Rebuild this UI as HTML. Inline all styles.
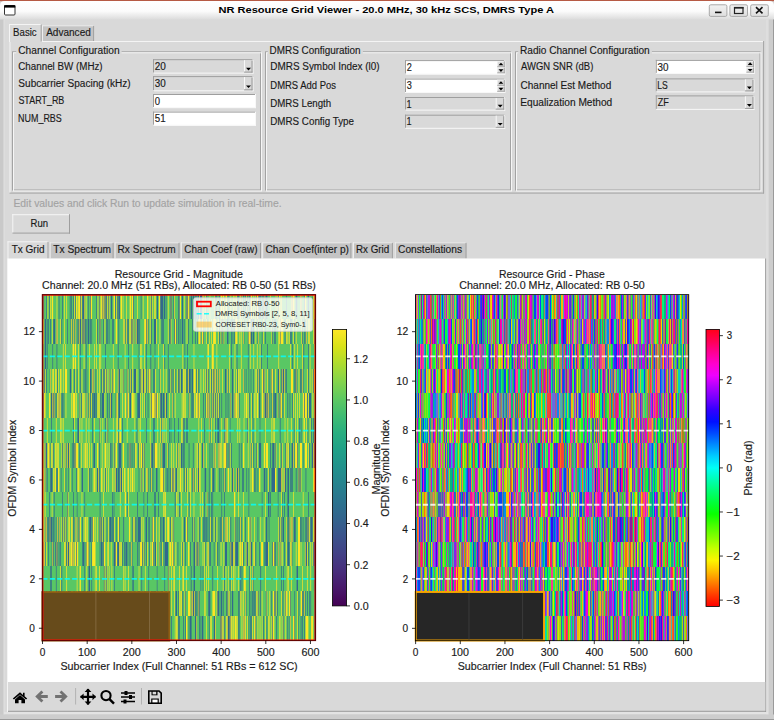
<!DOCTYPE html>
<html><head><meta charset="utf-8"><title>NR Resource Grid Viewer</title>
<style>html,body{margin:0;padding:0;width:774px;height:720px;overflow:hidden;background:#d9d9d9}svg{display:block}text{font-family:"Liberation Sans",sans-serif;white-space:pre}</style>
</head><body><svg width="774" height="720" viewBox="0 0 774 720">
<rect x="0.00" y="0.00" width="774.00" height="720.00" fill="#d9d9d9"/>
<defs><linearGradient id="tb" x1="0" y1="0" x2="0" y2="1"><stop offset="0" stop-color="#ffffff"/><stop offset="0.55" stop-color="#fbfbfb"/><stop offset="1" stop-color="#dcdcdc"/></linearGradient><linearGradient id="btn" x1="0" y1="0" x2="0" y2="1"><stop offset="0" stop-color="#f2f2f2"/><stop offset="1" stop-color="#dedede"/></linearGradient></defs>
<rect x="0.00" y="0.00" width="774.00" height="1.20" fill="#b65a44"/>
<path d="M0 19.5V6Q0 1 5 1H769Q774 1 774 6V19.5Z" fill="url(#tb)"/>
<rect x="4.5" y="5.5" width="10.5" height="9.5" rx="1" fill="#fff" stroke="#333" stroke-width="1"/>
<rect x="4.20" y="5.20" width="11.10" height="2.40" fill="#000"/>
<text x="218.46" y="12.90" font-size="9.93" font-weight="bold" fill="#000" textLength="335.53" lengthAdjust="spacingAndGlyphs">NR Resource Grid Viewer - 20.0 MHz, 30 kHz SCS, DMRS Type A</text>
<rect x="709.3" y="4.8" width="17.6" height="11.6" rx="1.5" fill="url(#btn)" stroke="#a9a9a9" stroke-width="1"/>
<rect x="729.9" y="4.8" width="17.6" height="11.6" rx="1.5" fill="url(#btn)" stroke="#a9a9a9" stroke-width="1"/>
<rect x="750.7" y="4.8" width="17.6" height="11.6" rx="1.5" fill="url(#btn)" stroke="#a9a9a9" stroke-width="1"/>
<rect x="715.00" y="11.60" width="6.50" height="1.60" fill="#111"/>
<rect x="734.5" y="7.5" width="8.5" height="6" fill="none" stroke="#222" stroke-width="1.2"/>
<rect x="734.00" y="7.00" width="9.50" height="1.60" fill="#222"/>
<path d="M756 7.2L762.5 13.4M762.5 7.2L756 13.4" stroke="#111" stroke-width="1.6"/>
<rect x="0.00" y="19.50" width="4.00" height="700.50" fill="#c9c9c9"/>
<rect x="3.50" y="19.50" width="1.00" height="700.50" fill="#e2e2e2"/>
<rect x="768.50" y="19.50" width="5.50" height="700.50" fill="#cdcdcd"/>
<rect x="766.00" y="19.50" width="2.50" height="700.50" fill="#dedede"/>
<rect x="773.00" y="19.50" width="1.00" height="700.50" fill="#9a9a9a"/>
<rect x="0.00" y="714.50" width="774.00" height="5.50" fill="#cdcdcd"/>
<rect x="4.00" y="712.00" width="764.00" height="2.00" fill="#e3e3e3"/>
<rect x="0.00" y="719.00" width="774.00" height="1.00" fill="#9a9a9a"/>
<rect x="9.50" y="41.00" width="754.50" height="152.50" fill="#d9d9d9"/>
<line x1="10.00" y1="41.50" x2="764.00" y2="41.50" stroke="#f4f4f4" stroke-width="1"/>
<line x1="10.00" y1="41.00" x2="10.00" y2="193.00" stroke="#f4f4f4" stroke-width="1"/>
<line x1="763.60" y1="41.00" x2="763.60" y2="193.50" stroke="#a3a3a3" stroke-width="1"/>
<line x1="9.50" y1="193.10" x2="764.00" y2="193.10" stroke="#a3a3a3" stroke-width="1"/>
<rect x="42.00" y="25.50" width="52.00" height="15.50" fill="#c4c4c4"/>
<line x1="42.50" y1="25.50" x2="42.50" y2="41.00" stroke="#eeeeee" stroke-width="1"/>
<line x1="42.00" y1="25.80" x2="93.50" y2="25.80" stroke="#eeeeee" stroke-width="1"/>
<line x1="93.60" y1="26.00" x2="93.60" y2="41.00" stroke="#a0a0a0" stroke-width="1"/>
<rect x="9.00" y="24.00" width="32.50" height="18.00" fill="#d9d9d9"/>
<line x1="9.50" y1="24.00" x2="9.50" y2="42.00" stroke="#f4f4f4" stroke-width="1"/>
<line x1="9.00" y1="24.50" x2="41.00" y2="24.50" stroke="#f4f4f4" stroke-width="1"/>
<line x1="41.20" y1="24.50" x2="41.20" y2="41.50" stroke="#a3a3a3" stroke-width="1"/>
<text x="13.11" y="35.60" font-size="10.18" fill="#1a1a1a" textLength="23.55" lengthAdjust="spacingAndGlyphs" stroke="#1a1a1a" stroke-width="0.15">Basic</text>
<text x="46.18" y="35.60" font-size="10.18" fill="#1a1a1a" textLength="44.63" lengthAdjust="spacingAndGlyphs" stroke="#1a1a1a" stroke-width="0.15">Advanced</text>
<rect x="12.50" y="51.80" width="248.00" height="138.20" fill="none" stroke="#a3a3a3" stroke-width="1"/>
<rect x="13.50" y="52.80" width="248.00" height="138.20" fill="none" stroke="#f6f6f6" stroke-width="1"/>
<rect x="16.20" y="48.30" width="105.41" height="7.00" fill="#d9d9d9"/>
<text x="18.28" y="54.00" font-size="10.18" fill="#1a1a1a" textLength="101.31" lengthAdjust="spacingAndGlyphs" stroke="#1a1a1a" stroke-width="0.15">Channel Configuration</text>
<rect x="265.50" y="51.80" width="245.00" height="138.20" fill="none" stroke="#a3a3a3" stroke-width="1"/>
<rect x="266.50" y="52.80" width="245.00" height="138.20" fill="none" stroke="#f6f6f6" stroke-width="1"/>
<rect x="267.80" y="48.30" width="95.06" height="7.00" fill="#d9d9d9"/>
<text x="269.59" y="54.00" font-size="10.18" fill="#1a1a1a" textLength="90.86" lengthAdjust="spacingAndGlyphs" stroke="#1a1a1a" stroke-width="0.15">DMRS Configuration</text>
<rect x="515.50" y="51.80" width="244.50" height="138.20" fill="none" stroke="#a3a3a3" stroke-width="1"/>
<rect x="516.50" y="52.80" width="244.50" height="138.20" fill="none" stroke="#f6f6f6" stroke-width="1"/>
<rect x="518.20" y="48.30" width="133.72" height="7.00" fill="#d9d9d9"/>
<text x="519.97" y="54.00" font-size="10.18" fill="#1a1a1a" textLength="129.74" lengthAdjust="spacingAndGlyphs" stroke="#1a1a1a" stroke-width="0.15">Radio Channel Configuration</text>
<text x="18.30" y="69.50" font-size="10.18" fill="#1a1a1a" textLength="84.31" lengthAdjust="spacingAndGlyphs" stroke="#1a1a1a" stroke-width="0.15">Channel BW (MHz)</text>
<text x="18.34" y="87.00" font-size="10.18" fill="#1a1a1a" textLength="112.31" lengthAdjust="spacingAndGlyphs" stroke="#1a1a1a" stroke-width="0.15">Subcarrier Spacing (kHz)</text>
<text x="18.40" y="104.30" font-size="10.18" fill="#1a1a1a" textLength="45.93" lengthAdjust="spacingAndGlyphs" stroke="#1a1a1a" stroke-width="0.15">START_RB</text>
<text x="18.07" y="121.70" font-size="10.18" fill="#1a1a1a" textLength="43.72" lengthAdjust="spacingAndGlyphs" stroke="#1a1a1a" stroke-width="0.15">NUM_RBS</text>
<rect x="153.00" y="59.20" width="100.50" height="14.40" fill="#d9d9d9"/>
<line x1="153.00" y1="59.70" x2="253.50" y2="59.70" stroke="#9e9e9e" stroke-width="1"/>
<line x1="153.50" y1="59.20" x2="153.50" y2="73.60" stroke="#9e9e9e" stroke-width="1"/>
<line x1="153.00" y1="73.10" x2="253.50" y2="73.10" stroke="#f8f8f8" stroke-width="1"/>
<line x1="253.00" y1="59.20" x2="253.00" y2="73.60" stroke="#f8f8f8" stroke-width="1"/>
<text x="154.70" y="69.80" font-size="10.18" fill="#1a1a1a" textLength="11.15" lengthAdjust="spacingAndGlyphs" stroke="#1a1a1a" stroke-width="0.15">20</text>
<rect x="244.00" y="60.20" width="8.50" height="12.40" fill="#d9d9d9"/>
<line x1="244.50" y1="60.20" x2="244.50" y2="72.60" stroke="#f8f8f8" stroke-width="1"/>
<line x1="252.00" y1="60.70" x2="252.00" y2="72.60" stroke="#9a9a9a" stroke-width="1"/>
<line x1="244.00" y1="72.10" x2="252.50" y2="72.10" stroke="#9a9a9a" stroke-width="1"/>
<path d="M246.00 67.80h5l-2.5 2.6z" fill="#000"/>
<rect x="153.00" y="76.10" width="100.50" height="15.20" fill="#d9d9d9"/>
<line x1="153.00" y1="76.60" x2="253.50" y2="76.60" stroke="#9e9e9e" stroke-width="1"/>
<line x1="153.50" y1="76.10" x2="153.50" y2="91.30" stroke="#9e9e9e" stroke-width="1"/>
<line x1="153.00" y1="90.80" x2="253.50" y2="90.80" stroke="#f8f8f8" stroke-width="1"/>
<line x1="253.00" y1="76.10" x2="253.00" y2="91.30" stroke="#f8f8f8" stroke-width="1"/>
<text x="154.82" y="86.70" font-size="10.18" fill="#1a1a1a" textLength="10.99" lengthAdjust="spacingAndGlyphs" stroke="#1a1a1a" stroke-width="0.15">30</text>
<rect x="244.00" y="77.10" width="8.50" height="13.20" fill="#d9d9d9"/>
<line x1="244.50" y1="77.10" x2="244.50" y2="90.30" stroke="#f8f8f8" stroke-width="1"/>
<line x1="252.00" y1="77.60" x2="252.00" y2="90.30" stroke="#9a9a9a" stroke-width="1"/>
<line x1="244.00" y1="89.80" x2="252.50" y2="89.80" stroke="#9a9a9a" stroke-width="1"/>
<path d="M246.00 85.50h5l-2.5 2.6z" fill="#000"/>
<rect x="153.00" y="94.00" width="103.00" height="14.10" fill="#ffffff"/>
<line x1="153.00" y1="94.50" x2="256.00" y2="94.50" stroke="#9e9e9e" stroke-width="1"/>
<line x1="153.50" y1="94.00" x2="153.50" y2="108.10" stroke="#9e9e9e" stroke-width="1"/>
<line x1="153.00" y1="107.60" x2="256.00" y2="107.60" stroke="#f8f8f8" stroke-width="1"/>
<line x1="255.50" y1="94.00" x2="255.50" y2="108.10" stroke="#f8f8f8" stroke-width="1"/>
<text x="154.83" y="104.60" font-size="10.18" fill="#1a1a1a" textLength="5.31" lengthAdjust="spacingAndGlyphs" stroke="#1a1a1a" stroke-width="0.15">0</text>
<rect x="153.00" y="111.60" width="103.00" height="14.10" fill="#ffffff"/>
<line x1="153.00" y1="112.10" x2="256.00" y2="112.10" stroke="#9e9e9e" stroke-width="1"/>
<line x1="153.50" y1="111.60" x2="153.50" y2="125.70" stroke="#9e9e9e" stroke-width="1"/>
<line x1="153.00" y1="125.20" x2="256.00" y2="125.20" stroke="#f8f8f8" stroke-width="1"/>
<line x1="255.50" y1="111.60" x2="255.50" y2="125.70" stroke="#f8f8f8" stroke-width="1"/>
<text x="154.81" y="122.20" font-size="10.18" fill="#1a1a1a" textLength="10.85" lengthAdjust="spacingAndGlyphs" stroke="#1a1a1a" stroke-width="0.15">51</text>
<text x="270.28" y="70.30" font-size="10.18" fill="#1a1a1a" textLength="109.32" lengthAdjust="spacingAndGlyphs" stroke="#1a1a1a" stroke-width="0.15">DMRS Symbol Index (l0)</text>
<text x="270.33" y="89.00" font-size="10.18" fill="#1a1a1a" textLength="65.73" lengthAdjust="spacingAndGlyphs" stroke="#1a1a1a" stroke-width="0.15">DMRS Add Pos</text>
<text x="270.31" y="106.70" font-size="10.18" fill="#1a1a1a" textLength="60.83" lengthAdjust="spacingAndGlyphs" stroke="#1a1a1a" stroke-width="0.15">DMRS Length</text>
<text x="270.30" y="124.70" font-size="10.18" fill="#1a1a1a" textLength="83.65" lengthAdjust="spacingAndGlyphs" stroke="#1a1a1a" stroke-width="0.15">DMRS Config Type</text>
<rect x="405.00" y="60.10" width="100.20" height="14.40" fill="#ffffff"/>
<line x1="405.00" y1="60.60" x2="505.20" y2="60.60" stroke="#9e9e9e" stroke-width="1"/>
<line x1="405.50" y1="60.10" x2="405.50" y2="74.50" stroke="#9e9e9e" stroke-width="1"/>
<line x1="405.00" y1="74.00" x2="505.20" y2="74.00" stroke="#f8f8f8" stroke-width="1"/>
<line x1="504.70" y1="60.10" x2="504.70" y2="74.50" stroke="#f8f8f8" stroke-width="1"/>
<text x="406.74" y="70.70" font-size="10.18" fill="#1a1a1a" textLength="5.11" lengthAdjust="spacingAndGlyphs" stroke="#1a1a1a" stroke-width="0.15">2</text>
<rect x="497.20" y="61.30" width="7.50" height="5.90" fill="#d9d9d9"/>
<line x1="497.60" y1="61.30" x2="497.60" y2="67.20" stroke="#f4f4f4" stroke-width="0.8"/>
<line x1="497.20" y1="61.70" x2="504.70" y2="61.70" stroke="#f4f4f4" stroke-width="0.8"/>
<line x1="504.30" y1="61.30" x2="504.30" y2="67.20" stroke="#9a9a9a" stroke-width="0.8"/>
<line x1="497.20" y1="66.80" x2="504.70" y2="66.80" stroke="#9a9a9a" stroke-width="0.8"/>
<rect x="497.20" y="67.80" width="7.50" height="5.40" fill="#d9d9d9"/>
<line x1="497.60" y1="67.80" x2="497.60" y2="73.20" stroke="#f4f4f4" stroke-width="0.8"/>
<line x1="497.20" y1="68.20" x2="504.70" y2="68.20" stroke="#f4f4f4" stroke-width="0.8"/>
<line x1="504.30" y1="67.80" x2="504.30" y2="73.20" stroke="#9a9a9a" stroke-width="0.8"/>
<line x1="497.20" y1="72.80" x2="504.70" y2="72.80" stroke="#9a9a9a" stroke-width="0.8"/>
<path d="M498.55 65.30h4.8l-2.4-2.6z M498.55 69.30h4.8l-2.4 2.6z" fill="#000"/>
<rect x="405.00" y="78.60" width="100.20" height="14.40" fill="#ffffff"/>
<line x1="405.00" y1="79.10" x2="505.20" y2="79.10" stroke="#9e9e9e" stroke-width="1"/>
<line x1="405.50" y1="78.60" x2="405.50" y2="93.00" stroke="#9e9e9e" stroke-width="1"/>
<line x1="405.00" y1="92.50" x2="505.20" y2="92.50" stroke="#f8f8f8" stroke-width="1"/>
<line x1="504.70" y1="78.60" x2="504.70" y2="93.00" stroke="#f8f8f8" stroke-width="1"/>
<text x="406.85" y="89.20" font-size="10.18" fill="#1a1a1a" textLength="5.10" lengthAdjust="spacingAndGlyphs" stroke="#1a1a1a" stroke-width="0.15">3</text>
<rect x="497.20" y="79.80" width="7.50" height="5.90" fill="#d9d9d9"/>
<line x1="497.60" y1="79.80" x2="497.60" y2="85.70" stroke="#f4f4f4" stroke-width="0.8"/>
<line x1="497.20" y1="80.20" x2="504.70" y2="80.20" stroke="#f4f4f4" stroke-width="0.8"/>
<line x1="504.30" y1="79.80" x2="504.30" y2="85.70" stroke="#9a9a9a" stroke-width="0.8"/>
<line x1="497.20" y1="85.30" x2="504.70" y2="85.30" stroke="#9a9a9a" stroke-width="0.8"/>
<rect x="497.20" y="86.30" width="7.50" height="5.40" fill="#d9d9d9"/>
<line x1="497.60" y1="86.30" x2="497.60" y2="91.70" stroke="#f4f4f4" stroke-width="0.8"/>
<line x1="497.20" y1="86.70" x2="504.70" y2="86.70" stroke="#f4f4f4" stroke-width="0.8"/>
<line x1="504.30" y1="86.30" x2="504.30" y2="91.70" stroke="#9a9a9a" stroke-width="0.8"/>
<line x1="497.20" y1="91.30" x2="504.70" y2="91.30" stroke="#9a9a9a" stroke-width="0.8"/>
<path d="M498.55 83.80h4.8l-2.4-2.6z M498.55 87.80h4.8l-2.4 2.6z" fill="#000"/>
<rect x="405.00" y="97.00" width="100.20" height="13.60" fill="#d9d9d9"/>
<line x1="405.00" y1="97.50" x2="505.20" y2="97.50" stroke="#9e9e9e" stroke-width="1"/>
<line x1="405.50" y1="97.00" x2="405.50" y2="110.60" stroke="#9e9e9e" stroke-width="1"/>
<line x1="405.00" y1="110.10" x2="505.20" y2="110.10" stroke="#f8f8f8" stroke-width="1"/>
<line x1="504.70" y1="97.00" x2="504.70" y2="110.60" stroke="#f8f8f8" stroke-width="1"/>
<text x="406.51" y="107.60" font-size="10.18" fill="#1a1a1a" textLength="5.07" lengthAdjust="spacingAndGlyphs" stroke="#1a1a1a" stroke-width="0.15">1</text>
<rect x="495.70" y="98.00" width="8.50" height="11.60" fill="#d9d9d9"/>
<line x1="496.20" y1="98.00" x2="496.20" y2="109.60" stroke="#f8f8f8" stroke-width="1"/>
<line x1="503.70" y1="98.50" x2="503.70" y2="109.60" stroke="#9a9a9a" stroke-width="1"/>
<line x1="495.70" y1="109.10" x2="504.20" y2="109.10" stroke="#9a9a9a" stroke-width="1"/>
<path d="M497.70 104.80h5l-2.5 2.6z" fill="#000"/>
<rect x="405.00" y="114.70" width="100.20" height="14.10" fill="#d9d9d9"/>
<line x1="405.00" y1="115.20" x2="505.20" y2="115.20" stroke="#9e9e9e" stroke-width="1"/>
<line x1="405.50" y1="114.70" x2="405.50" y2="128.80" stroke="#9e9e9e" stroke-width="1"/>
<line x1="405.00" y1="128.30" x2="505.20" y2="128.30" stroke="#f8f8f8" stroke-width="1"/>
<line x1="504.70" y1="114.70" x2="504.70" y2="128.80" stroke="#f8f8f8" stroke-width="1"/>
<text x="406.51" y="125.30" font-size="10.18" fill="#1a1a1a" textLength="5.07" lengthAdjust="spacingAndGlyphs" stroke="#1a1a1a" stroke-width="0.15">1</text>
<rect x="495.70" y="115.70" width="8.50" height="12.10" fill="#d9d9d9"/>
<line x1="496.20" y1="115.70" x2="496.20" y2="127.80" stroke="#f8f8f8" stroke-width="1"/>
<line x1="503.70" y1="116.20" x2="503.70" y2="127.80" stroke="#9a9a9a" stroke-width="1"/>
<line x1="495.70" y1="127.30" x2="504.20" y2="127.30" stroke="#9a9a9a" stroke-width="1"/>
<path d="M497.70 123.00h5l-2.5 2.6z" fill="#000"/>
<text x="521.08" y="70.00" font-size="10.18" fill="#1a1a1a" textLength="72.25" lengthAdjust="spacingAndGlyphs" stroke="#1a1a1a" stroke-width="0.15">AWGN SNR (dB)</text>
<text x="520.59" y="88.50" font-size="10.18" fill="#1a1a1a" textLength="90.65" lengthAdjust="spacingAndGlyphs" stroke="#1a1a1a" stroke-width="0.15">Channel Est Method</text>
<text x="520.27" y="105.80" font-size="10.18" fill="#1a1a1a" textLength="92.00" lengthAdjust="spacingAndGlyphs" stroke="#1a1a1a" stroke-width="0.15">Equalization Method</text>
<rect x="655.80" y="59.90" width="98.60" height="14.00" fill="#ffffff"/>
<line x1="655.80" y1="60.40" x2="754.40" y2="60.40" stroke="#9e9e9e" stroke-width="1"/>
<line x1="656.30" y1="59.90" x2="656.30" y2="73.90" stroke="#9e9e9e" stroke-width="1"/>
<line x1="655.80" y1="73.40" x2="754.40" y2="73.40" stroke="#f8f8f8" stroke-width="1"/>
<line x1="753.90" y1="59.90" x2="753.90" y2="73.90" stroke="#f8f8f8" stroke-width="1"/>
<text x="657.62" y="70.50" font-size="10.18" fill="#1a1a1a" textLength="10.99" lengthAdjust="spacingAndGlyphs" stroke="#1a1a1a" stroke-width="0.15">30</text>
<rect x="746.40" y="61.10" width="7.50" height="5.70" fill="#d9d9d9"/>
<line x1="746.80" y1="61.10" x2="746.80" y2="66.80" stroke="#f4f4f4" stroke-width="0.8"/>
<line x1="746.40" y1="61.50" x2="753.90" y2="61.50" stroke="#f4f4f4" stroke-width="0.8"/>
<line x1="753.50" y1="61.10" x2="753.50" y2="66.80" stroke="#9a9a9a" stroke-width="0.8"/>
<line x1="746.40" y1="66.40" x2="753.90" y2="66.40" stroke="#9a9a9a" stroke-width="0.8"/>
<rect x="746.40" y="67.40" width="7.50" height="5.20" fill="#d9d9d9"/>
<line x1="746.80" y1="67.40" x2="746.80" y2="72.60" stroke="#f4f4f4" stroke-width="0.8"/>
<line x1="746.40" y1="67.80" x2="753.90" y2="67.80" stroke="#f4f4f4" stroke-width="0.8"/>
<line x1="753.50" y1="67.40" x2="753.50" y2="72.60" stroke="#9a9a9a" stroke-width="0.8"/>
<line x1="746.40" y1="72.20" x2="753.90" y2="72.20" stroke="#9a9a9a" stroke-width="0.8"/>
<path d="M747.75 64.90h4.8l-2.4-2.6z M747.75 68.90h4.8l-2.4 2.6z" fill="#000"/>
<rect x="655.80" y="78.40" width="98.60" height="14.00" fill="#d9d9d9"/>
<line x1="655.80" y1="78.90" x2="754.40" y2="78.90" stroke="#9e9e9e" stroke-width="1"/>
<line x1="656.30" y1="78.40" x2="656.30" y2="92.40" stroke="#9e9e9e" stroke-width="1"/>
<line x1="655.80" y1="91.90" x2="754.40" y2="91.90" stroke="#f8f8f8" stroke-width="1"/>
<line x1="753.90" y1="78.40" x2="753.90" y2="92.40" stroke="#f8f8f8" stroke-width="1"/>
<text x="657.30" y="89.00" font-size="10.18" fill="#1a1a1a" textLength="10.49" lengthAdjust="spacingAndGlyphs" stroke="#1a1a1a" stroke-width="0.15">LS</text>
<rect x="744.90" y="79.40" width="8.50" height="12.00" fill="#d9d9d9"/>
<line x1="745.40" y1="79.40" x2="745.40" y2="91.40" stroke="#f8f8f8" stroke-width="1"/>
<line x1="752.90" y1="79.90" x2="752.90" y2="91.40" stroke="#9a9a9a" stroke-width="1"/>
<line x1="744.90" y1="90.90" x2="753.40" y2="90.90" stroke="#9a9a9a" stroke-width="1"/>
<path d="M746.90 86.60h5l-2.5 2.6z" fill="#000"/>
<rect x="655.80" y="95.40" width="98.60" height="14.50" fill="#d9d9d9"/>
<line x1="655.80" y1="95.90" x2="754.40" y2="95.90" stroke="#9e9e9e" stroke-width="1"/>
<line x1="656.30" y1="95.40" x2="656.30" y2="109.90" stroke="#9e9e9e" stroke-width="1"/>
<line x1="655.80" y1="109.40" x2="754.40" y2="109.40" stroke="#f8f8f8" stroke-width="1"/>
<line x1="753.90" y1="95.40" x2="753.90" y2="109.90" stroke="#f8f8f8" stroke-width="1"/>
<text x="657.71" y="106.00" font-size="10.18" fill="#1a1a1a" textLength="11.13" lengthAdjust="spacingAndGlyphs" stroke="#1a1a1a" stroke-width="0.15">ZF</text>
<rect x="744.90" y="96.40" width="8.50" height="12.50" fill="#d9d9d9"/>
<line x1="745.40" y1="96.40" x2="745.40" y2="108.90" stroke="#f8f8f8" stroke-width="1"/>
<line x1="752.90" y1="96.90" x2="752.90" y2="108.90" stroke="#9a9a9a" stroke-width="1"/>
<line x1="744.90" y1="108.40" x2="753.40" y2="108.40" stroke="#9a9a9a" stroke-width="1"/>
<path d="M746.90 104.10h5l-2.5 2.6z" fill="#000"/>
<text x="13.45" y="206.60" font-size="10.18" fill="#a3a3a3" textLength="268.12" lengthAdjust="spacingAndGlyphs" stroke="#a3a3a3" stroke-width="0.15">Edit values and click Run to update simulation in real-time.</text>
<rect x="12.30" y="214.20" width="57.70" height="19.40" fill="#d9d9d9"/>
<line x1="12.30" y1="214.70" x2="70.00" y2="214.70" stroke="#f6f6f6" stroke-width="1"/>
<line x1="12.80" y1="214.20" x2="12.80" y2="233.60" stroke="#f6f6f6" stroke-width="1"/>
<line x1="69.50" y1="214.20" x2="69.50" y2="233.60" stroke="#9e9e9e" stroke-width="1"/>
<line x1="12.30" y1="233.10" x2="70.00" y2="233.10" stroke="#9e9e9e" stroke-width="1"/>
<text x="30.52" y="227.30" font-size="10.18" fill="#1a1a1a" textLength="17.51" lengthAdjust="spacingAndGlyphs" stroke="#1a1a1a" stroke-width="0.15">Run</text>
<rect x="49.70" y="242.30" width="63.90" height="16.20" fill="#c4c4c4"/>
<line x1="50.20" y1="242.30" x2="50.20" y2="258.50" stroke="#eeeeee" stroke-width="1"/>
<line x1="49.70" y1="242.80" x2="113.60" y2="242.80" stroke="#eeeeee" stroke-width="1"/>
<line x1="113.10" y1="242.80" x2="113.10" y2="258.50" stroke="#a0a0a0" stroke-width="1"/>
<text x="53.27" y="253.20" font-size="10.18" fill="#1a1a1a" textLength="57.77" lengthAdjust="spacingAndGlyphs" stroke="#1a1a1a" stroke-width="0.15">Tx Spectrum</text>
<rect x="114.60" y="242.30" width="64.90" height="16.20" fill="#c4c4c4"/>
<line x1="115.10" y1="242.30" x2="115.10" y2="258.50" stroke="#eeeeee" stroke-width="1"/>
<line x1="114.60" y1="242.80" x2="179.50" y2="242.80" stroke="#eeeeee" stroke-width="1"/>
<line x1="179.00" y1="242.80" x2="179.00" y2="258.50" stroke="#a0a0a0" stroke-width="1"/>
<text x="117.57" y="253.20" font-size="10.18" fill="#1a1a1a" textLength="58.21" lengthAdjust="spacingAndGlyphs" stroke="#1a1a1a" stroke-width="0.15">Rx Spectrum</text>
<rect x="180.90" y="242.30" width="80.10" height="16.20" fill="#c4c4c4"/>
<line x1="181.40" y1="242.30" x2="181.40" y2="258.50" stroke="#eeeeee" stroke-width="1"/>
<line x1="180.90" y1="242.80" x2="261.00" y2="242.80" stroke="#eeeeee" stroke-width="1"/>
<line x1="260.50" y1="242.80" x2="260.50" y2="258.50" stroke="#a0a0a0" stroke-width="1"/>
<text x="184.19" y="253.20" font-size="10.18" fill="#1a1a1a" textLength="73.27" lengthAdjust="spacingAndGlyphs" stroke="#1a1a1a" stroke-width="0.15">Chan Coef (raw)</text>
<rect x="262.20" y="242.30" width="89.20" height="16.20" fill="#c4c4c4"/>
<line x1="262.70" y1="242.30" x2="262.70" y2="258.50" stroke="#eeeeee" stroke-width="1"/>
<line x1="262.20" y1="242.80" x2="351.40" y2="242.80" stroke="#eeeeee" stroke-width="1"/>
<line x1="350.90" y1="242.80" x2="350.90" y2="258.50" stroke="#a0a0a0" stroke-width="1"/>
<text x="265.48" y="253.20" font-size="10.18" fill="#1a1a1a" textLength="83.45" lengthAdjust="spacingAndGlyphs" stroke="#1a1a1a" stroke-width="0.15">Chan Coef(inter p)</text>
<rect x="353.00" y="242.30" width="39.90" height="16.20" fill="#c4c4c4"/>
<line x1="353.50" y1="242.30" x2="353.50" y2="258.50" stroke="#eeeeee" stroke-width="1"/>
<line x1="353.00" y1="242.80" x2="392.90" y2="242.80" stroke="#eeeeee" stroke-width="1"/>
<line x1="392.40" y1="242.80" x2="392.40" y2="258.50" stroke="#a0a0a0" stroke-width="1"/>
<text x="356.00" y="253.20" font-size="10.18" fill="#1a1a1a" textLength="33.24" lengthAdjust="spacingAndGlyphs" stroke="#1a1a1a" stroke-width="0.15">Rx Grid</text>
<rect x="394.80" y="242.30" width="71.70" height="16.20" fill="#c4c4c4"/>
<line x1="395.30" y1="242.30" x2="395.30" y2="258.50" stroke="#eeeeee" stroke-width="1"/>
<line x1="394.80" y1="242.80" x2="466.50" y2="242.80" stroke="#eeeeee" stroke-width="1"/>
<line x1="466.00" y1="242.80" x2="466.00" y2="258.50" stroke="#a0a0a0" stroke-width="1"/>
<text x="398.08" y="253.20" font-size="10.18" fill="#1a1a1a" textLength="63.98" lengthAdjust="spacingAndGlyphs" stroke="#1a1a1a" stroke-width="0.15">Constellations</text>
<rect x="7.50" y="241.30" width="41.00" height="18.20" fill="#d9d9d9"/>
<line x1="8.00" y1="241.30" x2="8.00" y2="259.00" stroke="#f4f4f4" stroke-width="1"/>
<line x1="7.50" y1="241.80" x2="48.50" y2="241.80" stroke="#f4f4f4" stroke-width="1"/>
<line x1="48.00" y1="241.80" x2="48.00" y2="258.50" stroke="#a3a3a3" stroke-width="1"/>
<text x="11.68" y="253.20" font-size="10.18" fill="#1a1a1a" textLength="32.83" lengthAdjust="spacingAndGlyphs" stroke="#1a1a1a" stroke-width="0.15">Tx Grid</text>
<rect x="8.00" y="258.50" width="757.30" height="423.50" fill="#ffffff"/>
<line x1="7.50" y1="258.50" x2="7.50" y2="712.00" stroke="#f4f4f4" stroke-width="1"/>
<line x1="765.60" y1="258.50" x2="765.60" y2="712.00" stroke="#a0a0a0" stroke-width="1"/>
<rect x="8.00" y="682.00" width="757.30" height="29.00" fill="#d9d9d9"/>
<line x1="8.00" y1="711.30" x2="766.00" y2="711.30" stroke="#9c9c9c" stroke-width="1"/>
<g transform="translate(42.300,294.600) scale(0.99745,24.71429)" shape-rendering="crispEdges">
<rect x="0" y="0" width="274" height="14" fill="#74bb5f"/>
<path fill="#42917b" d="M1 0h1v1h-1zM28 0h1v1h-1zM33 0h1v1h-1zM46 0h1v1h-1zM76 0h1v1h-1zM131 0h1v1h-1zM154 0h1v1h-1zM174 0h1v1h-1zM195 0h1v1h-1zM220 0h1v1h-1zM5 1h1v1h-1zM19 1h1v1h-1zM49 1h1v1h-1zM76 1h1v1h-1zM85 1h1v1h-1zM119 1h1v1h-1zM142 1h1v1h-1zM252 1h1v1h-1zM5 2h1v1h-1zM10 2h1v1h-1zM44 2h1v1h-1zM76 2h1v1h-1zM108 2h1v1h-1zM122 2h1v1h-1zM126 2h1v1h-1zM206 2h1v1h-1zM261 2h1v1h-1zM62 3h1v1h-1zM126 3h1v1h-1zM154 3h1v1h-1zM156 3h1v1h-1zM195 3h1v1h-1zM211 3h1v1h-1zM252 3h1v1h-1zM259 3h1v1h-1zM1 4h1v1h-1zM14 4h1v1h-1zM51 4h1v1h-1zM53 4h1v1h-1zM58 4h1v1h-1zM67 4h1v1h-1zM76 4h1v1h-1zM103 4h1v1h-1zM149 4h1v1h-1zM151 4h1v1h-1zM163 4h1v1h-1zM179 4h1v1h-1zM197 4h1v1h-1zM231 4h1v1h-1zM245 4h1v1h-1zM35 5h1v1h-1zM76 5h1v1h-1zM142 5h1v1h-1zM238 5h1v1h-1zM30 6h1v1h-1zM37 6h1v1h-1zM51 6h1v1h-1zM76 6h1v1h-1zM126 6h1v1h-1zM142 6h1v1h-1zM151 6h1v1h-1zM156 6h1v1h-1zM197 6h1v1h-1zM199 6h1v1h-1zM211 6h1v1h-1zM243 6h1v1h-1zM247 6h1v1h-1zM272 6h1v1h-1zM5 7h1v1h-1zM14 7h1v1h-1zM26 7h1v1h-1zM30 7h1v1h-1zM108 7h1v1h-1zM142 7h1v1h-1zM167 7h1v1h-1zM170 7h1v1h-1zM183 7h1v1h-1zM197 7h1v1h-1zM204 7h1v1h-1zM213 7h1v1h-1zM224 7h1v1h-1zM227 7h1v1h-1zM229 7h1v1h-1zM245 7h1v1h-1zM254 7h1v1h-1zM12 8h1v1h-1zM42 8h1v1h-1zM85 8h1v1h-1zM133 8h1v1h-1zM167 8h1v1h-1zM170 8h1v1h-1zM179 8h1v1h-1zM240 8h1v1h-1zM245 8h1v1h-1zM5 9h1v1h-1zM67 9h1v1h-1zM69 9h1v1h-1zM74 9h1v1h-1zM90 9h1v1h-1zM106 9h1v1h-1zM163 9h1v1h-1zM167 9h1v1h-1zM170 9h1v1h-1zM179 9h1v1h-1zM188 9h1v1h-1zM197 9h1v1h-1zM199 9h1v1h-1zM259 9h1v1h-1zM263 9h1v1h-1zM268 9h1v1h-1zM270 9h1v1h-1zM49 10h1v1h-1zM60 10h1v1h-1zM83 10h1v1h-1zM119 10h1v1h-1zM140 10h1v1h-1zM163 10h1v1h-1zM167 10h1v1h-1zM213 10h1v1h-1zM222 10h1v1h-1zM245 10h1v1h-1zM247 10h1v1h-1zM14 11h1v1h-1zM19 11h1v1h-1zM42 11h1v1h-1zM49 11h1v1h-1zM90 11h1v1h-1zM99 11h1v1h-1zM106 11h1v1h-1zM122 11h1v1h-1zM149 11h1v1h-1zM170 11h1v1h-1zM272 11h1v1h-1zM42 12h1v1h-1zM49 12h1v1h-1zM76 12h1v1h-1zM83 12h1v1h-1zM87 12h1v1h-1zM92 12h1v1h-1zM106 12h1v1h-1zM119 12h1v1h-1zM140 12h1v1h-1zM154 12h1v1h-1zM181 12h1v1h-1zM197 12h1v1h-1zM211 12h1v1h-1zM213 12h1v1h-1zM229 12h1v1h-1zM252 12h1v1h-1zM261 12h1v1h-1zM263 12h1v1h-1zM268 12h1v1h-1zM19 13h1v1h-1zM49 13h1v1h-1zM60 13h1v1h-1zM67 13h1v1h-1zM83 13h1v1h-1zM87 13h1v1h-1zM94 13h1v1h-1zM149 13h1v1h-1zM167 13h1v1h-1zM197 13h1v1h-1zM245 13h1v1h-1zM256 13h1v1h-1z"/>
<path fill="#fce624" d="M10 0h1v1h-1zM37 0h1v1h-1zM49 0h1v1h-1zM72 0h1v1h-1zM79 0h1v1h-1zM88 0h1v1h-1zM90 0h1v1h-1zM105 0h1v1h-1zM117 0h1v1h-1zM138 0h1v1h-1zM179 0h1v1h-1zM181 0h1v1h-1zM184 0h1v1h-1zM209 0h1v1h-1zM215 0h1v1h-1zM251 0h1v1h-1zM263 0h1v1h-1zM74 1h1v1h-1zM103 1h1v1h-1zM133 1h1v1h-1zM157 1h1v1h-1zM160 1h1v1h-1zM172 1h1v1h-1zM194 1h1v1h-1zM207 1h1v1h-1zM239 1h2v1h-2zM31 2h1v1h-1zM33 2h1v1h-1zM170 2h1v1h-1zM23 3h2v1h-2zM72 3h1v1h-1zM152 3h1v1h-1zM220 3h1v1h-1zM249 3h2v1h-2zM272 3h2v1h-2zM7 4h1v1h-1zM31 4h2v1h-2zM83 4h1v1h-1zM90 4h1v1h-1zM110 4h2v1h-2zM115 4h1v1h-1zM154 4h1v1h-1zM194 4h1v1h-1zM204 4h1v1h-1zM215 4h1v1h-1zM220 4h1v1h-1zM261 4h1v1h-1zM263 4h1v1h-1zM273 4h1v1h-1zM78 5h1v1h-1zM6 6h1v1h-1zM35 6h1v1h-1zM55 6h1v1h-1zM63 6h1v1h-1zM74 6h1v1h-1zM81 6h1v1h-1zM99 6h1v1h-1zM113 6h2v1h-2zM182 6h2v1h-2zM201 6h1v1h-1zM222 6h1v1h-1zM224 6h2v1h-2zM254 6h1v1h-1zM258 6h2v1h-2zM263 6h2v1h-2zM16 7h1v1h-1zM90 7h1v1h-1zM119 7h2v1h-2zM138 7h1v1h-1zM186 7h1v1h-1zM210 7h1v1h-1zM217 7h1v1h-1zM233 7h1v1h-1zM272 7h2v1h-2zM83 8h1v1h-1zM192 8h1v1h-1zM51 9h1v1h-1zM76 9h1v1h-1zM87 9h1v1h-1zM111 9h1v1h-1zM126 9h1v1h-1zM144 9h1v1h-1zM206 9h1v1h-1zM256 9h2v1h-2zM29 10h1v1h-1zM33 10h1v1h-1zM35 10h1v1h-1zM45 10h1v1h-1zM51 10h2v1h-2zM62 10h1v1h-1zM74 10h1v1h-1zM99 10h1v1h-1zM110 10h1v1h-1zM128 10h1v1h-1zM130 10h1v1h-1zM146 10h1v1h-1zM200 10h1v1h-1zM220 10h1v1h-1zM231 10h1v1h-1zM256 10h2v1h-2zM202 11h1v1h-1zM35 12h1v1h-1zM44 12h1v1h-1zM53 12h1v1h-1zM55 12h2v1h-2zM64 12h1v1h-1zM85 12h1v1h-1zM94 12h1v1h-1zM108 12h1v1h-1zM121 12h2v1h-2zM146 12h2v1h-2zM171 12h2v1h-2zM231 12h1v1h-1zM247 12h1v1h-1zM259 12h1v1h-1zM9 13h1v1h-1zM35 13h2v1h-2zM78 13h2v1h-2zM81 13h1v1h-1zM105 13h1v1h-1zM144 13h1v1h-1zM193 13h1v1h-1zM231 13h1v1h-1zM251 13h1v1h-1zM264 13h2v1h-2zM270 13h1v1h-1z"/>
<path fill="#bada3e" d="M65 0h1v1h-1zM74 0h1v1h-1zM110 0h1v1h-1zM126 0h1v1h-1zM142 0h1v1h-1zM163 0h1v1h-1zM211 0h1v1h-1zM10 1h1v1h-1zM81 1h1v1h-1zM87 1h1v1h-1zM126 1h1v1h-1zM167 1h1v1h-1zM199 1h1v1h-1zM236 1h1v1h-1zM247 1h1v1h-1zM259 1h1v1h-1zM21 2h1v1h-1zM58 2h1v1h-1zM71 2h1v1h-1zM90 2h1v1h-1zM99 2h1v1h-1zM199 2h1v1h-1zM208 2h1v1h-1zM211 2h1v1h-1zM215 2h1v1h-1zM236 2h1v1h-1zM252 2h1v1h-1zM10 3h1v1h-1zM14 3h1v1h-1zM21 3h1v1h-1zM30 3h1v1h-1zM33 3h1v1h-1zM55 3h1v1h-1zM90 3h1v1h-1zM103 3h1v1h-1zM135 3h1v1h-1zM142 3h1v1h-1zM163 3h1v1h-1zM170 3h1v1h-1zM192 3h1v1h-1zM42 4h1v1h-1zM49 4h1v1h-1zM55 4h1v1h-1zM142 4h1v1h-1zM202 4h1v1h-1zM5 5h1v1h-1zM14 5h1v1h-1zM21 5h1v1h-1zM71 5h1v1h-1zM74 5h1v1h-1zM115 5h1v1h-1zM179 5h1v1h-1zM195 5h1v1h-1zM231 5h1v1h-1zM10 6h1v1h-1zM14 6h1v1h-1zM49 6h1v1h-1zM94 6h1v1h-1zM131 6h1v1h-1zM158 6h1v1h-1zM179 6h1v1h-1zM215 6h1v1h-1zM240 6h1v1h-1zM1 7h1v1h-1zM46 7h1v1h-1zM62 7h1v1h-1zM147 7h1v1h-1zM158 7h1v1h-1zM1 8h1v1h-1zM78 8h1v1h-1zM122 8h1v1h-1zM158 8h1v1h-1zM1 9h1v1h-1zM26 9h1v1h-1zM30 9h1v1h-1zM55 9h1v1h-1zM99 9h1v1h-1zM218 9h1v1h-1zM236 9h1v1h-1zM65 10h1v1h-1zM78 10h1v1h-1zM174 10h1v1h-1zM192 10h1v1h-1zM211 10h1v1h-1zM240 10h1v1h-1zM268 10h1v1h-1zM81 11h1v1h-1zM103 11h1v1h-1zM131 11h1v1h-1zM186 11h1v1h-1zM208 11h1v1h-1zM268 11h1v1h-1zM10 12h1v1h-1zM30 12h1v1h-1zM90 12h1v1h-1zM126 12h1v1h-1zM138 12h1v1h-1zM163 12h1v1h-1zM170 12h1v1h-1zM227 12h1v1h-1zM37 13h1v1h-1zM55 13h1v1h-1zM58 13h1v1h-1zM122 13h1v1h-1zM126 13h1v1h-1zM135 13h1v1h-1zM195 13h1v1h-1zM227 13h1v1h-1zM243 13h1v1h-1z"/>
<path fill="#59c764" d="M0 0h1v1h-1zM3 0h1v1h-1zM12 0h2v1h-2zM18 0h2v1h-2zM21 0h1v1h-1zM23 0h1v1h-1zM26 0h1v1h-1zM30 0h1v1h-1zM47 0h1v1h-1zM51 0h3v1h-3zM82 0h2v1h-2zM85 0h2v1h-2zM92 0h3v1h-3zM96 0h2v1h-2zM102 0h3v1h-3zM127 0h1v1h-1zM130 0h1v1h-1zM133 0h3v1h-3zM143 0h1v1h-1zM165 0h2v1h-2zM169 0h3v1h-3zM175 0h2v1h-2zM187 0h1v1h-1zM190 0h1v1h-1zM197 0h1v1h-1zM202 0h1v1h-1zM206 0h1v1h-1zM210 0h1v1h-1zM226 0h2v1h-2zM229 0h4v1h-4zM240 0h4v1h-4zM245 0h3v1h-3zM256 0h2v1h-2zM261 0h1v1h-1zM267 0h3v1h-3zM7 1h1v1h-1zM9 1h1v1h-1zM16 1h2v1h-2zM21 1h1v1h-1zM23 1h2v1h-2zM26 1h2v1h-2zM51 1h3v1h-3zM56 1h1v1h-1zM60 1h1v1h-1zM68 1h2v1h-2zM72 1h1v1h-1zM78 1h3v1h-3zM99 1h3v1h-3zM110 1h2v1h-2zM115 1h2v1h-2zM122 1h3v1h-3zM130 1h2v1h-2zM135 1h1v1h-1zM143 1h1v1h-1zM147 1h3v1h-3zM151 1h2v1h-2zM154 1h1v1h-1zM162 1h2v1h-2zM168 1h1v1h-1zM170 1h1v1h-1zM174 1h1v1h-1zM183 1h2v1h-2zM187 1h2v1h-2zM196 1h1v1h-1zM200 1h1v1h-1zM203 1h2v1h-2zM217 1h2v1h-2zM222 1h1v1h-1zM224 1h5v1h-5zM231 1h1v1h-1zM234 1h2v1h-2zM250 1h1v1h-1zM255 1h4v1h-4zM261 1h1v1h-1zM265 1h1v1h-1zM268 1h3v1h-3zM0 2h2v1h-2zM6 2h4v1h-4zM12 2h2v1h-2zM16 2h4v1h-4zM24 2h6v1h-6zM35 2h1v1h-1zM37 2h1v1h-1zM39 2h2v1h-2zM45 2h2v1h-2zM48 2h4v1h-4zM53 2h1v1h-1zM55 2h2v1h-2zM60 2h3v1h-3zM64 2h6v1h-6zM72 2h3v1h-3zM77 2h5v1h-5zM84 2h2v1h-2zM87 2h3v1h-3zM92 2h4v1h-4zM101 2h1v1h-1zM103 2h1v1h-1zM105 2h3v1h-3zM110 2h2v1h-2zM114 2h2v1h-2zM117 2h4v1h-4zM124 2h1v1h-1zM127 2h13v1h-13zM144 2h1v1h-1zM146 2h5v1h-5zM153 2h12v1h-12zM167 2h2v1h-2zM172 2h2v1h-2zM176 2h11v1h-11zM188 2h1v1h-1zM190 2h2v1h-2zM196 2h2v1h-2zM200 2h5v1h-5zM209 2h2v1h-2zM213 2h1v1h-1zM216 2h1v1h-1zM220 2h5v1h-5zM226 2h10v1h-10zM238 2h10v1h-10zM249 2h1v1h-1zM251 2h1v1h-1zM254 2h1v1h-1zM256 2h4v1h-4zM263 2h3v1h-3zM269 2h3v1h-3zM1 3h1v1h-1zM5 3h2v1h-2zM12 3h1v1h-1zM17 3h1v1h-1zM26 3h1v1h-1zM31 3h1v1h-1zM37 3h1v1h-1zM46 3h1v1h-1zM56 3h1v1h-1zM58 3h1v1h-1zM73 3h2v1h-2zM83 3h1v1h-1zM96 3h1v1h-1zM110 3h1v1h-1zM115 3h2v1h-2zM119 3h2v1h-2zM122 3h1v1h-1zM160 3h1v1h-1zM167 3h1v1h-1zM179 3h1v1h-1zM181 3h1v1h-1zM188 3h1v1h-1zM193 3h1v1h-1zM199 3h2v1h-2zM205 3h1v1h-1zM210 3h1v1h-1zM218 3h1v1h-1zM224 3h1v1h-1zM234 3h1v1h-1zM238 3h1v1h-1zM245 3h3v1h-3zM262 3h2v1h-2zM0 4h1v1h-1zM4 4h2v1h-2zM25 4h4v1h-4zM35 4h1v1h-1zM64 4h1v1h-1zM71 4h2v1h-2zM78 4h2v1h-2zM81 4h1v1h-1zM94 4h1v1h-1zM99 4h1v1h-1zM101 4h1v1h-1zM104 4h1v1h-1zM107 4h1v1h-1zM126 4h1v1h-1zM128 4h2v1h-2zM134 4h5v1h-5zM144 4h2v1h-2zM158 4h3v1h-3zM162 4h1v1h-1zM178 4h1v1h-1zM181 4h2v1h-2zM198 4h4v1h-4zM208 4h1v1h-1zM211 4h1v1h-1zM243 4h2v1h-2zM249 4h1v1h-1zM252 4h1v1h-1zM254 4h1v1h-1zM256 4h1v1h-1zM258 4h2v1h-2zM1 5h3v1h-3zM6 5h3v1h-3zM10 5h3v1h-3zM15 5h3v1h-3zM22 5h9v1h-9zM33 5h2v1h-2zM41 5h2v1h-2zM45 5h1v1h-1zM48 5h2v1h-2zM51 5h1v1h-1zM53 5h4v1h-4zM59 5h1v1h-1zM62 5h1v1h-1zM67 5h3v1h-3zM72 5h2v1h-2zM81 5h3v1h-3zM86 5h6v1h-6zM99 5h5v1h-5zM105 5h2v1h-2zM109 5h2v1h-2zM113 5h2v1h-2zM117 5h1v1h-1zM125 5h2v1h-2zM130 5h2v1h-2zM133 5h3v1h-3zM137 5h2v1h-2zM143 5h1v1h-1zM146 5h10v1h-10zM158 5h1v1h-1zM160 5h2v1h-2zM163 5h3v1h-3zM170 5h1v1h-1zM174 5h1v1h-1zM178 5h1v1h-1zM181 5h1v1h-1zM186 5h1v1h-1zM189 5h6v1h-6zM199 5h2v1h-2zM203 5h2v1h-2zM207 5h2v1h-2zM214 5h3v1h-3zM219 5h4v1h-4zM224 5h5v1h-5zM233 5h4v1h-4zM239 5h3v1h-3zM244 5h1v1h-1zM247 5h1v1h-1zM250 5h1v1h-1zM254 5h1v1h-1zM256 5h1v1h-1zM260 5h1v1h-1zM263 5h1v1h-1zM270 5h1v1h-1zM272 5h2v1h-2zM12 6h1v1h-1zM17 6h2v1h-2zM28 6h1v1h-1zM40 6h1v1h-1zM46 6h1v1h-1zM48 6h1v1h-1zM53 6h1v1h-1zM58 6h1v1h-1zM61 6h1v1h-1zM83 6h2v1h-2zM95 6h1v1h-1zM103 6h5v1h-5zM124 6h1v1h-1zM127 6h2v1h-2zM133 6h1v1h-1zM143 6h3v1h-3zM148 6h2v1h-2zM152 6h1v1h-1zM159 6h1v1h-1zM163 6h1v1h-1zM165 6h2v1h-2zM174 6h1v1h-1zM190 6h6v1h-6zM200 6h1v1h-1zM203 6h2v1h-2zM213 6h1v1h-1zM216 6h1v1h-1zM220 6h1v1h-1zM226 6h2v1h-2zM229 6h1v1h-1zM235 6h2v1h-2zM238 6h1v1h-1zM241 6h2v1h-2zM248 6h1v1h-1zM256 6h2v1h-2zM265 6h1v1h-1zM268 6h1v1h-1zM0 7h1v1h-1zM6 7h2v1h-2zM20 7h2v1h-2zM25 7h1v1h-1zM31 7h3v1h-3zM41 7h4v1h-4zM50 7h1v1h-1zM58 7h1v1h-1zM65 7h1v1h-1zM67 7h3v1h-3zM81 7h1v1h-1zM84 7h1v1h-1zM87 7h1v1h-1zM93 7h3v1h-3zM103 7h1v1h-1zM107 7h1v1h-1zM112 7h2v1h-2zM116 7h2v1h-2zM149 7h1v1h-1zM154 7h1v1h-1zM159 7h3v1h-3zM165 7h1v1h-1zM168 7h1v1h-1zM173 7h1v1h-1zM176 7h1v1h-1zM180 7h1v1h-1zM184 7h1v1h-1zM192 7h2v1h-2zM198 7h2v1h-2zM202 7h2v1h-2zM219 7h2v1h-2zM225 7h1v1h-1zM247 7h1v1h-1zM251 7h2v1h-2zM260 7h3v1h-3zM265 7h6v1h-6zM0 8h1v1h-1zM4 8h3v1h-3zM8 8h1v1h-1zM13 8h7v1h-7zM21 8h4v1h-4zM27 8h4v1h-4zM32 8h2v1h-2zM36 8h3v1h-3zM41 8h1v1h-1zM44 8h13v1h-13zM59 8h2v1h-2zM62 8h8v1h-8zM73 8h4v1h-4zM79 8h3v1h-3zM87 8h8v1h-8zM96 8h5v1h-5zM103 8h2v1h-2zM106 8h6v1h-6zM114 8h2v1h-2zM117 8h4v1h-4zM124 8h8v1h-8zM138 8h1v1h-1zM140 8h5v1h-5zM149 8h2v1h-2zM153 8h4v1h-4zM161 8h1v1h-1zM163 8h1v1h-1zM168 8h1v1h-1zM172 8h7v1h-7zM181 8h1v1h-1zM183 8h8v1h-8zM194 8h2v1h-2zM197 8h4v1h-4zM202 8h4v1h-4zM208 8h11v1h-11zM221 8h2v1h-2zM224 8h2v1h-2zM229 8h6v1h-6zM237 8h2v1h-2zM241 8h1v1h-1zM243 8h2v1h-2zM247 8h4v1h-4zM252 8h8v1h-8zM262 8h4v1h-4zM267 8h7v1h-7zM25 9h1v1h-1zM28 9h1v1h-1zM39 9h1v1h-1zM46 9h1v1h-1zM56 9h1v1h-1zM73 9h1v1h-1zM78 9h3v1h-3zM83 9h3v1h-3zM89 9h1v1h-1zM102 9h1v1h-1zM105 9h1v1h-1zM108 9h1v1h-1zM115 9h1v1h-1zM124 9h1v1h-1zM133 9h6v1h-6zM146 9h4v1h-4zM153 9h2v1h-2zM158 9h1v1h-1zM160 9h1v1h-1zM186 9h1v1h-1zM190 9h2v1h-2zM200 9h1v1h-1zM202 9h1v1h-1zM204 9h1v1h-1zM210 9h2v1h-2zM213 9h2v1h-2zM217 9h1v1h-1zM220 9h1v1h-1zM228 9h8v1h-8zM242 9h2v1h-2zM254 9h1v1h-1zM272 9h2v1h-2zM5 10h1v1h-1zM7 10h2v1h-2zM12 10h1v1h-1zM19 10h3v1h-3zM37 10h3v1h-3zM48 10h1v1h-1zM54 10h3v1h-3zM64 10h1v1h-1zM67 10h1v1h-1zM70 10h1v1h-1zM81 10h1v1h-1zM91 10h4v1h-4zM103 10h1v1h-1zM106 10h1v1h-1zM115 10h1v1h-1zM126 10h1v1h-1zM137 10h2v1h-2zM142 10h1v1h-1zM144 10h2v1h-2zM149 10h2v1h-2zM158 10h2v1h-2zM169 10h2v1h-2zM180 10h1v1h-1zM185 10h2v1h-2zM202 10h1v1h-1zM210 10h1v1h-1zM215 10h2v1h-2zM218 10h1v1h-1zM227 10h3v1h-3zM234 10h1v1h-1zM241 10h1v1h-1zM243 10h1v1h-1zM251 10h2v1h-2zM260 10h2v1h-2zM267 10h1v1h-1zM0 11h8v1h-8zM10 11h3v1h-3zM15 11h3v1h-3zM21 11h3v1h-3zM26 11h8v1h-8zM36 11h1v1h-1zM39 11h3v1h-3zM48 11h1v1h-1zM51 11h1v1h-1zM55 11h2v1h-2zM58 11h3v1h-3zM68 11h1v1h-1zM71 11h1v1h-1zM73 11h8v1h-8zM84 11h2v1h-2zM87 11h3v1h-3zM92 11h4v1h-4zM98 11h1v1h-1zM101 11h1v1h-1zM104 11h2v1h-2zM108 11h6v1h-6zM116 11h6v1h-6zM124 11h1v1h-1zM128 11h1v1h-1zM133 11h4v1h-4zM138 11h2v1h-2zM142 11h1v1h-1zM145 11h3v1h-3zM150 11h1v1h-1zM153 11h5v1h-5zM163 11h1v1h-1zM165 11h1v1h-1zM167 11h3v1h-3zM172 11h3v1h-3zM176 11h4v1h-4zM185 11h1v1h-1zM190 11h1v1h-1zM194 11h2v1h-2zM197 11h1v1h-1zM204 11h3v1h-3zM209 11h1v1h-1zM212 11h6v1h-6zM220 11h3v1h-3zM224 11h10v1h-10zM236 11h3v1h-3zM240 11h1v1h-1zM242 11h2v1h-2zM247 11h1v1h-1zM250 11h4v1h-4zM256 11h4v1h-4zM261 11h3v1h-3zM266 11h2v1h-2zM270 11h1v1h-1zM273 11h1v1h-1zM3 12h1v1h-1zM5 12h2v1h-2zM8 12h2v1h-2zM20 12h3v1h-3zM31 12h1v1h-1zM48 12h1v1h-1zM51 12h1v1h-1zM57 12h2v1h-2zM60 12h1v1h-1zM69 12h1v1h-1zM82 12h1v1h-1zM88 12h2v1h-2zM100 12h1v1h-1zM103 12h3v1h-3zM115 12h2v1h-2zM124 12h1v1h-1zM127 12h2v1h-2zM131 12h1v1h-1zM135 12h1v1h-1zM144 12h2v1h-2zM158 12h4v1h-4zM165 12h1v1h-1zM169 12h1v1h-1zM182 12h2v1h-2zM192 12h4v1h-4zM202 12h1v1h-1zM205 12h2v1h-2zM217 12h1v1h-1zM221 12h2v1h-2zM226 12h1v1h-1zM236 12h3v1h-3zM249 12h3v1h-3zM254 12h1v1h-1zM264 12h1v1h-1zM266 12h1v1h-1zM270 12h2v1h-2zM5 13h1v1h-1zM8 13h1v1h-1zM16 13h3v1h-3zM21 13h3v1h-3zM26 13h1v1h-1zM33 13h1v1h-1zM38 13h3v1h-3zM46 13h1v1h-1zM48 13h1v1h-1zM51 13h2v1h-2zM56 13h2v1h-2zM66 13h1v1h-1zM69 13h1v1h-1zM76 13h1v1h-1zM90 13h1v1h-1zM97 13h3v1h-3zM117 13h1v1h-1zM121 13h1v1h-1zM127 13h2v1h-2zM130 13h2v1h-2zM138 13h3v1h-3zM142 13h1v1h-1zM150 13h3v1h-3zM156 13h1v1h-1zM162 13h2v1h-2zM165 13h1v1h-1zM170 13h1v1h-1zM174 13h4v1h-4zM183 13h1v1h-1zM198 13h1v1h-1zM204 13h1v1h-1zM211 13h1v1h-1zM222 13h1v1h-1zM233 13h1v1h-1zM236 13h1v1h-1zM242 13h1v1h-1zM249 13h2v1h-2zM254 13h1v1h-1zM257 13h1v1h-1zM261 13h1v1h-1zM267 13h2v1h-2z"/>
<path fill="#8cd150" d="M9 0h1v1h-1zM15 0h1v1h-1zM43 0h1v1h-1zM56 0h1v1h-1zM80 0h1v1h-1zM89 0h1v1h-1zM168 0h1v1h-1zM180 0h1v1h-1zM193 0h1v1h-1zM200 0h1v1h-1zM233 0h1v1h-1zM0 1h1v1h-1zM63 1h1v1h-1zM73 1h1v1h-1zM198 1h1v1h-1zM241 1h1v1h-1zM246 1h1v1h-1zM32 2h1v1h-1zM41 2h1v1h-1zM152 2h1v1h-1zM169 2h1v1h-1zM193 2h1v1h-1zM217 2h1v1h-1zM40 3h1v1h-1zM79 3h2v1h-2zM95 3h1v1h-1zM105 3h1v1h-1zM257 3h1v1h-1zM24 4h1v1h-1zM63 4h1v1h-1zM89 4h1v1h-1zM153 4h1v1h-1zM168 4h1v1h-1zM203 4h1v1h-1zM205 4h1v1h-1zM214 4h1v1h-1zM221 4h1v1h-1zM20 5h1v1h-1zM40 5h1v1h-1zM47 5h1v1h-1zM64 5h1v1h-1zM96 5h1v1h-1zM121 5h1v1h-1zM201 5h1v1h-1zM230 5h1v1h-1zM242 5h1v1h-1zM0 6h1v1h-1zM22 6h1v1h-1zM41 6h1v1h-1zM56 6h1v1h-1zM64 6h1v1h-1zM73 6h1v1h-1zM80 6h1v1h-1zM98 6h1v1h-1zM137 6h1v1h-1zM153 6h1v1h-1zM223 6h1v1h-1zM2 7h1v1h-1zM72 7h1v1h-1zM89 7h1v1h-1zM91 7h1v1h-1zM136 7h2v1h-2zM139 7h1v1h-1zM185 7h1v1h-1zM209 7h1v1h-1zM241 7h1v1h-1zM2 8h1v1h-1zM40 8h1v1h-1zM136 8h1v1h-1zM152 8h1v1h-1zM193 8h1v1h-1zM2 9h1v1h-1zM34 9h1v1h-1zM52 9h1v1h-1zM63 9h1v1h-1zM88 9h1v1h-1zM100 9h1v1h-1zM130 9h1v1h-1zM209 9h1v1h-1zM248 9h1v1h-1zM32 10h1v1h-1zM63 10h1v1h-1zM109 10h1v1h-1zM153 10h1v1h-1zM161 10h1v1h-1zM178 10h1v1h-1zM207 10h1v1h-1zM239 10h1v1h-1zM258 10h1v1h-1zM63 11h1v1h-1zM82 11h1v1h-1zM96 11h1v1h-1zM184 11h1v1h-1zM193 11h1v1h-1zM201 11h1v1h-1zM11 12h1v1h-1zM24 12h1v1h-1zM73 12h1v1h-1zM148 12h1v1h-1zM200 12h1v1h-1zM225 12h1v1h-1zM242 12h1v1h-1zM258 12h1v1h-1zM0 13h1v1h-1zM64 13h1v1h-1zM73 13h1v1h-1zM80 13h1v1h-1zM104 13h1v1h-1zM123 13h1v1h-1zM200 13h1v1h-1zM216 13h2v1h-2zM232 13h1v1h-1z"/>
<path fill="#31698c" d="M41 0h1v1h-1zM69 0h1v1h-1zM77 0h1v1h-1zM115 0h1v1h-1zM119 0h2v1h-2zM122 0h1v1h-1zM140 0h1v1h-1zM149 0h1v1h-1zM151 0h1v1h-1zM156 0h1v1h-1zM158 0h2v1h-2zM224 0h1v1h-1zM254 0h1v1h-1zM266 0h1v1h-1zM3 1h1v1h-1zM12 1h1v1h-1zM38 1h1v1h-1zM46 1h1v1h-1zM95 1h1v1h-1zM112 1h2v1h-2zM140 1h1v1h-1zM185 1h1v1h-1zM209 1h1v1h-1zM211 1h1v1h-1zM273 1h1v1h-1zM3 2h1v1h-1zM28 3h1v1h-1zM48 3h1v1h-1zM77 3h1v1h-1zM92 3h2v1h-2zM101 3h1v1h-1zM139 3h1v1h-1zM147 3h1v1h-1zM150 3h1v1h-1zM183 3h1v1h-1zM190 3h1v1h-1zM236 3h1v1h-1zM241 3h1v1h-1zM9 4h1v1h-1zM52 4h1v1h-1zM60 4h2v1h-2zM69 4h1v1h-1zM77 4h1v1h-1zM88 4h1v1h-1zM96 4h2v1h-2zM119 4h1v1h-1zM121 4h1v1h-1zM124 4h1v1h-1zM190 4h1v1h-1zM217 4h1v1h-1zM223 4h1v1h-1zM233 4h1v1h-1zM267 4h2v1h-2zM36 5h1v1h-1zM176 5h1v1h-1zM4 6h1v1h-1zM26 6h1v1h-1zM52 6h1v1h-1zM77 6h2v1h-2zM110 6h1v1h-1zM121 6h2v1h-2zM139 6h1v1h-1zM160 6h1v1h-1zM217 6h2v1h-2zM231 6h1v1h-1zM250 6h1v1h-1zM270 6h1v1h-1zM9 7h1v1h-1zM40 7h1v1h-1zM55 7h1v1h-1zM74 7h1v1h-1zM76 7h1v1h-1zM79 7h1v1h-1zM114 7h1v1h-1zM134 7h1v1h-1zM156 7h1v1h-1zM163 7h1v1h-1zM171 7h1v1h-1zM190 7h1v1h-1zM195 7h1v1h-1zM222 7h1v1h-1zM230 7h3v1h-3zM236 7h3v1h-3zM243 7h1v1h-1zM246 7h1v1h-1zM226 8h1v1h-1zM246 8h1v1h-1zM9 9h1v1h-1zM48 9h1v1h-1zM68 9h1v1h-1zM96 9h2v1h-2zM104 9h1v1h-1zM121 9h1v1h-1zM142 9h1v1h-1zM224 9h1v1h-1zM241 9h1v1h-1zM252 9h1v1h-1zM269 9h1v1h-1zM26 10h1v1h-1zM41 10h1v1h-1zM59 10h1v1h-1zM72 10h1v1h-1zM76 10h1v1h-1zM84 10h1v1h-1zM113 10h1v1h-1zM123 10h3v1h-3zM152 10h1v1h-1zM183 10h2v1h-2zM190 10h1v1h-1zM194 10h2v1h-2zM205 10h1v1h-1zM209 10h1v1h-1zM224 10h2v1h-2zM246 10h1v1h-1zM264 10h1v1h-1zM272 10h1v1h-1zM47 11h1v1h-1zM152 11h1v1h-1zM255 11h1v1h-1zM0 12h1v1h-1zM14 12h1v1h-1zM16 12h1v1h-1zM26 12h1v1h-1zM47 12h1v1h-1zM62 12h1v1h-1zM77 12h1v1h-1zM80 12h1v1h-1zM134 12h1v1h-1zM151 12h1v1h-1zM167 12h1v1h-1zM176 12h1v1h-1zM179 12h1v1h-1zM190 12h1v1h-1zM2 13h2v1h-2zM20 13h1v1h-1zM63 13h1v1h-1zM68 13h1v1h-1zM71 13h1v1h-1zM110 13h2v1h-2zM148 13h1v1h-1zM153 13h1v1h-1zM160 13h1v1h-1zM172 13h1v1h-1zM186 13h1v1h-1zM273 13h1v1h-1z"/>
<path fill="#849b62" d="M62 0h1v1h-1zM147 0h1v1h-1zM199 0h1v1h-1zM208 0h1v1h-1zM42 1h1v1h-1zM58 1h1v1h-1zM90 1h1v1h-1zM179 1h1v1h-1zM81 3h1v1h-1zM106 3h1v1h-1zM37 4h1v1h-1zM167 4h1v1h-1zM224 4h1v1h-1zM236 4h1v1h-1zM65 5h1v1h-1zM33 6h1v1h-1zM87 6h1v1h-1zM99 7h1v1h-1zM131 7h1v1h-1zM256 7h1v1h-1zM37 9h1v1h-1zM58 9h1v1h-1zM110 9h1v1h-1zM131 9h1v1h-1zM208 9h1v1h-1zM247 9h1v1h-1zM14 10h1v1h-1zM131 10h1v1h-1zM154 10h1v1h-1zM62 11h1v1h-1zM126 11h1v1h-1zM224 12h1v1h-1zM243 12h1v1h-1zM1 13h1v1h-1zM74 13h1v1h-1zM106 13h1v1h-1zM179 13h1v1h-1zM252 13h1v1h-1z"/>
<path fill="#dcde32" d="M36 0h1v1h-1zM102 1h1v1h-1zM237 1h1v1h-1zM171 2h1v1h-1zM11 3h1v1h-1zM13 3h1v1h-1zM141 3h1v1h-1zM196 3h1v1h-1zM75 4h1v1h-1zM91 4h1v1h-1zM141 4h1v1h-1zM164 4h1v1h-1zM75 5h1v1h-1zM13 6h1v1h-1zM93 6h1v1h-1zM157 6h1v1h-1zM246 6h1v1h-1zM118 7h1v1h-1zM148 7h1v1h-1zM157 7h1v1h-1zM271 7h1v1h-1zM123 8h1v1h-1zM27 9h1v1h-1zM29 9h1v1h-1zM125 9h1v1h-1zM22 10h1v1h-1zM66 10h1v1h-1zM212 10h1v1h-1zM132 11h1v1h-1zM203 11h1v1h-1zM84 12h1v1h-1zM125 12h1v1h-1zM139 12h1v1h-1zM116 13h1v1h-1zM118 13h1v1h-1zM134 13h1v1h-1zM189 13h1v1h-1zM203 13h1v1h-1z"/>
<path fill="#cadc38" d="M8 0h1v1h-1zM22 0h1v1h-1zM24 0h1v1h-1zM32 0h1v1h-1zM39 0h1v1h-1zM84 0h1v1h-1zM95 0h1v1h-1zM112 0h2v1h-2zM191 0h1v1h-1zM194 0h1v1h-1zM228 0h1v1h-1zM239 0h1v1h-1zM18 1h1v1h-1zM22 1h1v1h-1zM54 1h1v1h-1zM88 1h1v1h-1zM114 1h1v1h-1zM164 1h1v1h-1zM169 1h1v1h-1zM176 1h1v1h-1zM193 1h1v1h-1zM221 1h1v1h-1zM244 1h1v1h-1zM251 1h1v1h-1zM266 1h2v1h-2zM271 1h1v1h-1zM23 2h1v1h-1zM36 2h1v1h-1zM47 2h1v1h-1zM52 2h1v1h-1zM54 2h1v1h-1zM57 2h1v1h-1zM98 2h1v1h-1zM102 2h1v1h-1zM116 2h1v1h-1zM121 2h1v1h-1zM187 2h1v1h-1zM248 2h1v1h-1zM255 2h1v1h-1zM260 2h1v1h-1zM0 3h1v1h-1zM16 3h1v1h-1zM36 3h1v1h-1zM47 3h1v1h-1zM57 3h1v1h-1zM63 3h1v1h-1zM113 3h1v1h-1zM121 3h1v1h-1zM132 3h1v1h-1zM143 3h1v1h-1zM153 3h1v1h-1zM155 3h1v1h-1zM161 3h1v1h-1zM168 3h1v1h-1zM180 3h1v1h-1zM187 3h1v1h-1zM194 3h1v1h-1zM198 3h1v1h-1zM214 3h1v1h-1zM225 3h1v1h-1zM233 3h1v1h-1zM265 3h1v1h-1zM15 4h1v1h-1zM29 4h1v1h-1zM34 4h1v1h-1zM40 4h2v1h-2zM56 4h2v1h-2zM80 4h1v1h-1zM98 4h1v1h-1zM100 4h1v1h-1zM102 4h1v1h-1zM127 4h1v1h-1zM143 4h1v1h-1zM152 4h1v1h-1zM176 4h1v1h-1zM209 4h1v1h-1zM212 4h1v1h-1zM242 4h1v1h-1zM251 4h1v1h-1zM253 4h1v1h-1zM255 4h1v1h-1zM257 4h1v1h-1zM266 4h1v1h-1zM0 5h1v1h-1zM18 5h1v1h-1zM32 5h1v1h-1zM52 5h1v1h-1zM98 5h1v1h-1zM118 5h1v1h-1zM139 5h1v1h-1zM159 5h1v1h-1zM169 5h1v1h-1zM185 5h1v1h-1zM209 5h1v1h-1zM223 5h1v1h-1zM232 5h1v1h-1zM249 5h1v1h-1zM253 5h1v1h-1zM255 5h1v1h-1zM264 5h1v1h-1zM9 6h1v1h-1zM15 6h2v1h-2zM39 6h1v1h-1zM45 6h1v1h-1zM47 6h1v1h-1zM97 6h1v1h-1zM129 6h1v1h-1zM134 6h1v1h-1zM155 6h1v1h-1zM164 6h1v1h-1zM178 6h1v1h-1zM210 6h1v1h-1zM237 6h1v1h-1zM266 6h1v1h-1zM11 7h1v1h-1zM22 7h1v1h-1zM64 7h1v1h-1zM66 7h1v1h-1zM70 7h1v1h-1zM80 7h1v1h-1zM88 7h1v1h-1zM104 7h1v1h-1zM129 7h1v1h-1zM143 7h1v1h-1zM145 7h1v1h-1zM153 7h1v1h-1zM169 7h1v1h-1zM226 7h1v1h-1zM61 8h1v1h-1zM86 8h1v1h-1zM121 8h1v1h-1zM134 8h1v1h-1zM139 8h1v1h-1zM145 8h1v1h-1zM148 8h1v1h-1zM160 8h1v1h-1zM196 8h1v1h-1zM201 8h1v1h-1zM223 8h1v1h-1zM239 8h1v1h-1zM251 8h1v1h-1zM45 9h1v1h-1zM66 9h1v1h-1zM72 9h1v1h-1zM114 9h1v1h-1zM123 9h1v1h-1zM129 9h1v1h-1zM159 9h1v1h-1zM168 9h1v1h-1zM185 9h1v1h-1zM187 9h1v1h-1zM201 9h1v1h-1zM212 9h1v1h-1zM267 9h1v1h-1zM271 9h1v1h-1zM4 10h1v1h-1zM23 10h1v1h-1zM79 10h1v1h-1zM105 10h1v1h-1zM114 10h1v1h-1zM120 10h1v1h-1zM127 10h1v1h-1zM139 10h1v1h-1zM162 10h1v1h-1zM226 10h1v1h-1zM244 10h1v1h-1zM248 10h1v1h-1zM265 10h1v1h-1zM18 11h1v1h-1zM24 11h1v1h-1zM54 11h1v1h-1zM57 11h1v1h-1zM86 11h1v1h-1zM129 11h1v1h-1zM137 11h1v1h-1zM144 11h1v1h-1zM162 11h1v1h-1zM164 11h1v1h-1zM166 11h1v1h-1zM175 11h1v1h-1zM189 11h1v1h-1zM191 11h1v1h-1zM196 11h1v1h-1zM223 11h1v1h-1zM234 11h1v1h-1zM246 11h1v1h-1zM249 11h1v1h-1zM260 11h1v1h-1zM265 11h1v1h-1zM66 12h1v1h-1zM75 12h1v1h-1zM114 12h1v1h-1zM129 12h1v1h-1zM132 12h1v1h-1zM137 12h1v1h-1zM162 12h1v1h-1zM201 12h1v1h-1zM239 12h1v1h-1zM255 12h1v1h-1zM7 13h1v1h-1zM24 13h2v1h-2zM32 13h1v1h-1zM43 13h1v1h-1zM50 13h1v1h-1zM70 13h1v1h-1zM96 13h1v1h-1zM164 13h1v1h-1zM168 13h2v1h-2zM184 13h1v1h-1zM191 13h1v1h-1zM194 13h1v1h-1zM205 13h1v1h-1zM210 13h1v1h-1zM223 13h1v1h-1zM226 13h1v1h-1zM237 13h1v1h-1zM255 13h1v1h-1z"/>
<path fill="#4ca971" d="M16 0h1v1h-1zM121 0h1v1h-1zM123 0h1v1h-1zM148 0h1v1h-1zM150 0h1v1h-1zM152 0h1v1h-1zM155 0h1v1h-1zM185 0h1v1h-1zM223 0h1v1h-1zM225 0h1v1h-1zM265 0h1v1h-1zM4 1h1v1h-1zM32 1h1v1h-1zM45 1h1v1h-1zM47 1h1v1h-1zM66 1h1v1h-1zM137 1h1v1h-1zM141 1h1v1h-1zM180 1h1v1h-1zM191 1h1v1h-1zM202 1h1v1h-1zM210 1h1v1h-1zM242 1h1v1h-1zM4 2h1v1h-1zM15 2h1v1h-1zM96 2h2v1h-2zM112 2h2v1h-2zM194 2h1v1h-1zM7 3h1v1h-1zM41 3h1v1h-1zM130 3h1v1h-1zM176 3h1v1h-1zM184 3h1v1h-1zM202 3h1v1h-1zM208 3h2v1h-2zM226 3h1v1h-1zM13 4h1v1h-1zM59 4h1v1h-1zM73 4h1v1h-1zM105 4h1v1h-1zM120 4h1v1h-1zM146 4h1v1h-1zM169 4h1v1h-1zM184 4h2v1h-2zM218 4h1v1h-1zM234 4h1v1h-1zM237 4h1v1h-1zM241 4h1v1h-1zM248 4h1v1h-1zM95 5h1v1h-1zM128 5h2v1h-2zM168 5h1v1h-1zM177 5h1v1h-1zM210 5h1v1h-1zM217 5h2v1h-2zM258 5h1v1h-1zM265 5h2v1h-2zM8 6h1v1h-1zM24 6h1v1h-1zM79 6h1v1h-1zM86 6h1v1h-1zM89 6h1v1h-1zM111 6h1v1h-1zM120 6h1v1h-1zM146 6h1v1h-1zM168 6h2v1h-2zM185 6h1v1h-1zM209 6h1v1h-1zM232 6h1v1h-1zM249 6h1v1h-1zM4 7h1v1h-1zM23 7h2v1h-2zM39 7h1v1h-1zM48 7h1v1h-1zM75 7h1v1h-1zM96 7h2v1h-2zM111 7h1v1h-1zM127 7h1v1h-1zM152 7h1v1h-1zM162 7h1v1h-1zM178 7h1v1h-1zM223 7h1v1h-1zM264 7h1v1h-1zM57 8h1v1h-1zM71 8h2v1h-2zM166 8h1v1h-1zM16 9h1v1h-1zM32 9h1v1h-1zM36 9h1v1h-1zM64 9h2v1h-2zM95 9h1v1h-1zM112 9h2v1h-2zM120 9h1v1h-1zM166 9h1v1h-1zM176 9h2v1h-2zM194 9h1v1h-1zM216 9h1v1h-1zM225 9h2v1h-2zM260 9h1v1h-1zM0 10h1v1h-1zM9 10h1v1h-1zM16 10h1v1h-1zM47 10h1v1h-1zM57 10h1v1h-1zM71 10h1v1h-1zM88 10h1v1h-1zM96 10h2v1h-2zM112 10h1v1h-1zM118 10h1v1h-1zM121 10h1v1h-1zM136 10h1v1h-1zM176 10h2v1h-2zM250 10h1v1h-1zM160 11h2v1h-2zM200 11h1v1h-1zM39 12h2v1h-2zM63 12h1v1h-1zM81 12h1v1h-1zM111 12h1v1h-1zM155 12h1v1h-1zM168 12h1v1h-1zM177 12h2v1h-2zM180 12h1v1h-1zM208 12h2v1h-2zM241 12h1v1h-1zM257 12h1v1h-1zM15 13h1v1h-1zM41 13h1v1h-1zM72 13h1v1h-1zM86 13h1v1h-1zM114 13h1v1h-1zM146 13h1v1h-1zM159 13h1v1h-1zM161 13h1v1h-1zM207 13h1v1h-1zM225 13h1v1h-1zM258 13h1v1h-1z"/>
<path fill="#bec044" d="M61 0h1v1h-1zM157 0h1v1h-1zM161 0h1v1h-1zM235 0h1v1h-1zM249 0h1v1h-1zM258 0h1v1h-1zM15 1h1v1h-1zM31 1h1v1h-1zM105 1h1v1h-1zM201 1h1v1h-1zM216 1h1v1h-1zM264 1h1v1h-1zM8 3h1v1h-1zM50 3h1v1h-1zM88 3h1v1h-1zM146 3h1v1h-1zM175 3h1v1h-1zM177 3h1v1h-1zM185 3h1v1h-1zM201 3h1v1h-1zM216 3h1v1h-1zM242 3h1v1h-1zM260 3h1v1h-1zM16 4h1v1h-1zM47 4h1v1h-1zM68 4h1v1h-1zM112 4h1v1h-1zM130 4h1v1h-1zM166 4h1v1h-1zM193 4h1v1h-1zM226 4h1v1h-1zM120 5h1v1h-1zM184 5h1v1h-1zM25 6h1v1h-1zM136 6h1v1h-1zM161 6h1v1h-1zM177 6h1v1h-1zM251 6h1v1h-1zM271 6h1v1h-1zM56 7h1v1h-1zM73 7h1v1h-1zM105 7h1v1h-1zM182 7h1v1h-1zM191 7h1v1h-1zM194 7h1v1h-1zM196 7h1v1h-1zM239 7h1v1h-1zM242 7h1v1h-1zM4 9h1v1h-1zM15 9h1v1h-1zM184 9h1v1h-1zM249 9h1v1h-1zM25 10h1v1h-1zM31 10h1v1h-1zM89 10h1v1h-1zM249 10h1v1h-1zM273 10h1v1h-1zM210 11h1v1h-1zM15 12h1v1h-1zM25 12h1v1h-1zM38 12h1v1h-1zM72 12h1v1h-1zM79 12h1v1h-1zM150 12h1v1h-1zM152 12h1v1h-1zM187 12h1v1h-1zM203 12h1v1h-1zM262 12h1v1h-1zM273 12h1v1h-1zM31 13h1v1h-1zM120 13h1v1h-1zM185 13h1v1h-1zM201 13h1v1h-1zM248 13h1v1h-1z"/>
<path fill="#6e8f6d" d="M38 0h1v1h-1zM48 0h1v1h-1zM57 0h1v1h-1zM63 0h1v1h-1zM66 0h1v1h-1zM128 0h2v1h-2zM137 0h1v1h-1zM144 0h2v1h-2zM214 0h1v1h-1zM216 0h1v1h-1zM273 0h1v1h-1zM40 1h2v1h-2zM57 1h1v1h-1zM89 1h1v1h-1zM104 1h1v1h-1zM128 1h1v1h-1zM161 1h1v1h-1zM273 2h1v1h-1zM64 3h1v1h-1zM70 3h1v1h-1zM98 3h1v1h-1zM129 3h1v1h-1zM137 3h1v1h-1zM171 3h1v1h-1zM11 4h1v1h-1zM109 4h1v1h-1zM114 4h1v1h-1zM175 4h1v1h-1zM225 4h1v1h-1zM262 4h1v1h-1zM57 5h1v1h-1zM32 6h1v1h-1zM72 6h1v1h-1zM88 6h1v1h-1zM102 6h1v1h-1zM112 6h1v1h-1zM184 6h1v1h-1zM187 6h1v1h-1zM233 6h1v1h-1zM255 6h1v1h-1zM121 7h1v1h-1zM130 7h1v1h-1zM257 7h2v1h-2zM25 8h1v1h-1zM7 9h2v1h-2zM22 9h1v1h-1zM24 9h1v1h-1zM50 9h1v1h-1zM57 9h1v1h-1zM145 9h1v1h-1zM152 9h1v1h-1zM193 9h1v1h-1zM239 9h1v1h-1zM265 9h2v1h-2zM15 10h1v1h-1zM34 10h1v1h-1zM73 10h1v1h-1zM102 10h1v1h-1zM111 10h1v1h-1zM232 10h1v1h-1zM64 11h1v1h-1zM32 12h1v1h-1zM54 12h1v1h-1zM102 12h1v1h-1zM143 12h1v1h-1zM175 12h1v1h-1zM185 12h1v1h-1zM216 12h1v1h-1zM232 12h2v1h-2zM248 12h1v1h-1zM13 13h1v1h-1zM34 13h1v1h-1zM102 13h1v1h-1zM112 13h2v1h-2zM178 13h1v1h-1zM230 13h1v1h-1zM241 13h1v1h-1z"/>
<path fill="#c7cd3d" d="M132 0h1v1h-1zM198 0h1v1h-1zM271 0h1v1h-1zM29 1h1v1h-1zM82 1h1v1h-1zM84 1h1v1h-1zM100 3h1v1h-1zM102 3h1v1h-1zM118 3h1v1h-1zM173 3h1v1h-1zM237 3h1v1h-1zM18 4h1v1h-1zM123 4h1v1h-1zM155 4h1v1h-1zM196 4h1v1h-1zM230 4h1v1h-1zM77 5h1v1h-1zM27 6h1v1h-1zM125 6h1v1h-1zM173 6h1v1h-1zM244 6h1v1h-1zM109 7h1v1h-1zM132 7h1v1h-1zM155 7h1v1h-1zM91 9h1v1h-1zM180 9h1v1h-1zM198 9h1v1h-1zM244 9h1v1h-1zM2 10h1v1h-1zM27 10h1v1h-1zM77 10h1v1h-1zM141 10h1v1h-1zM166 10h1v1h-1zM191 10h1v1h-1zM13 12h1v1h-1zM29 12h1v1h-1zM198 12h1v1h-1zM214 12h1v1h-1zM54 13h1v1h-1zM109 13h1v1h-1zM173 13h1v1h-1zM180 13h1v1h-1z"/>
<path fill="#52b36c" d="M27 0h1v1h-1zM70 0h1v1h-1zM98 0h1v1h-1zM114 0h1v1h-1zM253 0h1v1h-1zM255 0h1v1h-1zM2 1h1v1h-1zM20 1h1v1h-1zM77 1h1v1h-1zM139 1h1v1h-1zM159 1h1v1h-1zM219 1h1v1h-1zM2 2h1v1h-1zM43 2h1v1h-1zM75 2h1v1h-1zM109 2h1v1h-1zM143 2h1v1h-1zM262 2h1v1h-1zM27 3h1v1h-1zM45 3h1v1h-1zM54 3h1v1h-1zM84 3h1v1h-1zM109 3h1v1h-1zM157 3h1v1h-1zM191 3h1v1h-1zM203 3h1v1h-1zM207 3h1v1h-1zM228 3h1v1h-1zM232 3h1v1h-1zM235 3h1v1h-1zM255 3h1v1h-1zM22 4h1v1h-1zM70 4h1v1h-1zM125 4h1v1h-1zM187 4h1v1h-1zM191 4h1v1h-1zM228 4h1v1h-1zM246 4h1v1h-1zM187 5h1v1h-1zM237 5h1v1h-1zM251 5h1v1h-1zM70 6h1v1h-1zM91 6h1v1h-1zM196 6h1v1h-1zM269 6h1v1h-1zM18 7h1v1h-1zM123 7h1v1h-1zM207 7h1v1h-1zM214 7h1v1h-1zM216 7h1v1h-1zM221 7h1v1h-1zM235 7h1v1h-1zM253 7h1v1h-1zM11 8h1v1h-1zM34 8h1v1h-1zM102 8h1v1h-1zM132 8h1v1h-1zM146 8h1v1h-1zM207 8h1v1h-1zM219 8h1v1h-1zM235 8h1v1h-1zM13 9h1v1h-1zM143 9h1v1h-1zM189 9h1v1h-1zM196 9h1v1h-1zM251 9h1v1h-1zM43 10h1v1h-1zM86 10h1v1h-1zM157 10h1v1h-1zM171 10h1v1h-1zM187 10h1v1h-1zM214 10h1v1h-1zM235 10h1v1h-1zM20 11h1v1h-1zM114 11h1v1h-1zM148 11h1v1h-1zM159 11h1v1h-1zM187 11h1v1h-1zM18 12h1v1h-1zM141 12h1v1h-1zM191 12h1v1h-1zM4 13h1v1h-1zM61 13h1v1h-1zM100 13h1v1h-1zM171 13h1v1h-1zM214 13h1v1h-1zM246 13h1v1h-1z"/>
<path fill="#3d8580" d="M4 0h1v1h-1zM7 0h1v1h-1zM20 0h1v1h-1zM29 0h1v1h-1zM31 0h1v1h-1zM40 0h1v1h-1zM54 0h1v1h-1zM64 0h1v1h-1zM73 0h1v1h-1zM136 0h1v1h-1zM153 0h1v1h-1zM177 0h1v1h-1zM196 0h1v1h-1zM201 0h1v1h-1zM203 0h1v1h-1zM207 0h1v1h-1zM217 0h2v1h-2zM244 0h1v1h-1zM6 1h1v1h-1zM8 1h1v1h-1zM11 1h1v1h-1zM25 1h1v1h-1zM43 1h1v1h-1zM48 1h1v1h-1zM55 1h1v1h-1zM61 1h1v1h-1zM64 1h2v1h-2zM70 1h2v1h-2zM86 1h1v1h-1zM96 1h2v1h-2zM109 1h1v1h-1zM120 1h2v1h-2zM127 1h1v1h-1zM136 1h1v1h-1zM146 1h1v1h-1zM150 1h1v1h-1zM153 1h1v1h-1zM155 1h1v1h-1zM177 1h1v1h-1zM189 1h1v1h-1zM192 1h1v1h-1zM223 1h1v1h-1zM232 1h2v1h-2zM248 1h2v1h-2zM262 1h1v1h-1zM38 2h1v1h-1zM63 2h1v1h-1zM86 2h1v1h-1zM104 2h1v1h-1zM145 2h1v1h-1zM189 2h1v1h-1zM219 2h1v1h-1zM225 2h1v1h-1zM250 2h1v1h-1zM266 2h1v1h-1zM4 3h1v1h-1zM15 3h1v1h-1zM32 3h1v1h-1zM38 3h1v1h-1zM43 3h1v1h-1zM59 3h1v1h-1zM89 3h1v1h-1zM97 3h1v1h-1zM104 3h1v1h-1zM111 3h2v1h-2zM127 3h1v1h-1zM136 3h1v1h-1zM144 3h2v1h-2zM148 3h1v1h-1zM169 3h1v1h-1zM217 3h1v1h-1zM244 3h1v1h-1zM258 3h1v1h-1zM266 3h1v1h-1zM20 4h1v1h-1zM39 4h1v1h-1zM48 4h1v1h-1zM50 4h1v1h-1zM54 4h1v1h-1zM65 4h1v1h-1zM95 4h1v1h-1zM150 4h1v1h-1zM161 4h1v1h-1zM177 4h1v1h-1zM207 4h1v1h-1zM210 4h1v1h-1zM232 4h1v1h-1zM250 4h1v1h-1zM265 4h1v1h-1zM9 5h1v1h-1zM31 5h1v1h-1zM50 5h1v1h-1zM63 5h1v1h-1zM80 5h1v1h-1zM104 5h1v1h-1zM111 5h2v1h-2zM127 5h1v1h-1zM132 5h1v1h-1zM136 5h1v1h-1zM144 5h2v1h-2zM162 5h1v1h-1zM173 5h1v1h-1zM175 5h1v1h-1zM257 5h1v1h-1zM269 5h1v1h-1zM271 5h1v1h-1zM31 6h1v1h-1zM57 6h1v1h-1zM68 6h1v1h-1zM96 6h1v1h-1zM141 6h1v1h-1zM189 6h1v1h-1zM228 6h1v1h-1zM230 6h1v1h-1zM267 6h1v1h-1zM273 6h1v1h-1zM8 7h1v1h-1zM15 7h1v1h-1zM34 7h1v1h-1zM47 7h1v1h-1zM57 7h1v1h-1zM63 7h1v1h-1zM77 7h1v1h-1zM102 7h1v1h-1zM125 7h1v1h-1zM128 7h1v1h-1zM144 7h1v1h-1zM177 7h1v1h-1zM200 7h2v1h-2zM212 7h1v1h-1zM248 7h3v1h-3zM7 8h1v1h-1zM20 8h1v1h-1zM31 8h1v1h-1zM70 8h1v1h-1zM95 8h1v1h-1zM105 8h1v1h-1zM112 8h2v1h-2zM116 8h1v1h-1zM137 8h1v1h-1zM162 8h1v1h-1zM169 8h1v1h-1zM182 8h1v1h-1zM228 8h1v1h-1zM242 8h1v1h-1zM266 8h1v1h-1zM0 9h1v1h-1zM6 9h1v1h-1zM11 9h1v1h-1zM31 9h1v1h-1zM40 9h1v1h-1zM47 9h1v1h-1zM61 9h1v1h-1zM70 9h2v1h-2zM81 9h1v1h-1zM98 9h1v1h-1zM107 9h1v1h-1zM118 9h1v1h-1zM128 9h1v1h-1zM150 9h1v1h-1zM157 9h1v1h-1zM161 9h2v1h-2zM164 9h1v1h-1zM169 9h1v1h-1zM173 9h1v1h-1zM178 9h1v1h-1zM203 9h1v1h-1zM246 9h1v1h-1zM253 9h1v1h-1zM258 9h1v1h-1zM264 9h1v1h-1zM6 10h1v1h-1zM13 10h1v1h-1zM18 10h1v1h-1zM24 10h1v1h-1zM40 10h1v1h-1zM75 10h1v1h-1zM80 10h1v1h-1zM82 10h1v1h-1zM95 10h1v1h-1zM104 10h1v1h-1zM107 10h1v1h-1zM143 10h1v1h-1zM148 10h1v1h-1zM168 10h1v1h-1zM175 10h1v1h-1zM193 10h1v1h-1zM201 10h1v1h-1zM217 10h1v1h-1zM223 10h1v1h-1zM233 10h1v1h-1zM242 10h1v1h-1zM266 10h1v1h-1zM8 11h2v1h-2zM72 11h1v1h-1zM91 11h1v1h-1zM182 11h1v1h-1zM198 11h1v1h-1zM207 11h1v1h-1zM218 11h1v1h-1zM239 11h1v1h-1zM241 11h1v1h-1zM4 12h1v1h-1zM7 12h1v1h-1zM27 12h1v1h-1zM41 12h1v1h-1zM59 12h1v1h-1zM96 12h2v1h-2zM112 12h2v1h-2zM120 12h1v1h-1zM136 12h1v1h-1zM153 12h1v1h-1zM166 12h1v1h-1zM184 12h1v1h-1zM196 12h1v1h-1zM207 12h1v1h-1zM210 12h1v1h-1zM212 12h1v1h-1zM218 12h1v1h-1zM235 12h1v1h-1zM265 12h1v1h-1zM267 12h1v1h-1zM6 13h1v1h-1zM11 13h1v1h-1zM27 13h1v1h-1zM47 13h1v1h-1zM88 13h2v1h-2zM95 13h1v1h-1zM129 13h1v1h-1zM136 13h2v1h-2zM141 13h1v1h-1zM143 13h1v1h-1zM157 13h1v1h-1zM196 13h1v1h-1zM208 13h2v1h-2zM221 13h1v1h-1zM234 13h1v1h-1zM260 13h1v1h-1zM262 13h1v1h-1z"/>
<path fill="#a1d548" d="M5 0h1v1h-1zM35 0h1v1h-1zM58 0h1v1h-1zM67 0h1v1h-1zM78 0h1v1h-1zM252 0h1v1h-1zM62 1h1v1h-1zM117 1h1v1h-1zM195 1h1v1h-1zM42 2h1v1h-1zM83 2h1v1h-1zM174 2h1v1h-1zM268 2h1v1h-1zM19 3h1v1h-1zM69 3h1v1h-1zM78 3h1v1h-1zM94 3h1v1h-1zM99 3h1v1h-1zM158 3h1v1h-1zM268 3h1v1h-1zM62 4h1v1h-1zM117 4h1v1h-1zM174 4h1v1h-1zM195 4h1v1h-1zM37 5h1v1h-1zM58 5h1v1h-1zM172 5h1v1h-1zM268 5h1v1h-1zM5 6h1v1h-1zM21 6h1v1h-1zM42 6h1v1h-1zM62 6h1v1h-1zM67 6h1v1h-1zM101 6h1v1h-1zM115 6h1v1h-1zM188 6h1v1h-1zM37 7h1v1h-1zM53 7h1v1h-1zM83 7h1v1h-1zM85 7h1v1h-1zM174 7h1v1h-1zM211 7h1v1h-1zM10 8h1v1h-1zM26 8h1v1h-1zM21 9h1v1h-1zM42 9h1v1h-1zM62 9h1v1h-1zM156 9h1v1h-1zM172 9h1v1h-1zM174 9h1v1h-1zM238 9h1v1h-1zM101 10h1v1h-1zM147 10h1v1h-1zM179 10h1v1h-1zM199 10h1v1h-1zM206 10h1v1h-1zM35 11h1v1h-1zM37 11h1v1h-1zM67 11h1v1h-1zM69 11h1v1h-1zM83 11h1v1h-1zM74 12h1v1h-1zM99 12h1v1h-1zM101 12h1v1h-1zM117 12h1v1h-1zM142 12h1v1h-1zM174 12h1v1h-1zM199 12h1v1h-1zM215 12h1v1h-1zM220 12h1v1h-1zM10 13h1v1h-1zM199 13h1v1h-1zM215 13h1v1h-1zM220 13h1v1h-1zM238 13h1v1h-1zM263 13h1v1h-1z"/>
<path fill="#add743" d="M44 0h1v1h-1zM101 0h1v1h-1zM108 0h1v1h-1zM172 0h1v1h-1zM188 0h1v1h-1zM204 0h1v1h-1zM213 0h1v1h-1zM238 0h1v1h-1zM108 1h1v1h-1zM156 1h1v1h-1zM197 1h1v1h-1zM213 1h1v1h-1zM229 1h1v1h-1zM245 1h1v1h-1zM254 1h1v1h-1zM140 2h1v1h-1zM165 2h1v1h-1zM3 3h1v1h-1zM60 3h1v1h-1zM124 3h1v1h-1zM165 3h1v1h-1zM197 3h1v1h-1zM213 3h1v1h-1zM270 3h1v1h-1zM3 4h1v1h-1zM92 4h1v1h-1zM108 4h1v1h-1zM133 4h1v1h-1zM140 4h1v1h-1zM172 4h1v1h-1zM206 4h1v1h-1zM213 4h1v1h-1zM270 4h1v1h-1zM19 5h1v1h-1zM44 5h1v1h-1zM60 5h1v1h-1zM85 5h1v1h-1zM92 5h1v1h-1zM108 5h1v1h-1zM124 5h1v1h-1zM140 5h1v1h-1zM156 5h1v1h-1zM197 5h1v1h-1zM206 5h1v1h-1zM213 5h1v1h-1zM229 5h1v1h-1zM245 5h1v1h-1zM261 5h1v1h-1zM19 6h1v1h-1zM44 6h1v1h-1zM60 6h1v1h-1zM108 6h1v1h-1zM117 6h1v1h-1zM181 6h1v1h-1zM206 6h1v1h-1zM245 6h1v1h-1zM12 7h1v1h-1zM28 7h1v1h-1zM35 7h1v1h-1zM51 7h1v1h-1zM60 7h1v1h-1zM92 7h1v1h-1zM101 7h1v1h-1zM140 7h1v1h-1zM188 7h1v1h-1zM3 8h1v1h-1zM261 8h1v1h-1zM19 9h1v1h-1zM44 9h1v1h-1zM53 9h1v1h-1zM60 9h1v1h-1zM92 9h1v1h-1zM101 9h1v1h-1zM117 9h1v1h-1zM140 9h1v1h-1zM222 9h1v1h-1zM28 10h1v1h-1zM53 10h1v1h-1zM69 10h1v1h-1zM108 10h1v1h-1zM133 10h1v1h-1zM165 10h1v1h-1zM181 10h1v1h-1zM197 10h1v1h-1zM254 10h1v1h-1zM270 10h1v1h-1zM44 11h1v1h-1zM53 11h1v1h-1zM140 11h1v1h-1zM181 11h1v1h-1zM245 11h1v1h-1zM12 12h1v1h-1zM67 12h1v1h-1zM245 12h1v1h-1zM12 13h1v1h-1zM28 13h1v1h-1zM44 13h1v1h-1zM92 13h1v1h-1zM108 13h1v1h-1zM124 13h1v1h-1zM133 13h1v1h-1zM181 13h1v1h-1zM190 13h1v1h-1zM229 13h1v1h-1z"/>
<path fill="#56bc68" d="M2 0h1v1h-1zM45 0h1v1h-1zM68 0h1v1h-1zM139 0h1v1h-1zM219 0h1v1h-1zM13 1h1v1h-1zM34 1h1v1h-1zM50 1h1v1h-1zM59 1h1v1h-1zM98 1h1v1h-1zM166 1h1v1h-1zM205 1h1v1h-1zM212 1h1v1h-1zM11 2h1v1h-1zM123 2h1v1h-1zM125 2h1v1h-1zM205 2h1v1h-1zM29 3h1v1h-1zM34 3h1v1h-1zM68 3h1v1h-1zM82 3h1v1h-1zM91 3h1v1h-1zM125 3h1v1h-1zM134 3h1v1h-1zM182 3h1v1h-1zM189 3h1v1h-1zM36 4h1v1h-1zM66 4h1v1h-1zM180 4h1v1h-1zM269 4h1v1h-1zM66 5h1v1h-1zM29 6h1v1h-1zM123 6h1v1h-1zM150 6h1v1h-1zM198 6h1v1h-1zM212 6h1v1h-1zM219 6h1v1h-1zM260 6h1v1h-1zM29 7h1v1h-1zM141 7h1v1h-1zM164 7h1v1h-1zM166 7h1v1h-1zM205 7h1v1h-1zM228 7h1v1h-1zM244 7h1v1h-1zM255 7h1v1h-1zM43 8h1v1h-1zM171 8h1v1h-1zM180 8h1v1h-1zM82 9h1v1h-1zM109 9h1v1h-1zM132 9h1v1h-1zM141 9h1v1h-1zM182 9h1v1h-1zM223 9h1v1h-1zM262 9h1v1h-1zM132 10h1v1h-1zM196 10h1v1h-1zM13 11h1v1h-1zM43 11h1v1h-1zM50 11h1v1h-1zM61 11h1v1h-1zM100 11h1v1h-1zM107 11h1v1h-1zM123 11h1v1h-1zM125 11h1v1h-1zM171 11h1v1h-1zM219 11h1v1h-1zM271 11h1v1h-1zM50 12h1v1h-1zM61 12h1v1h-1zM189 12h1v1h-1zM223 12h1v1h-1zM253 12h1v1h-1zM269 12h1v1h-1zM75 13h1v1h-1zM93 13h1v1h-1zM166 13h1v1h-1zM235 13h1v1h-1zM253 13h1v1h-1z"/>
<path fill="#6ec95c" d="M11 0h1v1h-1zM116 0h1v1h-1zM125 0h1v1h-1zM212 0h1v1h-1zM260 0h1v1h-1zM75 1h1v1h-1zM125 1h1v1h-1zM253 1h1v1h-1zM20 2h1v1h-1zM59 2h1v1h-1zM91 2h1v1h-1zM100 2h1v1h-1zM198 2h1v1h-1zM212 2h1v1h-1zM214 2h1v1h-1zM237 2h1v1h-1zM253 2h1v1h-1zM20 3h1v1h-1zM212 3h1v1h-1zM116 4h1v1h-1zM189 4h1v1h-1zM4 5h1v1h-1zM13 5h1v1h-1zM116 5h1v1h-1zM166 5h1v1h-1zM180 5h1v1h-1zM196 5h1v1h-1zM36 6h1v1h-1zM75 6h1v1h-1zM132 6h1v1h-1zM180 6h1v1h-1zM205 6h1v1h-1zM262 6h1v1h-1zM27 7h1v1h-1zM45 7h1v1h-1zM61 7h1v1h-1zM100 7h1v1h-1zM189 7h1v1h-1zM77 8h1v1h-1zM157 8h1v1h-1zM75 9h1v1h-1zM205 9h1v1h-1zM68 10h1v1h-1zM164 10h1v1h-1zM173 10h1v1h-1zM262 10h1v1h-1zM269 10h1v1h-1zM52 11h1v1h-1zM269 11h1v1h-1zM43 12h1v1h-1zM52 12h1v1h-1zM68 12h1v1h-1zM91 12h1v1h-1zM123 12h1v1h-1zM164 12h1v1h-1zM228 12h1v1h-1zM246 12h1v1h-1zM59 13h1v1h-1zM77 13h1v1h-1zM84 13h1v1h-1zM125 13h1v1h-1zM228 13h1v1h-1zM244 13h1v1h-1z"/>
<path fill="#78cc58" d="M100 0h1v1h-1zM107 0h1v1h-1zM182 0h1v1h-1zM189 0h1v1h-1zM91 1h1v1h-1zM107 1h1v1h-1zM118 1h1v1h-1zM182 1h1v1h-1zM214 1h1v1h-1zM141 2h1v1h-1zM52 3h1v1h-1zM75 3h1v1h-1zM123 3h1v1h-1zM269 3h1v1h-1zM45 4h1v1h-1zM93 4h1v1h-1zM132 4h1v1h-1zM260 4h1v1h-1zM43 5h1v1h-1zM61 5h1v1h-1zM84 5h1v1h-1zM93 5h1v1h-1zM107 5h1v1h-1zM123 5h1v1h-1zM157 5h1v1h-1zM198 5h1v1h-1zM212 5h1v1h-1zM246 5h1v1h-1zM59 6h1v1h-1zM116 6h1v1h-1zM221 6h1v1h-1zM164 8h1v1h-1zM260 8h1v1h-1zM116 9h1v1h-1zM171 9h1v1h-1zM207 9h1v1h-1zM221 9h1v1h-1zM36 10h1v1h-1zM116 10h1v1h-1zM182 10h1v1h-1zM253 10h1v1h-1zM45 11h1v1h-1zM180 11h1v1h-1zM244 11h1v1h-1zM107 12h1v1h-1zM118 12h1v1h-1zM173 12h1v1h-1zM91 13h1v1h-1zM132 13h1v1h-1z"/>
<path fill="#97d34c" d="M14 0h1v1h-1zM55 0h1v1h-1zM71 0h1v1h-1zM81 0h1v1h-1zM87 0h1v1h-1zM106 0h1v1h-1zM167 0h1v1h-1zM183 0h1v1h-1zM192 0h1v1h-1zM234 0h1v1h-1zM272 0h1v1h-1zM1 1h1v1h-1zM39 1h1v1h-1zM129 1h1v1h-1zM144 1h2v1h-2zM30 2h1v1h-1zM151 2h1v1h-1zM192 2h1v1h-1zM218 2h1v1h-1zM272 2h1v1h-1zM39 3h1v1h-1zM65 3h1v1h-1zM71 3h1v1h-1zM128 3h1v1h-1zM138 3h1v1h-1zM151 3h1v1h-1zM256 3h1v1h-1zM8 4h1v1h-1zM23 4h1v1h-1zM30 4h1v1h-1zM33 4h1v1h-1zM272 4h1v1h-1zM39 5h1v1h-1zM46 5h1v1h-1zM97 5h1v1h-1zM122 5h1v1h-1zM202 5h1v1h-1zM243 5h1v1h-1zM1 6h1v1h-1zM65 6h1v1h-1zM71 6h1v1h-1zM138 6h1v1h-1zM154 6h1v1h-1zM202 6h1v1h-1zM234 6h1v1h-1zM17 7h1v1h-1zM71 7h1v1h-1zM122 7h1v1h-1zM135 7h1v1h-1zM208 7h1v1h-1zM218 7h1v1h-1zM234 7h1v1h-1zM240 7h1v1h-1zM259 7h1v1h-1zM39 8h1v1h-1zM135 8h1v1h-1zM151 8h1v1h-1zM23 9h1v1h-1zM151 9h1v1h-1zM192 9h1v1h-1zM129 10h1v1h-1zM160 10h1v1h-1zM259 10h1v1h-1zM65 11h1v1h-1zM97 11h1v1h-1zM183 11h1v1h-1zM192 11h1v1h-1zM23 12h1v1h-1zM33 12h1v1h-1zM65 12h1v1h-1zM186 12h1v1h-1zM234 12h1v1h-1zM65 13h1v1h-1zM103 13h1v1h-1zM145 13h1v1h-1zM192 13h1v1h-1zM218 13h1v1h-1zM240 13h1v1h-1zM266 13h1v1h-1z"/>
<path fill="#acb44e" d="M42 0h1v1h-1zM160 0h1v1h-1zM250 0h1v1h-1zM259 0h1v1h-1zM14 1h1v1h-1zM33 1h1v1h-1zM37 1h1v1h-1zM94 1h1v1h-1zM158 1h1v1h-1zM208 1h1v1h-1zM240 3h1v1h-1zM10 4h1v1h-1zM17 4h1v1h-1zM74 4h1v1h-1zM113 4h1v1h-1zM147 4h1v1h-1zM170 4h1v1h-1zM192 4h1v1h-1zM167 5h1v1h-1zM183 5h1v1h-1zM7 6h1v1h-1zM23 6h1v1h-1zM119 6h1v1h-1zM176 6h1v1h-1zM208 6h1v1h-1zM78 7h1v1h-1zM151 7h1v1h-1zM17 9h1v1h-1zM33 9h1v1h-1zM183 9h1v1h-1zM250 9h1v1h-1zM1 10h1v1h-1zM10 10h1v1h-1zM30 10h1v1h-1zM46 10h1v1h-1zM208 10h1v1h-1zM236 10h1v1h-1zM263 10h1v1h-1zM1 12h1v1h-1zM71 12h1v1h-1zM14 13h1v1h-1zM115 13h1v1h-1zM119 13h1v1h-1zM154 13h1v1h-1zM202 13h1v1h-1z"/>
<path fill="#558778" d="M75 0h1v1h-1zM91 0h1v1h-1zM109 0h1v1h-1zM118 0h1v1h-1zM164 0h1v1h-1zM173 0h1v1h-1zM205 0h1v1h-1zM221 0h1v1h-1zM262 0h1v1h-1zM36 1h1v1h-1zM132 1h1v1h-1zM134 1h1v1h-1zM230 1h1v1h-1zM260 1h1v1h-1zM2 3h1v1h-1zM61 3h1v1h-1zM164 3h1v1h-1zM166 3h1v1h-1zM221 3h1v1h-1zM239 3h1v1h-1zM253 3h1v1h-1zM271 3h1v1h-1zM118 4h1v1h-1zM171 4h1v1h-1zM173 4h1v1h-1zM141 5h1v1h-1zM182 5h1v1h-1zM205 5h1v1h-1zM11 6h1v1h-1zM20 6h1v1h-1zM100 6h1v1h-1zM109 6h1v1h-1zM214 6h1v1h-1zM239 6h1v1h-1zM150 7h1v1h-1zM20 9h1v1h-1zM59 9h1v1h-1zM77 9h1v1h-1zM93 9h1v1h-1zM237 9h1v1h-1zM11 10h1v1h-1zM61 10h1v1h-1zM100 10h1v1h-1zM155 10h1v1h-1zM189 10h1v1h-1zM230 10h1v1h-1zM271 10h1v1h-1zM2 12h1v1h-1zM36 12h1v1h-1zM45 12h1v1h-1zM86 12h1v1h-1zM109 12h1v1h-1zM157 12h1v1h-1zM260 12h1v1h-1zM45 13h1v1h-1zM182 13h1v1h-1zM187 13h1v1h-1z"/>
<path fill="#ece22b" d="M34 0h1v1h-1zM59 0h1v1h-1zM146 0h1v1h-1zM237 0h1v1h-1zM171 1h1v1h-1zM173 1h1v1h-1zM166 2h1v1h-1zM18 3h1v1h-1zM107 3h1v1h-1zM230 3h1v1h-1zM2 4h1v1h-1zM86 4h1v1h-1zM157 4h1v1h-1zM239 4h1v1h-1zM264 4h1v1h-1zM262 5h1v1h-1zM34 6h1v1h-1zM43 6h1v1h-1zM253 6h1v1h-1zM13 7h1v1h-1zM36 7h1v1h-1zM52 7h1v1h-1zM59 7h1v1h-1zM82 7h1v1h-1zM86 7h1v1h-1zM38 9h1v1h-1zM43 9h1v1h-1zM50 10h1v1h-1zM98 10h1v1h-1zM198 10h1v1h-1zM219 10h1v1h-1zM38 11h1v1h-1zM141 11h1v1h-1zM244 12h1v1h-1zM29 13h1v1h-1zM107 13h1v1h-1zM212 13h1v1h-1zM269 13h1v1h-1z"/>
<path fill="#489e76" d="M17 0h1v1h-1zM99 0h1v1h-1zM124 0h1v1h-1zM186 0h1v1h-1zM236 0h1v1h-1zM270 0h1v1h-1zM28 1h1v1h-1zM30 1h1v1h-1zM35 1h1v1h-1zM44 1h1v1h-1zM67 1h1v1h-1zM83 1h1v1h-1zM106 1h1v1h-1zM138 1h1v1h-1zM165 1h1v1h-1zM186 1h1v1h-1zM190 1h1v1h-1zM215 1h1v1h-1zM220 1h1v1h-1zM243 1h1v1h-1zM263 1h1v1h-1zM272 1h1v1h-1zM14 2h1v1h-1zM142 2h1v1h-1zM195 2h1v1h-1zM35 3h1v1h-1zM42 3h1v1h-1zM44 3h1v1h-1zM49 3h1v1h-1zM53 3h1v1h-1zM87 3h1v1h-1zM117 3h1v1h-1zM131 3h1v1h-1zM133 3h1v1h-1zM140 3h1v1h-1zM149 3h1v1h-1zM174 3h1v1h-1zM186 3h1v1h-1zM204 3h1v1h-1zM206 3h1v1h-1zM215 3h1v1h-1zM227 3h1v1h-1zM231 3h1v1h-1zM243 3h1v1h-1zM261 3h1v1h-1zM19 4h1v1h-1zM21 4h1v1h-1zM46 4h1v1h-1zM87 4h1v1h-1zM106 4h1v1h-1zM122 4h1v1h-1zM131 4h1v1h-1zM183 4h1v1h-1zM186 4h1v1h-1zM227 4h1v1h-1zM229 4h1v1h-1zM240 4h1v1h-1zM247 4h1v1h-1zM94 5h1v1h-1zM119 5h1v1h-1zM188 5h1v1h-1zM211 5h1v1h-1zM252 5h1v1h-1zM259 5h1v1h-1zM69 6h1v1h-1zM85 6h1v1h-1zM90 6h1v1h-1zM92 6h1v1h-1zM135 6h1v1h-1zM140 6h1v1h-1zM147 6h1v1h-1zM167 6h1v1h-1zM170 6h1v1h-1zM186 6h1v1h-1zM252 6h1v1h-1zM261 6h1v1h-1zM10 7h1v1h-1zM19 7h1v1h-1zM49 7h1v1h-1zM106 7h1v1h-1zM110 7h1v1h-1zM115 7h1v1h-1zM124 7h1v1h-1zM126 7h1v1h-1zM133 7h1v1h-1zM172 7h1v1h-1zM179 7h1v1h-1zM181 7h1v1h-1zM206 7h1v1h-1zM215 7h1v1h-1zM263 7h1v1h-1zM35 8h1v1h-1zM58 8h1v1h-1zM101 8h1v1h-1zM147 8h1v1h-1zM206 8h1v1h-1zM220 8h1v1h-1zM227 8h1v1h-1zM236 8h1v1h-1zM10 9h1v1h-1zM12 9h1v1h-1zM14 9h1v1h-1zM49 9h1v1h-1zM94 9h1v1h-1zM103 9h1v1h-1zM119 9h1v1h-1zM122 9h1v1h-1zM165 9h1v1h-1zM181 9h1v1h-1zM195 9h1v1h-1zM215 9h1v1h-1zM227 9h1v1h-1zM240 9h1v1h-1zM245 9h1v1h-1zM261 9h1v1h-1zM3 10h1v1h-1zM17 10h1v1h-1zM42 10h1v1h-1zM58 10h1v1h-1zM85 10h1v1h-1zM87 10h1v1h-1zM90 10h1v1h-1zM122 10h1v1h-1zM135 10h1v1h-1zM151 10h1v1h-1zM172 10h1v1h-1zM46 11h1v1h-1zM115 11h1v1h-1zM151 11h1v1h-1zM158 11h1v1h-1zM188 11h1v1h-1zM199 11h1v1h-1zM211 11h1v1h-1zM254 11h1v1h-1zM17 12h1v1h-1zM19 12h1v1h-1zM28 12h1v1h-1zM37 12h1v1h-1zM46 12h1v1h-1zM78 12h1v1h-1zM110 12h1v1h-1zM133 12h1v1h-1zM188 12h1v1h-1zM204 12h1v1h-1zM240 12h1v1h-1zM256 12h1v1h-1zM272 12h1v1h-1zM30 13h1v1h-1zM42 13h1v1h-1zM53 13h1v1h-1zM62 13h1v1h-1zM147 13h1v1h-1zM158 13h1v1h-1zM206 13h1v1h-1zM224 13h1v1h-1zM247 13h1v1h-1zM259 13h1v1h-1zM272 13h1v1h-1z"/>
<path fill="#63c761" d="M25 0h1v1h-1zM50 0h1v1h-1zM111 0h1v1h-1zM141 0h1v1h-1zM162 0h1v1h-1zM248 0h1v1h-1zM93 1h1v1h-1zM175 1h1v1h-1zM22 2h1v1h-1zM34 2h1v1h-1zM70 2h1v1h-1zM207 2h1v1h-1zM9 3h1v1h-1zM22 3h1v1h-1zM25 3h1v1h-1zM114 3h1v1h-1zM162 3h1v1h-1zM178 3h1v1h-1zM248 3h1v1h-1zM251 3h1v1h-1zM264 3h1v1h-1zM6 4h1v1h-1zM43 4h1v1h-1zM84 4h1v1h-1zM148 4h1v1h-1zM70 5h1v1h-1zM248 5h1v1h-1zM38 6h1v1h-1zM50 6h1v1h-1zM54 6h1v1h-1zM82 6h1v1h-1zM118 6h1v1h-1zM130 6h1v1h-1zM162 6h1v1h-1zM175 6h1v1h-1zM207 6h1v1h-1zM146 7h1v1h-1zM187 7h1v1h-1zM84 8h1v1h-1zM159 8h1v1h-1zM191 8h1v1h-1zM18 9h1v1h-1zM54 9h1v1h-1zM86 9h1v1h-1zM219 9h1v1h-1zM255 9h1v1h-1zM221 10h1v1h-1zM237 10h1v1h-1zM255 10h1v1h-1zM25 11h1v1h-1zM102 11h1v1h-1zM130 11h1v1h-1zM143 11h1v1h-1zM235 11h1v1h-1zM248 11h1v1h-1zM264 11h1v1h-1zM70 12h1v1h-1zM93 12h1v1h-1zM130 12h1v1h-1zM230 12h1v1h-1zM82 13h1v1h-1zM155 13h1v1h-1z"/>
<path fill="#81ce55" d="M6 0h1v1h-1zM178 0h1v1h-1zM264 0h1v1h-1zM178 1h1v1h-1zM82 2h1v1h-1zM175 2h1v1h-1zM267 2h1v1h-1zM66 3h1v1h-1zM86 3h1v1h-1zM159 3h1v1h-1zM219 3h1v1h-1zM223 3h1v1h-1zM267 3h1v1h-1zM38 4h1v1h-1zM82 4h1v1h-1zM139 4h1v1h-1zM216 4h1v1h-1zM219 4h1v1h-1zM235 4h1v1h-1zM271 4h1v1h-1zM38 5h1v1h-1zM79 5h1v1h-1zM171 5h1v1h-1zM267 5h1v1h-1zM2 6h1v1h-1zM66 6h1v1h-1zM171 6h1v1h-1zM38 7h1v1h-1zM54 7h1v1h-1zM98 7h1v1h-1zM175 7h1v1h-1zM9 8h1v1h-1zM82 8h1v1h-1zM41 9h1v1h-1zM127 9h1v1h-1zM139 9h1v1h-1zM155 9h1v1h-1zM175 9h1v1h-1zM134 10h1v1h-1zM203 10h1v1h-1zM34 11h1v1h-1zM66 11h1v1h-1zM70 11h1v1h-1zM127 11h1v1h-1zM34 12h1v1h-1zM95 12h1v1h-1zM98 12h1v1h-1zM219 12h1v1h-1zM219 13h1v1h-1zM239 13h1v1h-1zM271 13h1v1h-1z"/>
<path fill="#95a659" d="M60 0h1v1h-1zM222 0h1v1h-1zM92 1h1v1h-1zM181 1h1v1h-1zM206 1h1v1h-1zM238 1h1v1h-1zM51 3h1v1h-1zM67 3h1v1h-1zM76 3h1v1h-1zM85 3h1v1h-1zM108 3h1v1h-1zM172 3h1v1h-1zM222 3h1v1h-1zM229 3h1v1h-1zM254 3h1v1h-1zM12 4h1v1h-1zM44 4h1v1h-1zM85 4h1v1h-1zM156 4h1v1h-1zM165 4h1v1h-1zM188 4h1v1h-1zM222 4h1v1h-1zM238 4h1v1h-1zM3 6h1v1h-1zM172 6h1v1h-1zM3 7h1v1h-1zM165 8h1v1h-1zM3 9h1v1h-1zM35 9h1v1h-1zM44 10h1v1h-1zM117 10h1v1h-1zM156 10h1v1h-1zM188 10h1v1h-1zM204 10h1v1h-1zM238 10h1v1h-1zM149 12h1v1h-1zM156 12h1v1h-1zM85 13h1v1h-1zM101 13h1v1h-1zM188 13h1v1h-1zM213 13h1v1h-1z"/>
</g>
<g transform="translate(415.400,294.600) scale(0.99763,24.72143)" shape-rendering="crispEdges">
<rect x="0" y="0" width="274" height="14" fill="#7f8083"/>
<path fill="#85ae5a" d="M5 0h1v1h-1zM30 0h1v1h-1zM33 0h1v1h-1zM46 0h1v1h-1zM174 0h1v1h-1zM238 0h1v1h-1zM1 1h1v1h-1zM101 1h1v1h-1zM106 1h1v1h-1zM108 1h1v1h-1zM257 1h1v1h-1zM144 2h1v1h-1zM195 2h1v1h-1zM243 2h1v1h-1zM7 3h1v1h-1zM49 3h1v1h-1zM142 3h1v1h-1zM231 3h1v1h-1zM8 4h1v1h-1zM23 4h1v1h-1zM39 4h1v1h-1zM62 4h1v1h-1zM81 4h1v1h-1zM149 4h1v1h-1zM169 4h1v1h-1zM229 4h1v1h-1zM231 4h1v1h-1zM250 4h1v1h-1zM30 5h1v1h-1zM74 5h1v1h-1zM1 6h1v1h-1zM21 6h1v1h-1zM28 6h1v1h-1zM65 6h1v1h-1zM179 6h1v1h-1zM185 6h1v1h-1zM92 7h1v1h-1zM147 7h1v1h-1zM185 7h1v1h-1zM220 7h1v1h-1zM254 7h1v1h-1zM16 8h1v1h-1zM21 8h1v1h-1zM30 8h1v1h-1zM67 8h1v1h-1zM177 8h1v1h-1zM94 9h1v1h-1zM122 9h1v1h-1zM270 9h1v1h-1zM23 10h1v1h-1zM57 10h1v1h-1zM65 10h1v1h-1zM78 10h1v1h-1zM268 10h1v1h-1zM74 11h1v1h-1zM142 11h1v1h-1zM231 11h1v1h-1zM250 11h1v1h-1zM33 12h1v1h-1zM81 12h1v1h-1zM165 12h1v1h-1zM94 13h1v1h-1zM117 13h1v1h-1zM133 13h1v1h-1zM140 13h1v1h-1zM217 13h1v1h-1z"/>
<path fill="#29c75a" d="M17 0h1v1h-1zM61 0h1v1h-1zM98 0h1v1h-1zM118 0h1v1h-1zM157 0h1v1h-1zM205 0h1v1h-1zM70 1h1v1h-1zM130 1h1v1h-1zM132 1h1v1h-1zM164 1h1v1h-1zM178 1h1v1h-1zM34 2h1v1h-1zM127 2h2v1h-2zM169 2h1v1h-1zM214 2h1v1h-1zM25 3h1v1h-1zM77 3h1v1h-1zM87 3h1v1h-1zM171 3h1v1h-1zM203 3h1v1h-1zM230 3h1v1h-1zM237 3h1v1h-1zM30 4h1v1h-1zM54 4h1v1h-1zM61 4h1v1h-1zM75 4h1v1h-1zM191 4h1v1h-1zM253 4h1v1h-1zM70 5h1v1h-1zM163 5h1v1h-1zM171 5h1v1h-1zM173 5h1v1h-1zM203 5h1v1h-1zM13 6h1v1h-1zM42 6h1v1h-1zM102 6h1v1h-1zM157 6h1v1h-1zM189 6h1v1h-1zM200 6h1v1h-1zM209 6h1v1h-1zM228 6h1v1h-1zM251 6h1v1h-1zM271 6h1v1h-1zM13 7h1v1h-1zM162 7h1v1h-1zM230 7h1v1h-1zM82 8h1v1h-1zM109 8h1v1h-1zM132 8h1v1h-1zM66 9h1v1h-1zM118 9h1v1h-1zM192 9h1v1h-1zM237 9h1v1h-1zM27 10h1v1h-1zM97 10h1v1h-1zM27 11h1v1h-1zM54 11h1v1h-1zM59 11h1v1h-1zM100 11h1v1h-1zM9 12h1v1h-1zM23 12h2v1h-2zM210 12h1v1h-1zM262 12h1v1h-1zM266 12h1v1h-1zM148 13h1v1h-1zM157 13h1v1h-1zM218 13h1v1h-1zM266 13h1v1h-1z"/>
<path fill="#bb11dd" d="M13 0h2v1h-2zM31 0h1v1h-1zM45 0h1v1h-1zM50 0h1v1h-1zM105 0h1v1h-1zM111 0h1v1h-1zM116 0h1v1h-1zM123 0h1v1h-1zM144 0h1v1h-1zM152 0h1v1h-1zM164 0h1v1h-1zM196 0h1v1h-1zM198 0h1v1h-1zM207 0h1v1h-1zM218 0h1v1h-1zM109 1h1v1h-1zM111 1h1v1h-1zM146 1h1v1h-1zM157 1h1v1h-1zM169 1h1v1h-1zM216 1h1v1h-1zM45 2h1v1h-1zM54 2h1v1h-1zM61 2h1v1h-1zM68 2h1v1h-1zM91 2h1v1h-1zM104 2h1v1h-1zM114 2h1v1h-1zM118 2h1v1h-1zM121 2h1v1h-1zM132 2h1v1h-1zM153 2h1v1h-1zM179 2h1v1h-1zM221 2h1v1h-1zM225 2h1v1h-1zM227 2h2v1h-2zM18 3h1v1h-1zM20 3h1v1h-1zM129 3h1v1h-1zM154 3h1v1h-1zM189 3h1v1h-1zM212 3h1v1h-1zM217 3h1v1h-1zM250 3h1v1h-1zM273 3h1v1h-1zM16 4h1v1h-1zM26 4h1v1h-1zM265 4h2v1h-2zM2 5h1v1h-1zM50 5h1v1h-1zM54 5h1v1h-1zM63 5h1v1h-1zM86 5h1v1h-1zM96 5h1v1h-1zM107 5h1v1h-1zM159 5h1v1h-1zM201 5h1v1h-1zM208 5h1v1h-1zM214 5h1v1h-1zM226 5h1v1h-1zM228 5h1v1h-1zM260 5h1v1h-1zM133 6h1v1h-1zM161 6h1v1h-1zM167 6h2v1h-2zM191 6h1v1h-1zM221 6h1v1h-1zM233 6h1v1h-1zM16 7h1v1h-1zM61 7h1v1h-1zM118 7h1v1h-1zM219 7h1v1h-1zM224 7h1v1h-1zM249 7h1v1h-1zM259 7h1v1h-1zM29 8h1v1h-1zM36 8h1v1h-1zM59 8h1v1h-1zM125 8h1v1h-1zM148 8h1v1h-1zM164 8h1v1h-1zM212 8h1v1h-1zM7 9h1v1h-1zM31 9h1v1h-1zM79 9h1v1h-1zM82 9h1v1h-1zM121 9h1v1h-1zM132 9h1v1h-1zM170 9h1v1h-1zM203 9h1v1h-1zM229 9h1v1h-1zM22 10h1v1h-1zM104 10h1v1h-1zM147 10h1v1h-1zM235 10h1v1h-1zM57 11h1v1h-1zM105 11h1v1h-1zM120 11h1v1h-1zM125 11h1v1h-1zM152 11h1v1h-1zM171 11h1v1h-1zM176 11h1v1h-1zM194 11h1v1h-1zM4 12h1v1h-1zM25 12h1v1h-1zM32 12h1v1h-1zM40 12h1v1h-1zM46 12h1v1h-1zM72 12h1v1h-1zM75 12h1v1h-1zM146 12h1v1h-1zM196 12h1v1h-1zM216 12h1v1h-1zM246 12h1v1h-1zM248 12h1v1h-1zM265 12h1v1h-1zM4 13h1v1h-1zM10 13h1v1h-1zM56 13h1v1h-1zM111 13h1v1h-1zM171 13h1v1h-1zM201 13h1v1h-1zM208 13h2v1h-2zM235 13h1v1h-1zM243 13h1v1h-1z"/>
<path fill="#b445ac" d="M18 0h1v1h-1zM29 0h1v1h-1zM47 0h1v1h-1zM88 0h1v1h-1zM173 0h1v1h-1zM239 0h1v1h-1zM273 0h1v1h-1zM24 1h1v1h-1zM48 1h1v1h-1zM107 1h1v1h-1zM168 1h1v1h-1zM207 1h1v1h-1zM237 1h1v1h-1zM2 2h1v1h-1zM38 2h1v1h-1zM66 2h1v1h-1zM70 2h1v1h-1zM82 2h1v1h-1zM109 2h1v1h-1zM113 2h1v1h-1zM148 2h1v1h-1zM216 2h1v1h-1zM2 3h1v1h-1zM72 3h1v1h-1zM107 3h1v1h-1zM120 3h1v1h-1zM150 3h1v1h-1zM168 3h1v1h-1zM173 3h1v1h-1zM201 3h1v1h-1zM258 3h1v1h-1zM15 4h1v1h-1zM32 4h1v1h-1zM49 4h1v1h-1zM141 4h1v1h-1zM159 4h1v1h-1zM203 4h1v1h-1zM226 4h1v1h-1zM233 4h1v1h-1zM246 4h1v1h-1zM93 5h1v1h-1zM121 5h1v1h-1zM168 5h1v1h-1zM253 5h1v1h-1zM271 5h1v1h-1zM95 6h1v1h-1zM97 6h1v1h-1zM107 6h1v1h-1zM164 6h1v1h-1zM176 6h1v1h-1zM178 6h1v1h-1zM232 6h1v1h-1zM264 6h1v1h-1zM266 6h1v1h-1zM27 7h1v1h-1zM62 7h1v1h-1zM82 7h1v1h-1zM88 7h1v1h-1zM109 7h1v1h-1zM121 7h1v1h-1zM161 7h1v1h-1zM171 7h1v1h-1zM177 7h1v1h-1zM253 7h1v1h-1zM267 7h1v1h-1zM61 8h1v1h-1zM98 8h1v1h-1zM104 8h2v1h-2zM111 8h1v1h-1zM123 8h1v1h-1zM175 8h1v1h-1zM225 8h1v1h-1zM0 9h1v1h-1zM89 9h1v1h-1zM107 9h1v1h-1zM164 9h1v1h-1zM180 9h1v1h-1zM184 9h1v1h-1zM214 9h1v1h-1zM266 9h1v1h-1zM271 9h1v1h-1zM0 10h1v1h-1zM2 10h1v1h-1zM31 10h1v1h-1zM41 10h1v1h-1zM43 10h1v1h-1zM61 10h1v1h-1zM64 10h1v1h-1zM168 10h1v1h-1zM205 10h1v1h-1zM208 10h1v1h-1zM273 10h1v1h-1zM13 11h1v1h-1zM34 11h1v1h-1zM93 11h1v1h-1zM98 11h1v1h-1zM107 11h1v1h-1zM123 11h1v1h-1zM127 11h1v1h-1zM145 11h1v1h-1zM153 11h1v1h-1zM164 11h1v1h-1zM173 11h1v1h-1zM178 11h1v1h-1zM184 11h1v1h-1zM255 11h1v1h-1zM273 11h1v1h-1zM15 12h1v1h-1zM30 12h1v1h-1zM111 12h1v1h-1zM113 12h1v1h-1zM182 12h1v1h-1zM235 12h1v1h-1zM269 12h1v1h-1zM13 13h1v1h-1zM48 13h1v1h-1zM70 13h1v1h-1zM72 13h1v1h-1zM96 13h1v1h-1zM128 13h1v1h-1zM141 13h1v1h-1zM160 13h1v1h-1zM183 13h1v1h-1zM207 13h1v1h-1zM212 13h1v1h-1z"/>
<path fill="#0b43f8" d="M27 0h1v1h-1zM42 0h1v1h-1zM62 0h1v1h-1zM66 0h1v1h-1zM79 0h1v1h-1zM119 0h2v1h-2zM125 0h1v1h-1zM131 0h2v1h-2zM135 0h1v1h-1zM158 0h1v1h-1zM206 0h1v1h-1zM255 0h1v1h-1zM262 0h1v1h-1zM271 0h1v1h-1zM29 1h1v1h-1zM36 1h1v1h-1zM56 1h1v1h-1zM61 1h1v1h-1zM84 1h1v1h-1zM95 1h1v1h-1zM104 1h1v1h-1zM149 1h2v1h-2zM179 1h1v1h-1zM197 1h1v1h-1zM213 1h1v1h-1zM4 2h1v1h-1zM31 2h1v1h-1zM33 2h1v1h-1zM43 2h2v1h-2zM74 2h1v1h-1zM97 2h1v1h-1zM119 2h1v1h-1zM158 2h1v1h-1zM167 2h2v1h-2zM199 2h2v1h-2zM211 2h1v1h-1zM232 2h1v1h-1zM239 2h1v1h-1zM262 2h1v1h-1zM268 2h1v1h-1zM19 3h1v1h-1zM39 3h1v1h-1zM89 3h2v1h-2zM99 3h1v1h-1zM148 3h1v1h-1zM159 3h1v1h-1zM182 3h1v1h-1zM215 3h2v1h-2zM221 3h1v1h-1zM229 3h1v1h-1zM245 3h1v1h-1zM249 3h1v1h-1zM256 3h1v1h-1zM3 4h1v1h-1zM31 4h1v1h-1zM55 4h1v1h-1zM69 4h1v1h-1zM119 4h1v1h-1zM164 4h2v1h-2zM187 4h1v1h-1zM257 4h1v1h-1zM8 5h1v1h-1zM62 5h1v1h-1zM95 5h1v1h-1zM150 5h1v1h-1zM202 5h1v1h-1zM209 5h1v1h-1zM63 6h1v1h-1zM69 6h1v1h-1zM139 6h1v1h-1zM141 6h1v1h-1zM172 6h2v1h-2zM187 6h2v1h-2zM192 6h1v1h-1zM217 6h1v1h-1zM237 6h1v1h-1zM246 6h2v1h-2zM258 6h1v1h-1zM9 7h2v1h-2zM52 7h1v1h-1zM71 7h1v1h-1zM78 7h2v1h-2zM149 7h2v1h-2zM173 7h1v1h-1zM188 7h1v1h-1zM194 7h1v1h-1zM47 8h1v1h-1zM51 8h2v1h-2zM63 8h1v1h-1zM84 8h3v1h-3zM96 8h1v1h-1zM116 8h1v1h-1zM141 8h1v1h-1zM147 8h1v1h-1zM165 8h2v1h-2zM179 8h1v1h-1zM199 8h1v1h-1zM203 8h1v1h-1zM239 8h1v1h-1zM248 8h1v1h-1zM269 8h1v1h-1zM4 9h1v1h-1zM45 9h1v1h-1zM139 9h1v1h-1zM142 9h1v1h-1zM163 9h1v1h-1zM182 9h1v1h-1zM198 9h2v1h-2zM206 9h1v1h-1zM234 9h1v1h-1zM247 9h1v1h-1zM11 10h1v1h-1zM58 10h1v1h-1zM62 10h1v1h-1zM69 10h1v1h-1zM72 10h1v1h-1zM82 10h2v1h-2zM130 10h2v1h-2zM144 10h1v1h-1zM3 11h2v1h-2zM16 11h1v1h-1zM52 11h2v1h-2zM63 11h1v1h-1zM112 11h1v1h-1zM150 11h2v1h-2zM157 11h1v1h-1zM169 11h1v1h-1zM172 11h1v1h-1zM188 11h1v1h-1zM240 11h1v1h-1zM248 11h2v1h-2zM13 12h1v1h-1zM26 12h1v1h-1zM31 12h1v1h-1zM36 12h1v1h-1zM56 12h1v1h-1zM62 12h1v1h-1zM71 12h1v1h-1zM106 12h1v1h-1zM109 12h1v1h-1zM147 12h1v1h-1zM151 12h1v1h-1zM169 12h1v1h-1zM178 12h1v1h-1zM199 12h1v1h-1zM233 12h1v1h-1zM247 12h1v1h-1zM272 12h1v1h-1zM8 13h1v1h-1zM17 13h1v1h-1zM40 13h1v1h-1zM74 13h1v1h-1zM83 13h1v1h-1zM167 13h1v1h-1zM177 13h1v1h-1zM252 13h1v1h-1z"/>
<path fill="#7feb14" d="M180 0h1v1h-1zM186 0h1v1h-1zM192 0h1v1h-1zM210 0h1v1h-1zM231 0h1v1h-1zM234 0h1v1h-1zM9 1h1v1h-1zM13 1h1v1h-1zM37 1h1v1h-1zM47 1h1v1h-1zM63 1h1v1h-1zM73 1h1v1h-1zM99 1h1v1h-1zM152 1h1v1h-1zM219 1h2v1h-2zM226 1h1v1h-1zM241 1h1v1h-1zM20 2h1v1h-1zM37 2h1v1h-1zM76 2h1v1h-1zM83 2h1v1h-1zM85 2h1v1h-1zM108 2h1v1h-1zM131 2h1v1h-1zM140 2h1v1h-1zM142 2h1v1h-1zM164 2h1v1h-1zM236 2h1v1h-1zM17 3h1v1h-1zM91 3h1v1h-1zM158 3h1v1h-1zM183 3h1v1h-1zM206 3h1v1h-1zM262 3h1v1h-1zM10 4h1v1h-1zM12 4h1v1h-1zM64 4h1v1h-1zM110 4h1v1h-1zM167 4h1v1h-1zM181 4h1v1h-1zM183 4h1v1h-1zM248 4h1v1h-1zM21 5h1v1h-1zM37 5h1v1h-1zM42 5h1v1h-1zM44 5h1v1h-1zM140 5h1v1h-1zM142 5h1v1h-1zM165 5h1v1h-1zM179 5h1v1h-1zM193 5h1v1h-1zM252 5h1v1h-1zM272 5h1v1h-1zM5 6h1v1h-1zM26 6h1v1h-1zM29 6h1v1h-1zM50 6h1v1h-1zM91 6h1v1h-1zM99 6h1v1h-1zM120 6h1v1h-1zM135 6h1v1h-1zM170 6h1v1h-1zM231 6h1v1h-1zM41 7h1v1h-1zM87 7h1v1h-1zM89 7h1v1h-1zM108 7h1v1h-1zM192 7h1v1h-1zM266 7h1v1h-1zM270 7h1v1h-1zM5 8h1v1h-1zM76 8h2v1h-2zM131 8h1v1h-1zM156 8h1v1h-1zM161 8h1v1h-1zM163 8h1v1h-1zM243 8h1v1h-1zM35 9h1v1h-1zM65 9h1v1h-1zM119 9h1v1h-1zM126 9h1v1h-1zM147 9h1v1h-1zM156 9h1v1h-1zM166 9h1v1h-1zM194 9h1v1h-1zM196 9h1v1h-1zM245 9h1v1h-1zM251 9h1v1h-1zM88 10h1v1h-1zM150 10h1v1h-1zM206 10h1v1h-1zM231 10h1v1h-1zM255 10h1v1h-1zM21 11h1v1h-1zM197 11h1v1h-1zM206 11h1v1h-1zM225 11h1v1h-1zM110 12h1v1h-1zM118 12h1v1h-1zM155 12h2v1h-2zM158 12h1v1h-1zM173 12h1v1h-1zM225 12h1v1h-1zM228 12h1v1h-1zM12 13h1v1h-1zM15 13h1v1h-1zM39 13h1v1h-1zM41 13h1v1h-1zM65 13h1v1h-1zM78 13h1v1h-1zM132 13h1v1h-1zM142 13h1v1h-1zM145 13h1v1h-1zM176 13h1v1h-1zM225 13h1v1h-1zM270 13h1v1h-1z"/>
<path fill="#088aee" d="M54 0h1v1h-1zM99 0h1v1h-1zM130 0h1v1h-1zM194 0h1v1h-1zM200 0h1v1h-1zM242 0h1v1h-1zM267 0h1v1h-1zM4 1h1v1h-1zM6 1h1v1h-1zM55 1h1v1h-1zM131 1h1v1h-1zM170 1h1v1h-1zM176 1h1v1h-1zM192 1h2v1h-2zM214 1h1v1h-1zM265 1h1v1h-1zM147 2h1v1h-1zM175 2h1v1h-1zM9 3h1v1h-1zM57 3h2v1h-2zM66 3h1v1h-1zM84 3h1v1h-1zM112 3h2v1h-2zM125 3h1v1h-1zM166 3h1v1h-1zM195 3h1v1h-1zM204 3h1v1h-1zM239 3h1v1h-1zM246 3h1v1h-1zM1 4h1v1h-1zM19 4h2v1h-2zM25 4h1v1h-1zM52 4h1v1h-1zM57 4h2v1h-2zM66 4h1v1h-1zM120 4h1v1h-1zM142 4h2v1h-2zM151 4h1v1h-1zM10 5h1v1h-1zM45 5h1v1h-1zM174 5h1v1h-1zM213 5h1v1h-1zM45 6h1v1h-1zM196 6h2v1h-2zM234 6h1v1h-1zM236 6h1v1h-1zM31 7h1v1h-1zM42 7h1v1h-1zM51 7h1v1h-1zM123 7h1v1h-1zM148 7h1v1h-1zM164 7h1v1h-1zM169 7h1v1h-1zM237 7h1v1h-1zM89 8h2v1h-2zM119 8h1v1h-1zM124 8h1v1h-1zM149 8h1v1h-1zM187 8h1v1h-1zM246 8h1v1h-1zM30 9h1v1h-1zM52 9h1v1h-1zM85 9h1v1h-1zM90 9h1v1h-1zM108 9h1v1h-1zM135 9h1v1h-1zM140 9h1v1h-1zM178 9h1v1h-1zM211 9h1v1h-1zM243 9h1v1h-1zM93 10h1v1h-1zM103 10h1v1h-1zM127 10h1v1h-1zM163 10h1v1h-1zM179 10h1v1h-1zM233 10h1v1h-1zM269 10h1v1h-1zM2 11h1v1h-1zM23 11h1v1h-1zM124 11h1v1h-1zM147 11h1v1h-1zM158 11h1v1h-1zM198 11h1v1h-1zM69 12h1v1h-1zM83 12h1v1h-1zM86 12h1v1h-1zM129 12h1v1h-1zM140 12h1v1h-1zM200 12h1v1h-1zM205 12h1v1h-1zM215 12h1v1h-1zM229 12h2v1h-2zM267 12h1v1h-1zM271 12h1v1h-1zM16 13h1v1h-1zM25 13h1v1h-1zM73 13h1v1h-1zM75 13h1v1h-1zM124 13h1v1h-1zM173 13h1v1h-1zM223 13h1v1h-1zM263 13h1v1h-1z"/>
<path fill="#fb7308" d="M139 0h1v1h-1zM185 0h1v1h-1zM204 0h1v1h-1zM220 0h1v1h-1zM228 0h1v1h-1zM16 1h1v1h-1zM204 1h1v1h-1zM29 3h1v1h-1zM34 3h1v1h-1zM43 3h1v1h-1zM131 3h1v1h-1zM184 3h1v1h-1zM233 3h1v1h-1zM36 4h1v1h-1zM103 4h1v1h-1zM176 4h1v1h-1zM195 4h1v1h-1zM206 4h1v1h-1zM255 4h1v1h-1zM258 4h1v1h-1zM28 5h1v1h-1zM43 5h1v1h-1zM82 5h1v1h-1zM88 5h1v1h-1zM147 5h1v1h-1zM181 5h1v1h-1zM220 5h1v1h-1zM222 5h1v1h-1zM233 5h1v1h-1zM10 6h1v1h-1zM18 6h1v1h-1zM51 6h1v1h-1zM58 6h1v1h-1zM106 6h1v1h-1zM145 6h1v1h-1zM163 6h1v1h-1zM29 7h1v1h-1zM44 7h1v1h-1zM96 7h1v1h-1zM106 7h1v1h-1zM127 7h1v1h-1zM152 7h1v1h-1zM167 7h1v1h-1zM213 7h1v1h-1zM226 7h1v1h-1zM9 8h1v1h-1zM127 8h1v1h-1zM135 8h1v1h-1zM193 8h1v1h-1zM227 8h1v1h-1zM263 8h1v1h-1zM2 9h1v1h-1zM34 9h1v1h-1zM41 9h1v1h-1zM74 9h1v1h-1zM128 9h1v1h-1zM154 9h1v1h-1zM168 9h1v1h-1zM49 10h1v1h-1zM66 10h1v1h-1zM108 10h1v1h-1zM118 10h1v1h-1zM185 10h1v1h-1zM196 10h1v1h-1zM210 10h2v1h-2zM250 10h1v1h-1zM18 12h1v1h-1zM22 12h1v1h-1zM28 12h1v1h-1zM66 12h1v1h-1zM99 12h3v1h-3zM124 12h2v1h-2zM245 12h1v1h-1zM253 12h1v1h-1zM255 12h1v1h-1zM64 13h1v1h-1zM95 13h1v1h-1zM103 13h1v1h-1zM150 13h1v1h-1zM220 13h1v1h-1zM240 13h1v1h-1zM257 13h1v1h-1zM271 13h1v1h-1z"/>
<path fill="#9515a2" d="M6 0h1v1h-1zM44 0h1v1h-1zM67 0h1v1h-1zM261 0h1v1h-1zM17 1h1v1h-1zM19 1h1v1h-1zM147 1h1v1h-1zM215 1h1v1h-1zM250 1h1v1h-1zM256 1h1v1h-1zM60 2h1v1h-1zM44 3h1v1h-1zM110 3h1v1h-1zM151 3h1v1h-1zM156 3h1v1h-1zM188 3h1v1h-1zM193 3h1v1h-1zM53 4h1v1h-1zM254 4h1v1h-1zM190 5h1v1h-1zM86 6h1v1h-1zM101 6h1v1h-1zM140 6h1v1h-1zM242 6h1v1h-1zM53 7h1v1h-1zM124 7h1v1h-1zM193 7h1v1h-1zM25 9h1v1h-1zM84 9h1v1h-1zM95 9h1v1h-1zM109 9h1v1h-1zM153 9h1v1h-1zM202 9h1v1h-1zM204 9h1v1h-1zM207 9h1v1h-1zM215 9h2v1h-2zM220 9h1v1h-1zM12 10h1v1h-1zM63 10h1v1h-1zM96 10h1v1h-1zM158 10h1v1h-1zM37 11h1v1h-1zM229 11h1v1h-1zM65 12h1v1h-1zM88 12h1v1h-1zM23 13h1v1h-1zM33 13h1v1h-1zM90 13h1v1h-1zM123 13h1v1h-1zM242 13h1v1h-1z"/>
<path fill="#48ed25" d="M59 0h1v1h-1zM112 0h1v1h-1zM138 0h1v1h-1zM160 0h1v1h-1zM187 0h1v1h-1zM216 0h1v1h-1zM266 0h1v1h-1zM22 1h1v1h-1zM38 1h1v1h-1zM41 1h1v1h-1zM79 1h1v1h-1zM82 1h1v1h-1zM183 1h1v1h-1zM239 1h1v1h-1zM111 2h1v1h-1zM123 2h1v1h-1zM141 2h1v1h-1zM234 2h1v1h-1zM260 2h1v1h-1zM264 2h1v1h-1zM4 3h1v1h-1zM9 4h1v1h-1zM11 4h1v1h-1zM29 4h1v1h-1zM127 4h1v1h-1zM171 4h1v1h-1zM192 4h2v1h-2zM271 4h1v1h-1zM27 5h1v1h-1zM56 5h1v1h-1zM119 5h1v1h-1zM129 5h1v1h-1zM139 5h1v1h-1zM143 5h1v1h-1zM164 5h1v1h-1zM176 5h1v1h-1zM200 5h1v1h-1zM240 5h1v1h-1zM251 5h1v1h-1zM273 5h1v1h-1zM49 6h1v1h-1zM54 6h1v1h-1zM61 6h1v1h-1zM109 6h1v1h-1zM132 6h1v1h-1zM250 6h1v1h-1zM262 6h1v1h-1zM267 6h1v1h-1zM64 7h1v1h-1zM200 7h1v1h-1zM260 7h1v1h-1zM273 7h1v1h-1zM81 8h1v1h-1zM136 8h1v1h-1zM139 8h1v1h-1zM209 8h1v1h-1zM219 8h1v1h-1zM234 8h1v1h-1zM48 9h1v1h-1zM98 9h1v1h-1zM125 9h1v1h-1zM134 9h1v1h-1zM146 9h1v1h-1zM159 9h1v1h-1zM188 9h1v1h-1zM223 9h1v1h-1zM257 9h1v1h-1zM13 10h1v1h-1zM29 10h1v1h-1zM184 10h1v1h-1zM219 10h1v1h-1zM223 10h1v1h-1zM248 10h2v1h-2zM265 10h1v1h-1zM9 11h1v1h-1zM14 11h1v1h-1zM18 11h1v1h-1zM86 11h1v1h-1zM89 11h1v1h-1zM135 11h1v1h-1zM138 11h1v1h-1zM141 11h1v1h-1zM155 11h1v1h-1zM210 11h1v1h-1zM246 11h1v1h-1zM259 11h1v1h-1zM263 11h1v1h-1zM20 12h1v1h-1zM107 12h1v1h-1zM137 12h1v1h-1zM153 12h1v1h-1zM166 12h1v1h-1zM183 12h1v1h-1zM189 12h1v1h-1zM122 13h1v1h-1zM153 13h1v1h-1zM174 13h1v1h-1zM205 13h1v1h-1zM226 13h2v1h-2zM239 13h1v1h-1zM261 13h1v1h-1z"/>
<path fill="#7c758f" d="M35 0h1v1h-1zM37 0h1v1h-1zM51 0h1v1h-1zM108 0h1v1h-1zM117 0h1v1h-1zM133 0h1v1h-1zM156 0h1v1h-1zM181 0h1v1h-1zM213 0h1v1h-1zM215 0h1v1h-1zM222 0h1v1h-1zM256 0h1v1h-1zM3 1h1v1h-1zM21 1h1v1h-1zM26 1h1v1h-1zM28 1h1v1h-1zM44 1h1v1h-1zM46 1h1v1h-1zM53 1h1v1h-1zM60 1h1v1h-1zM69 1h1v1h-1zM74 1h1v1h-1zM90 1h1v1h-1zM92 1h1v1h-1zM110 1h1v1h-1zM138 1h1v1h-1zM181 1h1v1h-1zM231 1h1v1h-1zM238 1h1v1h-1zM270 1h1v1h-1zM26 2h1v1h-1zM51 2h1v1h-1zM62 2h1v1h-1zM67 2h1v1h-1zM133 2h1v1h-1zM165 2h1v1h-1zM181 2h1v1h-1zM183 2h1v1h-1zM192 2h1v1h-1zM222 2h1v1h-1zM238 2h1v1h-1zM245 2h1v1h-1zM261 2h1v1h-1zM270 2h1v1h-1zM83 3h1v1h-1zM108 3h1v1h-1zM115 3h1v1h-1zM122 3h1v1h-1zM138 3h1v1h-1zM167 3h1v1h-1zM172 3h1v1h-1zM181 3h1v1h-1zM190 3h1v1h-1zM197 3h1v1h-1zM211 3h1v1h-1zM33 4h1v1h-1zM37 4h1v1h-1zM44 4h1v1h-1zM74 4h1v1h-1zM85 4h1v1h-1zM140 4h1v1h-1zM188 4h1v1h-1zM215 4h1v1h-1zM218 4h1v1h-1zM222 4h1v1h-1zM227 4h1v1h-1zM53 5h1v1h-1zM55 5h1v1h-1zM76 5h1v1h-1zM92 5h1v1h-1zM108 5h1v1h-1zM117 5h1v1h-1zM195 5h1v1h-1zM229 5h1v1h-1zM238 5h1v1h-1zM270 5h1v1h-1zM76 6h1v1h-1zM119 6h1v1h-1zM156 6h1v1h-1zM165 6h1v1h-1zM190 6h1v1h-1zM222 6h1v1h-1zM261 6h1v1h-1zM263 6h1v1h-1zM3 7h1v1h-1zM99 7h1v1h-1zM110 7h1v1h-1zM142 7h1v1h-1zM151 7h1v1h-1zM156 7h1v1h-1zM190 7h1v1h-1zM197 7h1v1h-1zM204 7h1v1h-1zM218 7h1v1h-1zM222 7h1v1h-1zM236 7h1v1h-1zM272 7h1v1h-1zM3 8h1v1h-1zM12 8h1v1h-1zM26 8h1v1h-1zM28 8h1v1h-1zM42 8h1v1h-1zM53 8h1v1h-1zM87 8h1v1h-1zM103 8h1v1h-1zM115 8h1v1h-1zM140 8h1v1h-1zM174 8h1v1h-1zM188 8h1v1h-1zM204 8h1v1h-1zM206 8h1v1h-1zM208 8h1v1h-1zM245 8h1v1h-1zM254 8h1v1h-1zM261 8h1v1h-1zM5 9h1v1h-1zM49 9h1v1h-1zM60 9h1v1h-1zM76 9h1v1h-1zM87 9h1v1h-1zM92 9h1v1h-1zM110 9h1v1h-1zM158 9h1v1h-1zM174 9h1v1h-1zM190 9h1v1h-1zM238 9h1v1h-1zM252 9h1v1h-1zM256 9h1v1h-1zM1 10h1v1h-1zM33 10h1v1h-1zM37 10h1v1h-1zM46 10h1v1h-1zM67 10h1v1h-1zM149 10h1v1h-1zM165 10h1v1h-1zM190 10h1v1h-1zM224 10h1v1h-1zM236 10h1v1h-1zM19 11h1v1h-1zM87 11h1v1h-1zM92 11h1v1h-1zM97 11h1v1h-1zM99 11h1v1h-1zM126 11h1v1h-1zM149 11h1v1h-1zM183 11h1v1h-1zM208 11h1v1h-1zM224 11h1v1h-1zM238 11h1v1h-1zM245 11h1v1h-1zM261 11h1v1h-1zM35 12h1v1h-1zM85 12h1v1h-1zM108 12h1v1h-1zM115 12h1v1h-1zM186 12h1v1h-1zM190 12h1v1h-1zM224 12h1v1h-1zM238 12h1v1h-1zM270 12h1v1h-1zM3 13h1v1h-1zM26 13h1v1h-1zM35 13h1v1h-1zM60 13h1v1h-1zM115 13h1v1h-1zM211 13h1v1h-1z"/>
<path fill="#f81c63" d="M58 0h1v1h-1zM175 0h1v1h-1zM229 0h1v1h-1zM245 0h1v1h-1zM59 1h1v1h-1zM175 1h1v1h-1zM182 1h1v1h-1zM218 1h1v1h-1zM234 1h1v1h-1zM254 1h1v1h-1zM258 1h1v1h-1zM5 3h1v1h-1zM46 3h1v1h-1zM78 3h1v1h-1zM126 3h1v1h-1zM130 3h1v1h-1zM78 4h1v1h-1zM116 4h1v1h-1zM135 4h1v1h-1zM172 4h1v1h-1zM179 4h1v1h-1zM201 4h1v1h-1zM213 4h1v1h-1zM46 6h1v1h-1zM127 6h1v1h-1zM68 7h1v1h-1zM133 7h1v1h-1zM140 7h1v1h-1zM203 7h1v1h-1zM207 7h1v1h-1zM264 8h1v1h-1zM78 9h1v1h-1zM99 9h1v1h-1zM148 9h1v1h-1zM85 10h1v1h-1zM101 10h1v1h-1zM122 10h1v1h-1zM135 10h1v1h-1zM174 10h1v1h-1zM186 10h1v1h-1zM197 10h1v1h-1zM245 10h1v1h-1zM252 10h1v1h-1zM267 10h1v1h-1zM42 11h1v1h-1zM216 11h1v1h-1zM8 12h1v1h-1zM92 12h1v1h-1zM127 12h1v1h-1zM141 12h1v1h-1zM180 12h1v1h-1zM191 12h1v1h-1zM213 12h1v1h-1zM62 13h1v1h-1z"/>
<path fill="#425db7" d="M0 0h1v1h-1zM11 0h1v1h-1zM102 0h1v1h-1zM178 0h1v1h-1zM235 0h1v1h-1zM15 1h1v1h-1zM68 1h1v1h-1zM89 1h1v1h-1zM100 1h1v1h-1zM116 1h1v1h-1zM122 1h1v1h-1zM128 1h1v1h-1zM134 1h1v1h-1zM137 1h1v1h-1zM155 1h1v1h-1zM201 1h1v1h-1zM210 1h1v1h-1zM232 1h1v1h-1zM260 1h1v1h-1zM262 1h1v1h-1zM269 1h1v1h-1zM134 2h1v1h-1zM182 2h1v1h-1zM235 2h1v1h-1zM258 2h1v1h-1zM16 3h1v1h-1zM132 3h1v1h-1zM139 3h1v1h-1zM169 3h1v1h-1zM198 3h1v1h-1zM253 3h1v1h-1zM47 4h1v1h-1zM88 4h1v1h-1zM100 4h1v1h-1zM148 4h1v1h-1zM155 4h1v1h-1zM210 4h1v1h-1zM6 5h1v1h-1zM22 5h1v1h-1zM29 5h1v1h-1zM61 5h1v1h-1zM80 5h1v1h-1zM118 5h1v1h-1zM132 5h1v1h-1zM137 5h1v1h-1zM144 5h2v1h-2zM177 5h2v1h-2zM180 5h1v1h-1zM182 5h1v1h-1zM225 5h1v1h-1zM11 6h1v1h-1zM52 6h1v1h-1zM57 6h1v1h-1zM89 6h1v1h-1zM98 6h1v1h-1zM118 6h1v1h-1zM226 6h1v1h-1zM23 7h1v1h-1zM98 7h1v1h-1zM111 7h1v1h-1zM114 7h1v1h-1zM116 7h1v1h-1zM125 7h1v1h-1zM153 7h1v1h-1zM182 7h1v1h-1zM209 7h1v1h-1zM217 7h1v1h-1zM262 7h1v1h-1zM6 8h1v1h-1zM13 8h1v1h-1zM23 8h3v1h-3zM27 8h1v1h-1zM40 8h1v1h-1zM79 8h1v1h-1zM114 8h1v1h-1zM169 8h1v1h-1zM196 8h1v1h-1zM223 8h1v1h-1zM242 8h1v1h-1zM6 9h1v1h-1zM36 9h1v1h-1zM63 9h2v1h-2zM102 9h1v1h-1zM129 9h1v1h-1zM187 9h1v1h-1zM246 9h1v1h-1zM253 9h1v1h-1zM106 10h2v1h-2zM141 10h1v1h-1zM15 11h1v1h-1zM47 11h1v1h-1zM72 11h2v1h-2zM109 11h1v1h-1zM116 11h1v1h-1zM129 11h1v1h-1zM200 11h1v1h-1zM7 12h1v1h-1zM87 12h1v1h-1zM136 12h1v1h-1zM145 12h1v1h-1zM175 12h1v1h-1zM212 12h1v1h-1zM260 12h1v1h-1zM11 13h1v1h-1zM20 13h1v1h-1zM38 13h1v1h-1zM77 13h1v1h-1zM109 13h1v1h-1zM146 13h1v1h-1zM184 13h1v1h-1zM221 13h1v1h-1zM268 13h1v1h-1z"/>
<path fill="#6969e3" d="M3 0h1v1h-1zM12 0h1v1h-1zM93 0h2v1h-2zM226 0h1v1h-1zM252 0h1v1h-1zM165 1h1v1h-1zM224 1h1v1h-1zM229 1h1v1h-1zM177 2h1v1h-1zM246 2h1v1h-1zM251 2h1v1h-1zM96 3h1v1h-1zM109 3h1v1h-1zM208 3h1v1h-1zM238 3h1v1h-1zM247 3h1v1h-1zM268 3h1v1h-1zM21 4h2v1h-2zM93 4h1v1h-1zM137 4h3v1h-3zM163 4h1v1h-1zM199 4h1v1h-1zM235 4h1v1h-1zM272 4h1v1h-1zM25 5h1v1h-1zM40 5h1v1h-1zM0 6h1v1h-1zM37 6h1v1h-1zM220 6h1v1h-1zM229 6h1v1h-1zM235 6h1v1h-1zM252 6h1v1h-1zM256 6h1v1h-1zM265 6h1v1h-1zM158 7h1v1h-1zM165 7h1v1h-1zM232 8h1v1h-1zM10 9h1v1h-1zM46 9h1v1h-1zM83 9h1v1h-1zM149 9h1v1h-1zM186 9h1v1h-1zM222 9h1v1h-1zM19 10h1v1h-1zM48 10h1v1h-1zM94 10h1v1h-1zM126 10h1v1h-1zM199 10h1v1h-1zM234 10h1v1h-1zM7 11h1v1h-1zM60 11h1v1h-1zM37 12h1v1h-1zM39 12h1v1h-1zM82 12h1v1h-1zM128 12h1v1h-1zM131 12h1v1h-1zM192 12h1v1h-1zM197 12h1v1h-1zM206 12h1v1h-1zM222 12h1v1h-1zM236 12h1v1h-1zM5 13h1v1h-1zM51 13h1v1h-1zM53 13h1v1h-1zM99 13h1v1h-1zM156 13h1v1h-1zM161 13h1v1h-1zM249 13h1v1h-1zM272 13h1v1h-1z"/>
<path fill="#3a04f8" d="M68 0h1v1h-1zM83 0h1v1h-1zM89 0h1v1h-1zM182 0h1v1h-1zM240 0h1v1h-1zM243 0h1v1h-1zM66 1h1v1h-1zM135 1h1v1h-1zM139 1h1v1h-1zM148 1h1v1h-1zM196 1h1v1h-1zM212 1h1v1h-1zM88 2h1v1h-1zM201 2h1v1h-1zM210 2h1v1h-1zM26 3h1v1h-1zM70 4h1v1h-1zM89 5h1v1h-1zM70 6h1v1h-1zM75 6h1v1h-1zM123 6h2v1h-2zM7 7h1v1h-1zM81 7h1v1h-1zM136 7h1v1h-1zM180 7h1v1h-1zM202 7h1v1h-1zM205 7h1v1h-1zM16 9h1v1h-1zM56 9h1v1h-1zM80 9h1v1h-1zM136 9h2v1h-2zM205 9h1v1h-1zM255 9h1v1h-1zM21 10h1v1h-1zM70 10h1v1h-1zM115 10h1v1h-1zM187 10h1v1h-1zM227 10h1v1h-1zM243 10h1v1h-1zM3 12h1v1h-1zM57 12h1v1h-1zM105 12h1v1h-1zM160 12h1v1h-1zM258 12h1v1h-1zM57 13h1v1h-1zM138 13h1v1h-1zM232 13h1v1h-1zM244 13h1v1h-1zM246 13h1v1h-1z"/>
<path fill="#f54339" d="M9 0h1v1h-1zM15 0h1v1h-1zM56 0h1v1h-1zM81 0h1v1h-1zM114 0h1v1h-1zM183 0h1v1h-1zM189 0h1v1h-1zM246 0h1v1h-1zM45 1h1v1h-1zM52 1h1v1h-1zM62 1h1v1h-1zM141 1h1v1h-1zM151 1h1v1h-1zM245 1h1v1h-1zM80 2h1v1h-1zM162 2h1v1h-1zM237 2h1v1h-1zM247 2h1v1h-1zM27 3h1v1h-1zM105 3h1v1h-1zM116 3h1v1h-1zM235 3h1v1h-1zM35 4h1v1h-1zM71 4h1v1h-1zM132 4h3v1h-3zM168 4h1v1h-1zM184 4h1v1h-1zM189 4h1v1h-1zM198 4h1v1h-1zM221 4h1v1h-1zM241 4h1v1h-1zM20 5h1v1h-1zM130 5h1v1h-1zM215 5h1v1h-1zM12 6h1v1h-1zM67 6h1v1h-1zM82 6h1v1h-1zM105 6h1v1h-1zM138 6h1v1h-1zM143 6h1v1h-1zM146 6h3v1h-3zM154 6h1v1h-1zM166 6h1v1h-1zM207 6h1v1h-1zM212 6h1v1h-1zM257 6h1v1h-1zM4 7h1v1h-1zM181 7h1v1h-1zM189 7h1v1h-1zM268 7h1v1h-1zM195 9h1v1h-1zM219 9h1v1h-1zM226 9h1v1h-1zM228 9h1v1h-1zM235 9h1v1h-1zM5 10h1v1h-1zM7 10h1v1h-1zM109 10h1v1h-1zM112 10h1v1h-1zM121 10h1v1h-1zM132 10h2v1h-2zM176 10h1v1h-1zM215 10h1v1h-1zM31 11h1v1h-1zM257 11h1v1h-1zM103 12h2v1h-2zM117 12h1v1h-1zM19 13h1v1h-1zM42 13h1v1h-1zM44 13h1v1h-1zM98 13h1v1h-1zM108 13h1v1h-1zM114 13h1v1h-1zM152 13h1v1h-1zM216 13h1v1h-1zM236 13h1v1h-1zM258 13h1v1h-1z"/>
<path fill="#f08a3d" d="M21 0h1v1h-1zM48 0h1v1h-1zM57 0h1v1h-1zM201 0h1v1h-1zM214 0h1v1h-1zM39 1h1v1h-1zM160 1h1v1h-1zM174 1h1v1h-1zM194 1h1v1h-1zM222 1h1v1h-1zM267 1h2v1h-2zM16 2h1v1h-1zM50 2h1v1h-1zM87 2h1v1h-1zM157 2h1v1h-1zM160 2h1v1h-1zM187 2h1v1h-1zM189 2h1v1h-1zM242 2h1v1h-1zM271 2h1v1h-1zM36 3h1v1h-1zM79 3h1v1h-1zM146 3h1v1h-1zM199 3h1v1h-1zM240 3h1v1h-1zM242 3h3v1h-3zM260 3h1v1h-1zM28 4h1v1h-1zM63 4h1v1h-1zM68 4h1v1h-1zM77 4h1v1h-1zM94 4h1v1h-1zM113 4h1v1h-1zM130 4h1v1h-1zM173 4h1v1h-1zM224 4h1v1h-1zM48 5h1v1h-1zM59 5h1v1h-1zM127 5h1v1h-1zM135 5h1v1h-1zM146 5h1v1h-1zM187 5h1v1h-1zM212 5h1v1h-1zM266 5h1v1h-1zM31 6h1v1h-1zM114 6h1v1h-1zM155 6h1v1h-1zM184 6h1v1h-1zM195 6h1v1h-1zM224 6h1v1h-1zM227 6h1v1h-1zM230 6h1v1h-1zM244 6h1v1h-1zM255 6h1v1h-1zM47 7h1v1h-1zM56 7h1v1h-1zM18 8h1v1h-1zM34 8h1v1h-1zM43 8h1v1h-1zM64 8h1v1h-1zM66 8h1v1h-1zM70 8h1v1h-1zM95 8h1v1h-1zM102 8h1v1h-1zM113 8h1v1h-1zM118 8h1v1h-1zM152 8h1v1h-1zM273 8h1v1h-1zM43 9h1v1h-1zM50 9h1v1h-1zM59 9h1v1h-1zM112 9h1v1h-1zM114 9h1v1h-1zM144 9h1v1h-1zM176 9h2v1h-2zM227 9h1v1h-1zM73 10h1v1h-1zM84 10h1v1h-1zM102 10h1v1h-1zM111 10h1v1h-1zM114 10h1v1h-1zM123 10h1v1h-1zM125 10h1v1h-1zM148 10h1v1h-1zM155 10h1v1h-1zM160 10h1v1h-1zM166 10h1v1h-1zM244 10h1v1h-1zM6 11h1v1h-1zM55 11h2v1h-2zM68 11h1v1h-1zM80 11h1v1h-1zM84 11h1v1h-1zM91 11h1v1h-1zM122 11h1v1h-1zM162 11h1v1h-1zM189 11h1v1h-1zM232 11h1v1h-1zM235 11h1v1h-1zM239 11h1v1h-1zM2 12h1v1h-1zM27 12h1v1h-1zM38 12h1v1h-1zM54 12h1v1h-1zM84 12h1v1h-1zM187 12h1v1h-1zM54 13h1v1h-1zM112 13h2v1h-2zM134 13h1v1h-1zM136 13h1v1h-1zM187 13h1v1h-1zM189 13h1v1h-1zM237 13h1v1h-1zM254 13h2v1h-2z"/>
<path fill="#aa8719" d="M25 0h1v1h-1zM92 0h1v1h-1zM162 0h1v1h-1zM272 0h1v1h-1zM78 1h1v1h-1zM115 1h1v1h-1zM184 1h1v1h-1zM243 1h1v1h-1zM261 1h1v1h-1zM139 2h1v1h-1zM244 2h1v1h-1zM41 3h1v1h-1zM52 3h1v1h-1zM54 3h1v1h-1zM123 3h1v1h-1zM176 3h1v1h-1zM207 3h1v1h-1zM251 3h1v1h-1zM101 4h1v1h-1zM216 4h1v1h-1zM234 4h1v1h-1zM110 5h1v1h-1zM122 5h1v1h-1zM267 5h2v1h-2zM17 6h1v1h-1zM53 6h1v1h-1zM79 6h1v1h-1zM150 6h1v1h-1zM169 6h1v1h-1zM223 6h1v1h-1zM2 7h1v1h-1zM122 7h1v1h-1zM99 8h1v1h-1zM191 9h1v1h-1zM213 9h1v1h-1zM272 9h1v1h-1zM262 10h1v1h-1zM95 11h1v1h-1zM119 11h1v1h-1zM193 12h1v1h-1zM93 13h1v1h-1zM97 13h1v1h-1zM165 13h1v1h-1zM199 13h2v1h-2zM224 13h1v1h-1z"/>
<path fill="#4bacb0" d="M23 0h1v1h-1zM80 0h1v1h-1zM86 0h1v1h-1zM103 0h1v1h-1zM121 0h1v1h-1zM141 0h1v1h-1zM148 0h1v1h-1zM166 0h1v1h-1zM170 0h1v1h-1zM219 0h1v1h-1zM223 0h1v1h-1zM257 0h1v1h-1zM0 1h1v1h-1zM75 1h1v1h-1zM87 1h1v1h-1zM93 1h1v1h-1zM97 1h1v1h-1zM191 1h1v1h-1zM205 1h1v1h-1zM235 1h1v1h-1zM1 2h1v1h-1zM259 2h1v1h-1zM170 3h1v1h-1zM223 3h1v1h-1zM248 3h1v1h-1zM255 3h1v1h-1zM265 3h1v1h-1zM43 4h1v1h-1zM84 4h1v1h-1zM87 4h1v1h-1zM89 4h1v1h-1zM105 4h1v1h-1zM131 4h1v1h-1zM136 4h1v1h-1zM145 4h2v1h-2zM208 4h1v1h-1zM214 4h1v1h-1zM269 4h1v1h-1zM103 5h1v1h-1zM109 5h1v1h-1zM80 6h1v1h-1zM104 6h1v1h-1zM159 6h1v1h-1zM175 6h1v1h-1zM186 6h1v1h-1zM219 6h1v1h-1zM249 6h1v1h-1zM0 7h1v1h-1zM6 7h1v1h-1zM43 7h1v1h-1zM168 7h1v1h-1zM178 7h1v1h-1zM247 7h1v1h-1zM251 7h2v1h-2zM100 8h1v1h-1zM160 8h1v1h-1zM151 9h1v1h-1zM175 9h1v1h-1zM17 10h1v1h-1zM38 10h1v1h-1zM151 10h1v1h-1zM157 10h1v1h-1zM202 10h1v1h-1zM258 10h1v1h-1zM0 11h1v1h-1zM201 11h1v1h-1zM266 11h1v1h-1zM73 12h2v1h-2zM135 12h1v1h-1zM168 12h1v1h-1zM237 12h1v1h-1zM241 12h1v1h-1zM18 13h1v1h-1zM30 13h1v1h-1zM59 13h1v1h-1zM256 13h1v1h-1zM259 13h1v1h-1z"/>
<path fill="#a68c58" d="M129 0h1v1h-1zM159 0h1v1h-1zM188 0h1v1h-1zM191 0h1v1h-1zM224 0h1v1h-1zM227 0h1v1h-1zM268 0h1v1h-1zM8 1h1v1h-1zM163 1h1v1h-1zM190 1h1v1h-1zM248 1h2v1h-2zM263 1h1v1h-1zM32 2h1v1h-1zM129 2h1v1h-1zM138 2h1v1h-1zM145 2h2v1h-2zM170 2h1v1h-1zM174 2h1v1h-1zM180 2h1v1h-1zM240 2h1v1h-1zM272 2h1v1h-1zM42 3h1v1h-1zM111 3h1v1h-1zM119 3h1v1h-1zM133 3h1v1h-1zM152 3h2v1h-2zM175 3h1v1h-1zM196 3h1v1h-1zM261 3h1v1h-1zM2 4h1v1h-1zM7 4h1v1h-1zM56 4h1v1h-1zM80 4h1v1h-1zM86 4h1v1h-1zM92 4h1v1h-1zM247 4h1v1h-1zM264 4h1v1h-1zM1 5h1v1h-1zM16 5h2v1h-2zM23 5h1v1h-1zM57 5h1v1h-1zM64 5h2v1h-2zM97 5h1v1h-1zM99 5h1v1h-1zM162 5h1v1h-1zM227 5h1v1h-1zM257 5h1v1h-1zM264 5h1v1h-1zM15 6h1v1h-1zM208 6h1v1h-1zM243 6h1v1h-1zM253 6h1v1h-1zM14 7h2v1h-2zM19 7h1v1h-1zM58 7h1v1h-1zM83 7h1v1h-1zM160 7h1v1h-1zM195 7h1v1h-1zM210 7h1v1h-1zM229 7h1v1h-1zM250 7h1v1h-1zM0 8h2v1h-2zM15 8h1v1h-1zM17 8h1v1h-1zM19 8h1v1h-1zM31 8h1v1h-1zM50 8h1v1h-1zM69 8h1v1h-1zM71 8h1v1h-1zM121 8h2v1h-2zM137 8h1v1h-1zM167 8h1v1h-1zM178 8h1v1h-1zM200 8h1v1h-1zM210 8h1v1h-1zM250 8h1v1h-1zM8 9h1v1h-1zM19 9h1v1h-1zM91 9h1v1h-1zM106 9h1v1h-1zM169 9h1v1h-1zM249 9h2v1h-2zM3 10h1v1h-1zM42 10h1v1h-1zM271 10h1v1h-1zM29 11h1v1h-1zM58 11h1v1h-1zM78 11h1v1h-1zM106 11h1v1h-1zM113 11h3v1h-3zM170 11h1v1h-1zM64 12h1v1h-1zM143 12h1v1h-1zM176 12h1v1h-1zM179 12h1v1h-1zM181 12h1v1h-1zM188 12h1v1h-1zM273 12h1v1h-1zM110 13h1v1h-1zM168 13h1v1h-1zM185 13h1v1h-1zM206 13h1v1h-1zM251 13h1v1h-1z"/>
<path fill="#d9856b" d="M36 0h1v1h-1zM85 0h1v1h-1zM202 0h1v1h-1zM213 2h1v1h-1zM144 4h1v1h-1zM160 4h1v1h-1zM252 4h1v1h-1zM189 5h1v1h-1zM19 6h1v1h-1zM115 6h1v1h-1zM117 6h1v1h-1zM204 6h1v1h-1zM213 6h1v1h-1zM268 6h1v1h-1zM30 7h1v1h-1zM69 7h1v1h-1zM85 7h1v1h-1zM21 9h1v1h-1zM101 9h1v1h-1zM124 9h1v1h-1zM254 9h1v1h-1zM81 10h1v1h-1zM140 10h1v1h-1zM213 10h1v1h-1zM49 12h1v1h-1zM133 12h1v1h-1zM220 12h1v1h-1zM149 13h1v1h-1zM204 13h1v1h-1z"/>
<path fill="#ef3e93" d="M38 0h1v1h-1zM165 0h1v1h-1zM237 0h1v1h-1zM88 1h1v1h-1zM120 1h1v1h-1zM125 1h1v1h-1zM153 1h1v1h-1zM173 1h1v1h-1zM202 1h1v1h-1zM0 2h1v1h-1zM7 2h2v1h-2zM25 2h1v1h-1zM27 2h1v1h-1zM64 2h2v1h-2zM81 2h1v1h-1zM107 2h1v1h-1zM185 2h2v1h-2zM212 2h1v1h-1zM219 2h1v1h-1zM233 2h1v1h-1zM255 2h1v1h-1zM15 3h1v1h-1zM35 3h1v1h-1zM61 3h1v1h-1zM68 3h1v1h-1zM102 3h1v1h-1zM187 3h1v1h-1zM271 3h1v1h-1zM46 4h1v1h-1zM95 4h1v1h-1zM98 4h1v1h-1zM175 4h1v1h-1zM194 4h1v1h-1zM212 4h1v1h-1zM223 4h1v1h-1zM240 4h1v1h-1zM34 5h1v1h-1zM36 5h1v1h-1zM81 5h1v1h-1zM120 5h1v1h-1zM128 5h1v1h-1zM134 5h1v1h-1zM157 5h1v1h-1zM210 5h1v1h-1zM219 5h1v1h-1zM234 5h2v1h-2zM241 5h1v1h-1zM258 5h1v1h-1zM7 6h1v1h-1zM25 6h1v1h-1zM27 6h1v1h-1zM72 6h1v1h-1zM87 6h2v1h-2zM90 6h1v1h-1zM93 6h1v1h-1zM214 6h1v1h-1zM105 7h1v1h-1zM179 7h1v1h-1zM57 8h1v1h-1zM128 8h2v1h-2zM180 8h1v1h-1zM192 8h1v1h-1zM228 8h1v1h-1zM262 8h1v1h-1zM23 9h2v1h-2zM27 9h1v1h-1zM62 9h1v1h-1zM93 9h1v1h-1zM239 9h1v1h-1zM90 10h1v1h-1zM194 10h1v1h-1zM1 11h1v1h-1zM36 11h1v1h-1zM71 11h1v1h-1zM136 11h2v1h-2zM161 11h1v1h-1zM168 11h1v1h-1zM264 11h1v1h-1zM0 12h1v1h-1zM157 12h1v1h-1zM45 13h1v1h-1zM79 13h1v1h-1zM107 13h1v1h-1zM180 13h1v1h-1zM241 13h1v1h-1z"/>
<path fill="#0889b2" d="M208 0h1v1h-1zM263 0h1v1h-1zM7 1h1v1h-1zM64 1h2v1h-2zM185 1h1v1h-1zM189 1h1v1h-1zM247 1h1v1h-1zM3 2h1v1h-1zM10 2h1v1h-1zM46 2h1v1h-1zM63 2h1v1h-1zM78 2h1v1h-1zM94 2h1v1h-1zM112 2h1v1h-1zM151 2h1v1h-1zM173 2h1v1h-1zM218 2h1v1h-1zM71 3h1v1h-1zM76 3h1v1h-1zM85 3h1v1h-1zM93 3h1v1h-1zM121 3h1v1h-1zM137 3h1v1h-1zM149 3h1v1h-1zM177 3h1v1h-1zM185 3h1v1h-1zM218 3h1v1h-1zM91 4h1v1h-1zM102 4h1v1h-1zM115 4h1v1h-1zM154 4h1v1h-1zM196 4h1v1h-1zM245 4h1v1h-1zM12 5h1v1h-1zM46 5h2v1h-2zM71 5h1v1h-1zM100 5h2v1h-2zM106 5h1v1h-1zM148 5h1v1h-1zM151 5h1v1h-1zM169 5h1v1h-1zM192 5h1v1h-1zM242 5h1v1h-1zM245 5h1v1h-1zM247 5h1v1h-1zM254 5h1v1h-1zM6 6h1v1h-1zM32 6h1v1h-1zM78 6h1v1h-1zM94 6h1v1h-1zM113 6h1v1h-1zM121 6h2v1h-2zM129 6h1v1h-1zM149 6h1v1h-1zM201 6h1v1h-1zM210 6h1v1h-1zM37 7h1v1h-1zM117 7h1v1h-1zM233 7h1v1h-1zM239 7h1v1h-1zM246 7h1v1h-1zM39 8h1v1h-1zM88 8h1v1h-1zM155 8h1v1h-1zM162 8h1v1h-1zM237 8h1v1h-1zM247 8h1v1h-1zM255 8h1v1h-1zM267 8h1v1h-1zM1 9h1v1h-1zM70 9h1v1h-1zM138 9h1v1h-1zM208 9h1v1h-1zM241 9h1v1h-1zM258 9h1v1h-1zM15 10h1v1h-1zM105 10h1v1h-1zM154 10h1v1h-1zM204 10h1v1h-1zM230 10h1v1h-1zM264 10h1v1h-1zM272 10h1v1h-1zM12 11h1v1h-1zM101 11h1v1h-1zM132 11h1v1h-1zM185 11h1v1h-1zM212 11h2v1h-2zM217 11h2v1h-2zM234 11h1v1h-1zM251 11h1v1h-1zM254 11h1v1h-1zM260 11h1v1h-1zM268 11h1v1h-1zM44 12h1v1h-1zM59 12h1v1h-1zM94 12h1v1h-1zM162 12h1v1h-1zM204 12h1v1h-1zM227 12h1v1h-1zM243 12h1v1h-1zM256 12h1v1h-1zM2 13h1v1h-1zM102 13h1v1h-1zM119 13h2v1h-2zM129 13h1v1h-1zM213 13h1v1h-1zM238 13h1v1h-1zM260 13h1v1h-1z"/>
<path fill="#5aba3a" d="M64 0h1v1h-1zM70 0h1v1h-1zM134 0h1v1h-1zM269 0h1v1h-1zM10 1h1v1h-1zM127 1h1v1h-1zM143 1h1v1h-1zM22 2h1v1h-1zM59 2h1v1h-1zM100 2h1v1h-1zM149 2h1v1h-1zM205 2h1v1h-1zM230 2h1v1h-1zM263 2h1v1h-1zM45 3h1v1h-1zM127 3h1v1h-1zM143 3h1v1h-1zM161 3h1v1h-1zM163 3h1v1h-1zM234 3h1v1h-1zM38 4h1v1h-1zM197 4h1v1h-1zM232 4h1v1h-1zM260 4h1v1h-1zM66 5h1v1h-1zM84 5h1v1h-1zM87 5h1v1h-1zM194 5h1v1h-1zM221 5h1v1h-1zM262 5h1v1h-1zM269 5h1v1h-1zM47 6h1v1h-1zM126 6h1v1h-1zM18 7h1v1h-1zM28 7h1v1h-1zM59 7h1v1h-1zM75 7h1v1h-1zM141 7h1v1h-1zM143 7h1v1h-1zM22 8h1v1h-1zM189 8h1v1h-1zM205 8h1v1h-1zM222 8h1v1h-1zM256 8h2v1h-2zM260 8h1v1h-1zM20 9h1v1h-1zM53 9h1v1h-1zM68 9h1v1h-1zM100 9h1v1h-1zM130 9h1v1h-1zM161 9h1v1h-1zM230 9h1v1h-1zM4 10h1v1h-1zM50 10h1v1h-1zM77 10h1v1h-1zM86 10h1v1h-1zM119 10h1v1h-1zM180 10h1v1h-1zM192 10h2v1h-2zM214 10h1v1h-1zM251 10h1v1h-1zM48 12h1v1h-1zM93 12h1v1h-1zM96 12h2v1h-2zM116 12h1v1h-1zM218 12h2v1h-2zM261 12h1v1h-1zM6 13h1v1h-1zM24 13h1v1h-1zM89 13h1v1h-1zM166 13h1v1h-1zM210 13h1v1h-1zM228 13h1v1h-1z"/>
<path fill="#f203d0" d="M69 0h1v1h-1zM110 0h1v1h-1zM115 0h1v1h-1zM122 0h1v1h-1zM149 0h1v1h-1zM151 0h1v1h-1zM251 0h1v1h-1zM258 0h1v1h-1zM11 1h1v1h-1zM18 1h1v1h-1zM25 1h1v1h-1zM35 1h1v1h-1zM86 1h1v1h-1zM105 1h1v1h-1zM171 1h1v1h-1zM223 1h1v1h-1zM230 1h1v1h-1zM273 1h1v1h-1zM6 2h1v1h-1zM35 2h1v1h-1zM49 2h1v1h-1zM57 2h1v1h-1zM99 2h1v1h-1zM156 2h1v1h-1zM202 2h1v1h-1zM208 2h1v1h-1zM250 2h1v1h-1zM32 3h2v1h-2zM37 3h1v1h-1zM64 3h1v1h-1zM100 3h1v1h-1zM106 3h1v1h-1zM180 3h1v1h-1zM214 3h1v1h-1zM241 3h1v1h-1zM5 4h1v1h-1zM34 4h1v1h-1zM209 4h1v1h-1zM236 4h1v1h-1zM239 4h1v1h-1zM251 4h1v1h-1zM268 4h1v1h-1zM19 5h1v1h-1zM39 5h1v1h-1zM131 5h1v1h-1zM155 5h1v1h-1zM172 5h1v1h-1zM188 5h1v1h-1zM191 5h1v1h-1zM231 5h1v1h-1zM261 5h1v1h-1zM68 6h1v1h-1zM134 6h1v1h-1zM183 6h1v1h-1zM225 6h1v1h-1zM245 6h1v1h-1zM1 7h1v1h-1zM8 7h1v1h-1zM60 7h1v1h-1zM73 7h1v1h-1zM86 7h1v1h-1zM102 7h1v1h-1zM134 7h1v1h-1zM157 7h1v1h-1zM183 7h1v1h-1zM248 7h1v1h-1zM2 8h1v1h-1zM35 8h1v1h-1zM38 8h1v1h-1zM44 8h1v1h-1zM65 8h1v1h-1zM94 8h1v1h-1zM101 8h1v1h-1zM117 8h1v1h-1zM133 8h2v1h-2zM171 8h3v1h-3zM182 8h1v1h-1zM184 8h2v1h-2zM230 8h1v1h-1zM240 8h1v1h-1zM253 8h1v1h-1zM266 8h1v1h-1zM38 9h1v1h-1zM51 9h1v1h-1zM55 9h1v1h-1zM81 9h1v1h-1zM115 9h1v1h-1zM123 9h1v1h-1zM236 9h1v1h-1zM18 10h1v1h-1zM95 10h1v1h-1zM152 10h1v1h-1zM156 10h1v1h-1zM198 10h1v1h-1zM226 10h1v1h-1zM242 10h1v1h-1zM30 11h1v1h-1zM39 11h1v1h-1zM61 11h1v1h-1zM65 11h1v1h-1zM69 11h1v1h-1zM83 11h1v1h-1zM121 11h1v1h-1zM180 11h2v1h-2zM202 11h1v1h-1zM219 11h2v1h-2zM222 11h1v1h-1zM236 11h1v1h-1zM262 11h1v1h-1zM12 12h1v1h-1zM47 12h1v1h-1zM53 12h1v1h-1zM76 12h2v1h-2zM122 12h1v1h-1zM150 12h1v1h-1zM171 12h2v1h-2zM198 12h1v1h-1zM207 12h1v1h-1zM211 12h1v1h-1zM214 12h1v1h-1zM217 12h1v1h-1zM27 13h1v1h-1zM105 13h1v1h-1zM126 13h1v1h-1zM135 13h1v1h-1zM169 13h1v1h-1zM188 13h1v1h-1zM203 13h1v1h-1zM229 13h2v1h-2zM250 13h1v1h-1z"/>
<path fill="#04f17c" d="M7 0h1v1h-1zM28 0h1v1h-1zM39 0h1v1h-1zM73 0h1v1h-1zM95 0h1v1h-1zM97 0h1v1h-1zM126 0h2v1h-2zM136 0h1v1h-1zM163 0h1v1h-1zM195 0h1v1h-1zM247 0h2v1h-2zM5 1h1v1h-1zM27 1h1v1h-1zM49 1h1v1h-1zM71 1h1v1h-1zM124 1h1v1h-1zM145 1h1v1h-1zM186 1h1v1h-1zM199 1h2v1h-2zM242 1h1v1h-1zM252 1h1v1h-1zM266 1h1v1h-1zM13 2h1v1h-1zM154 2h1v1h-1zM22 3h1v1h-1zM53 3h1v1h-1zM55 3h1v1h-1zM75 3h1v1h-1zM86 3h1v1h-1zM103 3h2v1h-2zM136 3h1v1h-1zM157 3h1v1h-1zM179 3h1v1h-1zM186 3h1v1h-1zM202 3h1v1h-1zM226 3h2v1h-2zM13 4h1v1h-1zM40 4h1v1h-1zM48 4h1v1h-1zM50 4h2v1h-2zM73 4h1v1h-1zM125 4h1v1h-1zM150 4h1v1h-1zM153 4h1v1h-1zM166 4h1v1h-1zM185 4h2v1h-2zM230 4h1v1h-1zM262 4h1v1h-1zM9 5h1v1h-1zM38 5h1v1h-1zM73 5h1v1h-1zM153 5h2v1h-2zM24 6h1v1h-1zM40 6h1v1h-1zM44 6h1v1h-1zM56 6h1v1h-1zM131 6h1v1h-1zM181 6h1v1h-1zM240 6h2v1h-2zM11 7h1v1h-1zM49 7h1v1h-1zM57 7h1v1h-1zM66 7h1v1h-1zM104 7h1v1h-1zM137 7h1v1h-1zM166 7h1v1h-1zM170 7h1v1h-1zM221 7h1v1h-1zM228 7h1v1h-1zM245 7h1v1h-1zM261 7h1v1h-1zM142 8h2v1h-2zM224 8h1v1h-1zM238 8h1v1h-1zM258 8h1v1h-1zM268 8h1v1h-1zM47 9h1v1h-1zM71 9h2v1h-2zM179 9h1v1h-1zM185 9h1v1h-1zM218 9h1v1h-1zM263 9h1v1h-1zM267 9h2v1h-2zM55 10h1v1h-1zM75 10h1v1h-1zM143 10h1v1h-1zM162 10h1v1h-1zM203 10h1v1h-1zM229 10h1v1h-1zM253 10h2v1h-2zM20 11h1v1h-1zM88 11h1v1h-1zM118 11h1v1h-1zM133 11h1v1h-1zM139 11h1v1h-1zM154 11h1v1h-1zM174 11h1v1h-1zM230 11h1v1h-1zM244 11h1v1h-1zM252 11h1v1h-1zM5 12h1v1h-1zM10 12h1v1h-1zM89 12h2v1h-2zM148 12h1v1h-1zM201 12h1v1h-1zM242 12h1v1h-1zM252 12h1v1h-1zM268 12h1v1h-1zM7 13h1v1h-1zM22 13h1v1h-1zM49 13h1v1h-1zM131 13h1v1h-1zM147 13h1v1h-1zM155 13h1v1h-1zM197 13h1v1h-1zM222 13h1v1h-1z"/>
<path fill="#af4f5f" d="M16 0h1v1h-1zM96 0h1v1h-1zM106 0h1v1h-1zM142 0h2v1h-2zM176 0h1v1h-1zM91 1h1v1h-1zM180 1h1v1h-1zM187 1h1v1h-1zM23 2h1v1h-1zM103 2h1v1h-1zM105 2h1v1h-1zM231 2h1v1h-1zM241 2h1v1h-1zM40 3h1v1h-1zM94 3h1v1h-1zM114 3h1v1h-1zM128 3h1v1h-1zM259 3h1v1h-1zM59 4h1v1h-1zM200 4h1v1h-1zM85 5h1v1h-1zM125 5h1v1h-1zM263 5h1v1h-1zM39 6h1v1h-1zM59 6h1v1h-1zM198 6h1v1h-1zM248 6h1v1h-1zM32 7h1v1h-1zM38 7h1v1h-1zM72 7h1v1h-1zM95 7h1v1h-1zM223 7h1v1h-1zM234 7h1v1h-1zM244 7h1v1h-1zM48 8h1v1h-1zM146 8h1v1h-1zM13 9h1v1h-1zM26 9h1v1h-1zM39 9h1v1h-1zM103 9h1v1h-1zM172 9h1v1h-1zM200 9h1v1h-1zM210 9h1v1h-1zM217 9h1v1h-1zM240 9h1v1h-1zM260 9h1v1h-1zM9 10h1v1h-1zM47 10h1v1h-1zM164 10h1v1h-1zM167 10h1v1h-1zM218 10h1v1h-1zM237 10h1v1h-1zM177 11h1v1h-1zM233 11h1v1h-1zM247 11h1v1h-1zM6 12h1v1h-1zM34 12h1v1h-1zM43 12h1v1h-1zM50 12h1v1h-1zM142 12h1v1h-1zM159 12h1v1h-1zM161 12h1v1h-1zM163 12h1v1h-1zM202 12h1v1h-1zM221 12h1v1h-1zM234 12h1v1h-1zM257 12h1v1h-1zM263 12h1v1h-1zM0 13h1v1h-1zM52 13h1v1h-1zM58 13h1v1h-1zM84 13h1v1h-1zM159 13h1v1h-1zM214 13h1v1h-1zM234 13h1v1h-1z"/>
<path fill="#f5b808" d="M10 0h1v1h-1zM75 0h1v1h-1zM137 0h1v1h-1zM140 0h1v1h-1zM146 0h2v1h-2zM161 0h1v1h-1zM179 0h1v1h-1zM184 0h1v1h-1zM203 0h1v1h-1zM57 1h1v1h-1zM208 1h2v1h-2zM211 1h1v1h-1zM217 1h1v1h-1zM240 1h1v1h-1zM255 1h1v1h-1zM29 2h1v1h-1zM86 2h1v1h-1zM93 2h1v1h-1zM193 2h1v1h-1zM248 2h1v1h-1zM11 3h1v1h-1zM118 4h1v1h-1zM126 4h1v1h-1zM156 4h2v1h-2zM178 4h1v1h-1zM207 4h1v1h-1zM220 4h1v1h-1zM5 5h1v1h-1zM41 5h1v1h-1zM68 5h1v1h-1zM77 5h1v1h-1zM91 5h1v1h-1zM138 5h1v1h-1zM161 5h1v1h-1zM224 5h1v1h-1zM237 5h1v1h-1zM4 6h1v1h-1zM77 6h1v1h-1zM100 6h1v1h-1zM162 6h1v1h-1zM216 6h1v1h-1zM70 7h1v1h-1zM90 7h1v1h-1zM112 7h1v1h-1zM139 7h1v1h-1zM199 7h1v1h-1zM10 8h1v1h-1zM41 8h1v1h-1zM78 8h1v1h-1zM91 8h3v1h-3zM126 8h1v1h-1zM159 8h1v1h-1zM190 8h1v1h-1zM214 8h1v1h-1zM220 8h1v1h-1zM226 8h1v1h-1zM233 8h1v1h-1zM111 9h1v1h-1zM133 9h1v1h-1zM152 9h1v1h-1zM160 9h1v1h-1zM224 9h1v1h-1zM52 10h1v1h-1zM89 10h1v1h-1zM98 10h3v1h-3zM113 10h1v1h-1zM138 10h1v1h-1zM195 10h1v1h-1zM212 10h1v1h-1zM216 10h1v1h-1zM225 10h1v1h-1zM232 10h1v1h-1zM10 11h1v1h-1zM22 11h1v1h-1zM41 11h1v1h-1zM43 11h4v1h-4zM50 11h1v1h-1zM75 11h1v1h-1zM96 11h1v1h-1zM128 11h1v1h-1zM148 11h1v1h-1zM160 11h1v1h-1zM167 11h1v1h-1zM190 11h2v1h-2zM207 11h1v1h-1zM211 11h1v1h-1zM258 11h1v1h-1zM1 12h1v1h-1zM29 12h1v1h-1zM102 12h1v1h-1zM123 12h1v1h-1zM132 12h1v1h-1zM167 12h1v1h-1zM185 12h1v1h-1zM244 12h1v1h-1zM254 12h1v1h-1zM31 13h1v1h-1zM71 13h1v1h-1zM154 13h1v1h-1zM162 13h2v1h-2zM182 13h1v1h-1z"/>
<path fill="#f95c6f" d="M1 0h1v1h-1zM60 0h1v1h-1zM211 0h1v1h-1zM12 1h1v1h-1zM14 1h1v1h-1zM42 1h1v1h-1zM58 1h1v1h-1zM76 1h1v1h-1zM119 1h1v1h-1zM133 1h1v1h-1zM142 1h1v1h-1zM158 1h1v1h-1zM172 1h1v1h-1zM236 1h1v1h-1zM5 2h1v1h-1zM58 2h1v1h-1zM92 2h1v1h-1zM101 2h1v1h-1zM110 2h1v1h-1zM163 2h1v1h-1zM188 2h1v1h-1zM220 2h1v1h-1zM252 2h1v1h-1zM254 2h1v1h-1zM256 2h1v1h-1zM28 3h1v1h-1zM101 3h1v1h-1zM213 3h1v1h-1zM222 3h1v1h-1zM236 3h1v1h-1zM254 3h1v1h-1zM266 3h1v1h-1zM238 4h1v1h-1zM60 5h1v1h-1zM67 5h1v1h-1zM69 5h1v1h-1zM83 5h1v1h-1zM156 5h1v1h-1zM183 5h1v1h-1zM211 5h1v1h-1zM236 5h1v1h-1zM101 7h1v1h-1zM37 8h1v1h-1zM58 8h1v1h-1zM110 8h1v1h-1zM158 8h1v1h-1zM170 8h1v1h-1zM181 8h1v1h-1zM197 8h1v1h-1zM213 8h1v1h-1zM229 8h1v1h-1zM231 8h1v1h-1zM3 9h1v1h-1zM37 9h1v1h-1zM197 9h1v1h-1zM51 10h1v1h-1zM53 10h1v1h-1zM117 10h1v1h-1zM183 10h1v1h-1zM220 10h1v1h-1zM247 10h1v1h-1zM76 11h1v1h-1zM85 11h1v1h-1zM90 11h1v1h-1zM103 11h1v1h-1zM156 11h1v1h-1zM179 11h1v1h-1zM199 11h1v1h-1zM272 11h1v1h-1zM149 12h1v1h-1zM154 12h1v1h-1zM106 13h1v1h-1z"/>
<path fill="#5ceb6b" d="M19 0h1v1h-1zM53 0h1v1h-1zM124 0h1v1h-1zM233 0h1v1h-1zM236 0h1v1h-1zM77 1h1v1h-1zM83 1h1v1h-1zM159 1h1v1h-1zM227 1h1v1h-1zM12 3h1v1h-1zM31 3h1v1h-1zM74 3h1v1h-1zM200 3h1v1h-1zM99 4h1v1h-1zM158 4h1v1h-1zM174 4h1v1h-1zM211 4h1v1h-1zM219 4h1v1h-1zM228 4h1v1h-1zM26 5h1v1h-1zM160 5h1v1h-1zM216 5h1v1h-1zM259 5h1v1h-1zM66 6h1v1h-1zM83 6h1v1h-1zM137 6h1v1h-1zM153 6h1v1h-1zM174 6h1v1h-1zM205 6h1v1h-1zM65 7h1v1h-1zM67 7h1v1h-1zM94 7h1v1h-1zM103 7h1v1h-1zM107 7h1v1h-1zM214 7h1v1h-1zM235 7h1v1h-1zM80 8h1v1h-1zM108 8h1v1h-1zM130 8h1v1h-1zM157 8h1v1h-1zM191 8h1v1h-1zM28 9h1v1h-1zM42 9h1v1h-1zM8 10h1v1h-1zM177 10h1v1h-1zM207 10h1v1h-1zM51 11h1v1h-1zM21 12h1v1h-1zM51 12h2v1h-2zM209 12h1v1h-1zM21 13h1v1h-1zM69 13h1v1h-1zM76 13h1v1h-1zM121 13h1v1h-1zM219 13h1v1h-1z"/>
<path fill="#8a1fed" d="M8 0h1v1h-1zM43 0h1v1h-1zM74 0h1v1h-1zM78 0h1v1h-1zM82 0h1v1h-1zM154 0h1v1h-1zM167 0h2v1h-2zM190 0h1v1h-1zM197 0h1v1h-1zM199 0h1v1h-1zM20 1h1v1h-1zM33 1h1v1h-1zM51 1h1v1h-1zM72 1h1v1h-1zM103 1h1v1h-1zM140 1h1v1h-1zM162 1h1v1h-1zM177 1h1v1h-1zM198 1h1v1h-1zM225 1h1v1h-1zM14 2h1v1h-1zM21 2h1v1h-1zM56 2h1v1h-1zM75 2h1v1h-1zM122 2h1v1h-1zM198 2h1v1h-1zM206 2h1v1h-1zM224 2h1v1h-1zM229 2h1v1h-1zM67 3h1v1h-1zM73 3h1v1h-1zM80 3h1v1h-1zM135 3h1v1h-1zM160 3h1v1h-1zM209 3h1v1h-1zM220 3h1v1h-1zM272 3h1v1h-1zM17 4h1v1h-1zM60 4h1v1h-1zM67 4h1v1h-1zM76 4h1v1h-1zM82 4h2v1h-2zM244 4h1v1h-1zM249 4h1v1h-1zM256 4h1v1h-1zM261 4h1v1h-1zM14 5h1v1h-1zM49 5h1v1h-1zM51 5h1v1h-1zM102 5h1v1h-1zM204 5h1v1h-1zM256 5h1v1h-1zM3 6h1v1h-1zM22 6h1v1h-1zM35 6h1v1h-1zM38 6h1v1h-1zM74 6h1v1h-1zM152 6h1v1h-1zM171 6h1v1h-1zM199 6h1v1h-1zM254 6h1v1h-1zM259 6h1v1h-1zM270 6h1v1h-1zM54 7h1v1h-1zM76 7h1v1h-1zM113 7h1v1h-1zM128 7h2v1h-2zM146 7h1v1h-1zM211 7h1v1h-1zM255 7h1v1h-1zM49 8h1v1h-1zM72 8h1v1h-1zM83 8h1v1h-1zM97 8h1v1h-1zM138 8h1v1h-1zM176 8h1v1h-1zM211 8h1v1h-1zM249 8h1v1h-1zM270 8h1v1h-1zM32 9h2v1h-2zM44 9h1v1h-1zM58 9h1v1h-1zM67 9h1v1h-1zM105 9h1v1h-1zM113 9h1v1h-1zM141 9h1v1h-1zM143 9h1v1h-1zM189 9h1v1h-1zM242 9h1v1h-1zM248 9h1v1h-1zM20 10h1v1h-1zM26 10h1v1h-1zM39 10h2v1h-2zM68 10h1v1h-1zM71 10h1v1h-1zM76 10h1v1h-1zM124 10h1v1h-1zM145 10h1v1h-1zM159 10h1v1h-1zM172 10h1v1h-1zM178 10h1v1h-1zM26 11h1v1h-1zM62 11h1v1h-1zM110 11h1v1h-1zM165 11h1v1h-1zM195 11h1v1h-1zM271 11h1v1h-1zM61 12h1v1h-1zM70 12h1v1h-1zM78 12h1v1h-1zM130 12h1v1h-1zM170 12h1v1h-1zM194 12h2v1h-2zM28 13h1v1h-1zM80 13h3v1h-3zM91 13h1v1h-1zM125 13h1v1h-1zM172 13h1v1h-1zM179 13h1v1h-1zM186 13h1v1h-1zM215 13h1v1h-1z"/>
<path fill="#b5c33b" d="M2 0h1v1h-1zM32 0h1v1h-1zM40 0h1v1h-1zM104 0h1v1h-1zM153 0h1v1h-1zM169 0h1v1h-1zM260 0h1v1h-1zM43 1h1v1h-1zM50 1h1v1h-1zM54 1h1v1h-1zM102 1h1v1h-1zM123 1h1v1h-1zM253 1h1v1h-1zM11 2h1v1h-1zM267 2h1v1h-1zM0 3h1v1h-1zM13 3h1v1h-1zM191 3h1v1h-1zM194 3h1v1h-1zM219 3h1v1h-1zM225 3h1v1h-1zM232 3h1v1h-1zM252 3h1v1h-1zM4 4h1v1h-1zM27 4h1v1h-1zM65 4h1v1h-1zM79 4h1v1h-1zM152 4h1v1h-1zM162 4h1v1h-1zM13 5h1v1h-1zM75 5h1v1h-1zM98 5h1v1h-1zM116 5h1v1h-1zM175 5h1v1h-1zM205 5h1v1h-1zM255 5h1v1h-1zM73 6h1v1h-1zM96 6h1v1h-1zM130 6h1v1h-1zM180 6h1v1h-1zM182 6h1v1h-1zM203 6h1v1h-1zM239 6h1v1h-1zM63 7h1v1h-1zM187 7h1v1h-1zM11 8h1v1h-1zM150 8h1v1h-1zM201 8h2v1h-2zM244 8h1v1h-1zM271 8h1v1h-1zM29 9h1v1h-1zM61 9h1v1h-1zM86 9h1v1h-1zM150 9h1v1h-1zM157 9h1v1h-1zM244 9h1v1h-1zM264 9h1v1h-1zM24 10h1v1h-1zM45 10h1v1h-1zM54 10h1v1h-1zM79 10h1v1h-1zM116 10h1v1h-1zM169 10h1v1h-1zM191 10h1v1h-1zM217 10h1v1h-1zM228 10h1v1h-1zM11 11h1v1h-1zM24 11h1v1h-1zM32 11h2v1h-2zM146 11h1v1h-1zM175 11h1v1h-1zM237 11h1v1h-1zM253 11h1v1h-1zM63 12h1v1h-1zM68 12h1v1h-1zM112 12h1v1h-1zM223 12h1v1h-1zM239 12h1v1h-1zM251 12h1v1h-1zM47 13h1v1h-1zM50 13h1v1h-1zM66 13h1v1h-1zM116 13h1v1h-1zM269 13h1v1h-1z"/>
<path fill="#05ba7c" d="M41 0h1v1h-1zM63 0h1v1h-1zM84 0h1v1h-1zM128 0h1v1h-1zM145 0h1v1h-1zM177 0h1v1h-1zM217 0h1v1h-1zM249 0h2v1h-2zM67 1h1v1h-1zM94 1h1v1h-1zM117 1h1v1h-1zM136 1h1v1h-1zM30 2h1v1h-1zM53 2h1v1h-1zM55 2h1v1h-1zM73 2h1v1h-1zM96 2h1v1h-1zM115 2h1v1h-1zM117 2h1v1h-1zM120 2h1v1h-1zM137 2h1v1h-1zM159 2h1v1h-1zM166 2h1v1h-1zM191 2h1v1h-1zM197 2h1v1h-1zM207 2h1v1h-1zM226 2h1v1h-1zM265 2h2v1h-2zM273 2h1v1h-1zM50 3h2v1h-2zM62 3h2v1h-2zM70 3h1v1h-1zM81 3h1v1h-1zM88 3h1v1h-1zM98 3h1v1h-1zM192 3h1v1h-1zM18 4h1v1h-1zM96 4h2v1h-2zM170 4h1v1h-1zM190 4h1v1h-1zM263 4h1v1h-1zM0 5h1v1h-1zM3 5h1v1h-1zM7 5h1v1h-1zM15 5h1v1h-1zM24 5h1v1h-1zM58 5h1v1h-1zM94 5h1v1h-1zM158 5h1v1h-1zM217 5h2v1h-2zM239 5h1v1h-1zM246 5h1v1h-1zM14 6h1v1h-1zM125 6h1v1h-1zM151 6h1v1h-1zM160 6h1v1h-1zM218 6h1v1h-1zM35 7h2v1h-2zM77 7h1v1h-1zM80 7h1v1h-1zM163 7h1v1h-1zM14 8h1v1h-1zM46 8h1v1h-1zM60 8h1v1h-1zM62 8h1v1h-1zM168 8h1v1h-1zM235 8h2v1h-2zM40 9h1v1h-1zM57 9h1v1h-1zM162 9h1v1h-1zM181 9h1v1h-1zM193 9h1v1h-1zM201 9h1v1h-1zM25 10h1v1h-1zM34 10h2v1h-2zM59 10h2v1h-2zM128 10h1v1h-1zM188 10h1v1h-1zM256 10h2v1h-2zM25 11h1v1h-1zM28 11h1v1h-1zM38 11h1v1h-1zM111 11h1v1h-1zM143 11h1v1h-1zM159 11h1v1h-1zM187 11h1v1h-1zM203 11h2v1h-2zM214 11h1v1h-1zM241 11h1v1h-1zM267 11h1v1h-1zM270 11h1v1h-1zM55 12h1v1h-1zM152 12h1v1h-1zM32 13h1v1h-1zM85 13h1v1h-1zM137 13h1v1h-1zM178 13h1v1h-1zM202 13h1v1h-1zM264 13h2v1h-2z"/>
<path fill="#0efb34" d="M4 0h1v1h-1zM20 0h1v1h-1zM34 0h1v1h-1zM87 0h1v1h-1zM100 0h2v1h-2zM254 0h1v1h-1zM30 1h2v1h-2zM121 1h1v1h-1zM188 1h1v1h-1zM206 1h1v1h-1zM251 1h1v1h-1zM264 1h1v1h-1zM12 2h1v1h-1zM18 2h2v1h-2zM39 2h2v1h-2zM42 2h1v1h-1zM71 2h2v1h-2zM90 2h1v1h-1zM95 2h1v1h-1zM106 2h1v1h-1zM125 2h1v1h-1zM130 2h1v1h-1zM143 2h1v1h-1zM171 2h2v1h-2zM176 2h1v1h-1zM196 2h1v1h-1zM215 2h1v1h-1zM269 2h1v1h-1zM3 3h1v1h-1zM82 3h1v1h-1zM92 3h1v1h-1zM117 3h2v1h-2zM141 3h1v1h-1zM165 3h1v1h-1zM269 3h2v1h-2zM14 4h1v1h-1zM111 4h1v1h-1zM122 4h1v1h-1zM124 4h1v1h-1zM129 4h1v1h-1zM204 4h1v1h-1zM4 5h1v1h-1zM33 5h1v1h-1zM111 5h1v1h-1zM123 5h2v1h-2zM141 5h1v1h-1zM149 5h1v1h-1zM152 5h1v1h-1zM166 5h2v1h-2zM170 5h1v1h-1zM186 5h1v1h-1zM196 5h3v1h-3zM206 5h1v1h-1zM243 5h2v1h-2zM33 6h1v1h-1zM60 6h1v1h-1zM136 6h1v1h-1zM177 6h1v1h-1zM193 6h1v1h-1zM202 6h1v1h-1zM273 6h1v1h-1zM26 7h1v1h-1zM40 7h1v1h-1zM48 7h1v1h-1zM208 7h1v1h-1zM231 7h2v1h-2zM238 7h1v1h-1zM240 7h1v1h-1zM256 7h2v1h-2zM271 7h1v1h-1zM68 8h1v1h-1zM107 8h1v1h-1zM207 8h1v1h-1zM251 8h2v1h-2zM15 9h1v1h-1zM77 9h1v1h-1zM173 9h1v1h-1zM183 9h1v1h-1zM209 9h1v1h-1zM259 9h1v1h-1zM10 10h1v1h-1zM30 10h1v1h-1zM32 10h1v1h-1zM44 10h1v1h-1zM142 10h1v1h-1zM189 10h1v1h-1zM238 10h3v1h-3zM261 10h1v1h-1zM263 10h1v1h-1zM35 11h1v1h-1zM66 11h2v1h-2zM94 11h1v1h-1zM102 11h1v1h-1zM108 11h1v1h-1zM130 11h2v1h-2zM134 11h1v1h-1zM186 11h1v1h-1zM242 11h2v1h-2zM14 12h1v1h-1zM45 12h1v1h-1zM60 12h1v1h-1zM119 12h2v1h-2zM139 12h1v1h-1zM231 12h2v1h-2zM14 13h1v1h-1zM34 13h1v1h-1zM46 13h1v1h-1zM101 13h1v1h-1zM262 13h1v1h-1z"/>
<path fill="#acd60e" d="M52 0h1v1h-1zM91 0h1v1h-1zM107 0h1v1h-1zM209 0h1v1h-1zM112 1h2v1h-2zM24 2h1v1h-1zM41 2h1v1h-1zM47 2h1v1h-1zM52 2h1v1h-1zM79 2h1v1h-1zM89 2h1v1h-1zM116 2h1v1h-1zM124 2h1v1h-1zM217 2h1v1h-1zM21 3h1v1h-1zM23 3h2v1h-2zM59 3h2v1h-2zM164 3h1v1h-1zM114 4h1v1h-1zM121 4h1v1h-1zM123 4h1v1h-1zM180 4h1v1h-1zM217 4h1v1h-1zM270 4h1v1h-1zM32 5h1v1h-1zM72 5h1v1h-1zM105 5h1v1h-1zM185 5h1v1h-1zM199 5h1v1h-1zM207 5h1v1h-1zM248 5h1v1h-1zM16 6h1v1h-1zM23 6h1v1h-1zM43 6h1v1h-1zM55 6h1v1h-1zM108 6h1v1h-1zM112 6h1v1h-1zM206 6h1v1h-1zM211 6h1v1h-1zM272 6h1v1h-1zM20 7h1v1h-1zM25 7h1v1h-1zM34 7h1v1h-1zM93 7h1v1h-1zM119 7h2v1h-2zM138 7h1v1h-1zM155 7h1v1h-1zM191 7h1v1h-1zM242 7h2v1h-2zM4 8h1v1h-1zM7 8h2v1h-2zM20 8h1v1h-1zM75 8h1v1h-1zM217 8h1v1h-1zM259 8h1v1h-1zM69 9h1v1h-1zM104 9h1v1h-1zM155 9h1v1h-1zM165 9h1v1h-1zM265 9h1v1h-1zM14 10h1v1h-1zM28 10h1v1h-1zM91 10h1v1h-1zM209 10h1v1h-1zM140 11h1v1h-1zM144 11h1v1h-1zM193 11h1v1h-1zM205 11h1v1h-1zM269 11h1v1h-1zM19 12h1v1h-1zM184 12h1v1h-1zM203 12h1v1h-1zM1 13h1v1h-1zM144 13h1v1h-1zM175 13h1v1h-1zM181 13h1v1h-1zM196 13h1v1h-1zM267 13h1v1h-1z"/>
<path fill="#502fe8" d="M24 0h1v1h-1zM65 0h1v1h-1zM90 0h1v1h-1zM155 0h1v1h-1zM172 0h1v1h-1zM212 0h1v1h-1zM230 0h1v1h-1zM244 0h1v1h-1zM259 0h1v1h-1zM270 0h1v1h-1zM40 1h1v1h-1zM166 1h1v1h-1zM203 1h1v1h-1zM233 1h1v1h-1zM48 2h1v1h-1zM77 2h1v1h-1zM102 2h1v1h-1zM135 2h1v1h-1zM155 2h1v1h-1zM161 2h1v1h-1zM190 2h1v1h-1zM203 2h1v1h-1zM209 2h1v1h-1zM249 2h1v1h-1zM253 2h1v1h-1zM6 3h1v1h-1zM10 3h1v1h-1zM38 3h1v1h-1zM47 3h1v1h-1zM144 3h1v1h-1zM147 3h1v1h-1zM155 3h1v1h-1zM205 3h1v1h-1zM45 4h1v1h-1zM112 4h1v1h-1zM161 4h1v1h-1zM225 4h1v1h-1zM237 4h1v1h-1zM273 4h1v1h-1zM18 5h1v1h-1zM31 5h1v1h-1zM78 5h2v1h-2zM90 5h1v1h-1zM113 5h1v1h-1zM126 5h1v1h-1zM136 5h1v1h-1zM249 5h2v1h-2zM30 6h1v1h-1zM34 6h1v1h-1zM85 6h1v1h-1zM116 6h1v1h-1zM142 6h1v1h-1zM22 7h1v1h-1zM55 7h1v1h-1zM74 7h1v1h-1zM100 7h1v1h-1zM130 7h2v1h-2zM196 7h1v1h-1zM227 7h1v1h-1zM269 7h1v1h-1zM45 8h1v1h-1zM144 8h1v1h-1zM151 8h1v1h-1zM186 8h1v1h-1zM194 8h1v1h-1zM198 8h1v1h-1zM216 8h1v1h-1zM241 8h1v1h-1zM265 8h1v1h-1zM9 9h1v1h-1zM22 9h1v1h-1zM73 9h1v1h-1zM75 9h1v1h-1zM96 9h1v1h-1zM117 9h1v1h-1zM131 9h1v1h-1zM212 9h1v1h-1zM261 9h2v1h-2zM273 9h1v1h-1zM120 10h1v1h-1zM181 10h1v1h-1zM201 10h1v1h-1zM221 10h1v1h-1zM246 10h1v1h-1zM270 10h1v1h-1zM8 11h1v1h-1zM48 11h1v1h-1zM64 11h1v1h-1zM70 11h1v1h-1zM77 11h1v1h-1zM81 11h2v1h-2zM166 11h1v1h-1zM182 11h1v1h-1zM215 11h1v1h-1zM221 11h1v1h-1zM223 11h1v1h-1zM227 11h2v1h-2zM265 11h1v1h-1zM11 12h1v1h-1zM42 12h1v1h-1zM121 12h1v1h-1zM134 12h1v1h-1zM164 12h1v1h-1zM259 12h1v1h-1zM29 13h1v1h-1zM63 13h1v1h-1zM139 13h1v1h-1zM190 13h2v1h-2zM194 13h1v1h-1zM198 13h1v1h-1zM245 13h1v1h-1zM253 13h1v1h-1z"/>
<path fill="#06cbc1" d="M26 0h1v1h-1zM171 0h1v1h-1zM225 0h1v1h-1zM232 0h1v1h-1zM241 0h1v1h-1zM253 0h1v1h-1zM264 0h1v1h-1zM2 1h1v1h-1zM23 1h1v1h-1zM32 1h1v1h-1zM98 1h1v1h-1zM118 1h1v1h-1zM144 1h1v1h-1zM228 1h1v1h-1zM9 2h1v1h-1zM69 2h1v1h-1zM152 2h1v1h-1zM194 2h1v1h-1zM1 3h1v1h-1zM56 3h1v1h-1zM69 3h1v1h-1zM95 3h1v1h-1zM124 3h1v1h-1zM174 3h1v1h-1zM178 3h1v1h-1zM224 3h1v1h-1zM228 3h1v1h-1zM257 3h1v1h-1zM263 3h2v1h-2zM0 4h1v1h-1zM24 4h1v1h-1zM128 4h1v1h-1zM205 4h1v1h-1zM11 5h1v1h-1zM2 6h1v1h-1zM36 6h1v1h-1zM41 6h1v1h-1zM62 6h1v1h-1zM84 6h1v1h-1zM128 6h1v1h-1zM238 6h1v1h-1zM12 7h1v1h-1zM17 7h1v1h-1zM24 7h1v1h-1zM33 7h1v1h-1zM39 7h1v1h-1zM50 7h1v1h-1zM135 7h1v1h-1zM159 7h1v1h-1zM172 7h1v1h-1zM174 7h3v1h-3zM198 7h1v1h-1zM225 7h1v1h-1zM241 7h1v1h-1zM265 7h1v1h-1zM106 8h1v1h-1zM120 8h1v1h-1zM218 8h1v1h-1zM14 9h1v1h-1zM18 9h1v1h-1zM88 9h1v1h-1zM116 9h1v1h-1zM120 9h1v1h-1zM127 9h1v1h-1zM171 9h1v1h-1zM231 9h3v1h-3zM36 10h1v1h-1zM56 10h1v1h-1zM87 10h1v1h-1zM129 10h1v1h-1zM153 10h1v1h-1zM182 10h1v1h-1zM241 10h1v1h-1zM260 10h1v1h-1zM17 11h1v1h-1zM79 11h1v1h-1zM192 11h1v1h-1zM95 12h1v1h-1zM144 12h1v1h-1zM177 12h1v1h-1zM226 12h1v1h-1zM264 12h1v1h-1zM61 13h1v1h-1zM86 13h1v1h-1zM92 13h1v1h-1zM100 13h1v1h-1zM130 13h1v1h-1zM158 13h1v1h-1zM233 13h1v1h-1z"/>
<path fill="#f90899" d="M22 0h1v1h-1zM71 0h1v1h-1zM77 0h1v1h-1zM150 0h1v1h-1zM34 1h1v1h-1zM80 1h1v1h-1zM85 1h1v1h-1zM114 1h1v1h-1zM126 1h1v1h-1zM195 1h1v1h-1zM244 1h1v1h-1zM259 1h1v1h-1zM272 1h1v1h-1zM15 2h1v1h-1zM36 2h1v1h-1zM150 2h1v1h-1zM184 2h1v1h-1zM204 2h1v1h-1zM65 3h1v1h-1zM134 3h1v1h-1zM267 3h1v1h-1zM106 4h1v1h-1zM108 4h2v1h-2zM177 4h1v1h-1zM202 4h1v1h-1zM242 4h1v1h-1zM52 5h1v1h-1zM223 5h1v1h-1zM230 5h1v1h-1zM9 6h1v1h-1zM20 6h1v1h-1zM64 6h1v1h-1zM111 6h1v1h-1zM144 6h1v1h-1zM215 6h1v1h-1zM260 6h1v1h-1zM269 6h1v1h-1zM21 7h1v1h-1zM132 7h1v1h-1zM144 7h2v1h-2zM184 7h1v1h-1zM206 7h1v1h-1zM212 7h1v1h-1zM55 8h2v1h-2zM153 8h1v1h-1zM183 8h1v1h-1zM167 9h1v1h-1zM221 9h1v1h-1zM6 10h1v1h-1zM136 10h1v1h-1zM161 10h1v1h-1zM170 10h2v1h-2zM173 10h1v1h-1zM175 10h1v1h-1zM259 10h1v1h-1zM40 11h1v1h-1zM196 11h1v1h-1zM256 11h1v1h-1zM17 12h1v1h-1zM41 12h1v1h-1zM67 12h1v1h-1zM114 12h1v1h-1zM126 12h1v1h-1zM36 13h1v1h-1zM43 13h1v1h-1zM118 13h1v1h-1zM127 13h1v1h-1zM151 13h1v1h-1zM192 13h1v1h-1zM247 13h1v1h-1z"/>
<path fill="#e2df01" d="M55 0h1v1h-1zM76 0h1v1h-1zM113 0h1v1h-1zM193 0h1v1h-1zM221 0h1v1h-1zM265 0h1v1h-1zM96 1h1v1h-1zM129 1h1v1h-1zM154 1h1v1h-1zM167 1h1v1h-1zM221 1h1v1h-1zM246 1h1v1h-1zM28 2h1v1h-1zM84 2h1v1h-1zM257 2h1v1h-1zM14 3h1v1h-1zM30 3h1v1h-1zM140 3h1v1h-1zM162 3h1v1h-1zM210 3h1v1h-1zM41 4h2v1h-2zM72 4h1v1h-1zM117 4h1v1h-1zM182 4h1v1h-1zM259 4h1v1h-1zM35 5h1v1h-1zM104 5h1v1h-1zM133 5h1v1h-1zM8 6h1v1h-1zM48 6h1v1h-1zM71 6h1v1h-1zM92 6h1v1h-1zM103 6h1v1h-1zM45 7h1v1h-1zM84 7h1v1h-1zM91 7h1v1h-1zM97 7h1v1h-1zM115 7h1v1h-1zM126 7h1v1h-1zM154 7h1v1h-1zM215 7h2v1h-2zM263 7h2v1h-2zM32 8h2v1h-2zM221 8h1v1h-1zM11 9h1v1h-1zM225 9h1v1h-1zM269 9h1v1h-1zM16 10h1v1h-1zM134 10h1v1h-1zM139 10h1v1h-1zM222 10h1v1h-1zM266 10h1v1h-1zM104 11h1v1h-1zM209 11h1v1h-1zM91 12h1v1h-1zM98 12h1v1h-1zM138 12h1v1h-1zM174 12h1v1h-1zM208 12h1v1h-1zM240 12h1v1h-1zM37 13h1v1h-1zM68 13h1v1h-1zM104 13h1v1h-1zM143 13h1v1h-1zM164 13h1v1h-1z"/>
<path fill="#55a574" d="M49 0h1v1h-1zM72 0h1v1h-1zM109 0h1v1h-1zM81 1h1v1h-1zM156 1h1v1h-1zM161 1h1v1h-1zM271 1h1v1h-1zM17 2h1v1h-1zM98 2h1v1h-1zM126 2h1v1h-1zM136 2h1v1h-1zM178 2h1v1h-1zM223 2h1v1h-1zM8 3h1v1h-1zM48 3h1v1h-1zM97 3h1v1h-1zM145 3h1v1h-1zM6 4h1v1h-1zM90 4h1v1h-1zM104 4h1v1h-1zM107 4h1v1h-1zM147 4h1v1h-1zM243 4h1v1h-1zM267 4h1v1h-1zM112 5h1v1h-1zM114 5h2v1h-2zM184 5h1v1h-1zM232 5h1v1h-1zM265 5h1v1h-1zM81 6h1v1h-1zM110 6h1v1h-1zM158 6h1v1h-1zM194 6h1v1h-1zM5 7h1v1h-1zM46 7h1v1h-1zM186 7h1v1h-1zM201 7h1v1h-1zM258 7h1v1h-1zM54 8h1v1h-1zM73 8h2v1h-2zM112 8h1v1h-1zM145 8h1v1h-1zM154 8h1v1h-1zM195 8h1v1h-1zM215 8h1v1h-1zM272 8h1v1h-1zM12 9h1v1h-1zM17 9h1v1h-1zM54 9h1v1h-1zM97 9h1v1h-1zM145 9h1v1h-1zM74 10h1v1h-1zM80 10h1v1h-1zM92 10h1v1h-1zM110 10h1v1h-1zM137 10h1v1h-1zM146 10h1v1h-1zM200 10h1v1h-1zM5 11h1v1h-1zM49 11h1v1h-1zM117 11h1v1h-1zM163 11h1v1h-1zM226 11h1v1h-1zM16 12h1v1h-1zM58 12h1v1h-1zM79 12h2v1h-2zM249 12h2v1h-2zM9 13h1v1h-1zM55 13h1v1h-1zM67 13h1v1h-1zM87 13h2v1h-2zM170 13h1v1h-1zM193 13h1v1h-1zM195 13h1v1h-1zM231 13h1v1h-1zM248 13h1v1h-1zM273 13h1v1h-1z"/>
</g>
<rect x="42.30" y="592.07" width="127.01" height="48.53" fill="#674b1b" stroke="#8e5e14" stroke-width="1.8"/>
<line x1="95.89" y1="591.17" x2="95.89" y2="640.60" stroke="#8a7048" stroke-width="0.8"/>
<line x1="149.48" y1="591.17" x2="149.48" y2="640.60" stroke="#8a7048" stroke-width="0.8"/>
<line x1="42.30" y1="578.81" x2="315.60" y2="578.81" stroke="#00ffff" stroke-width="1.8" stroke-dasharray="5.2 2.25" stroke-opacity="0.85"/>
<line x1="42.30" y1="504.67" x2="315.60" y2="504.67" stroke="#00ffff" stroke-width="1.8" stroke-dasharray="5.2 2.25" stroke-opacity="0.85"/>
<line x1="42.30" y1="430.53" x2="315.60" y2="430.53" stroke="#00ffff" stroke-width="1.8" stroke-dasharray="5.2 2.25" stroke-opacity="0.85"/>
<line x1="42.30" y1="356.39" x2="315.60" y2="356.39" stroke="#00ffff" stroke-width="1.8" stroke-dasharray="5.2 2.25" stroke-opacity="0.85"/>
<rect x="42.80" y="295.10" width="272.30" height="345.00" fill="none" stroke="#ff0000" stroke-width="1.2"/>
<rect x="42.30" y="294.60" width="273.30" height="346.00" fill="none" stroke="#5a0000" stroke-width="1"/>
<rect x="193.6" y="297.8" width="118.8" height="33.5" rx="2" fill="#ffffff" fill-opacity="0.8" stroke="#d0d0d0" stroke-width="0.8"/>
<rect x="197" y="301.7" width="13.8" height="4.6" fill="none" stroke="#ff0000" stroke-width="1.8"/>
<line x1="196.6" y1="313.7" x2="211.4" y2="313.7" stroke="#00ffff" stroke-opacity="0.85" stroke-width="1.6" stroke-dasharray="5 2.4"/>
<rect x="196.5" y="321.6" width="15.2" height="5.9" fill="#ffa500" fill-opacity="0.45"/>
<text x="215.79" y="305.90" font-size="7.31" fill="#222" textLength="63.83" lengthAdjust="spacingAndGlyphs" stroke="#222" stroke-width="0.05">Allocated: RB 0-50</text>
<text x="215.17" y="316.30" font-size="7.31" fill="#222" textLength="94.52" lengthAdjust="spacingAndGlyphs" stroke="#222" stroke-width="0.05">DMRS Symbols [2, 5, 8, 11]</text>
<text x="215.43" y="326.60" font-size="7.31" fill="#222" textLength="90.27" lengthAdjust="spacingAndGlyphs" stroke="#222" stroke-width="0.05">CORESET RB0-23, Sym0-1</text>
<line x1="38.90" y1="628.24" x2="42.30" y2="628.24" stroke="#000" stroke-width="0.8"/>
<text x="29.37" y="631.94" font-size="10.18" fill="#1a1a1a" textLength="5.63" lengthAdjust="spacingAndGlyphs" stroke="#1a1a1a" stroke-width="0.15">0</text>
<line x1="38.90" y1="578.81" x2="42.30" y2="578.81" stroke="#000" stroke-width="0.8"/>
<text x="29.67" y="582.51" font-size="10.18" fill="#1a1a1a" textLength="5.42" lengthAdjust="spacingAndGlyphs" stroke="#1a1a1a" stroke-width="0.15">2</text>
<line x1="38.90" y1="529.39" x2="42.30" y2="529.39" stroke="#000" stroke-width="0.8"/>
<text x="29.27" y="533.09" font-size="10.18" fill="#1a1a1a" textLength="5.63" lengthAdjust="spacingAndGlyphs" stroke="#1a1a1a" stroke-width="0.15">4</text>
<line x1="38.90" y1="479.96" x2="42.30" y2="479.96" stroke="#000" stroke-width="0.8"/>
<text x="29.24" y="483.66" font-size="10.18" fill="#1a1a1a" textLength="5.82" lengthAdjust="spacingAndGlyphs" stroke="#1a1a1a" stroke-width="0.15">6</text>
<line x1="38.90" y1="430.53" x2="42.30" y2="430.53" stroke="#000" stroke-width="0.8"/>
<text x="29.36" y="434.23" font-size="10.18" fill="#1a1a1a" textLength="5.69" lengthAdjust="spacingAndGlyphs" stroke="#1a1a1a" stroke-width="0.15">8</text>
<line x1="38.90" y1="381.10" x2="42.30" y2="381.10" stroke="#000" stroke-width="0.8"/>
<text x="23.27" y="384.80" font-size="10.18" fill="#1a1a1a" textLength="11.74" lengthAdjust="spacingAndGlyphs" stroke="#1a1a1a" stroke-width="0.15">10</text>
<line x1="38.90" y1="331.67" x2="42.30" y2="331.67" stroke="#000" stroke-width="0.8"/>
<text x="23.61" y="335.37" font-size="10.18" fill="#1a1a1a" textLength="11.51" lengthAdjust="spacingAndGlyphs" stroke="#1a1a1a" stroke-width="0.15">12</text>
<line x1="42.52" y1="640.60" x2="42.52" y2="644.00" stroke="#000" stroke-width="0.8"/>
<text x="39.71" y="655.70" font-size="10.18" fill="#1a1a1a" textLength="5.63" lengthAdjust="spacingAndGlyphs" stroke="#1a1a1a" stroke-width="0.15">0</text>
<line x1="87.18" y1="640.60" x2="87.18" y2="644.00" stroke="#000" stroke-width="0.8"/>
<text x="78.05" y="655.70" font-size="10.18" fill="#1a1a1a" textLength="17.87" lengthAdjust="spacingAndGlyphs" stroke="#1a1a1a" stroke-width="0.15">100</text>
<line x1="131.84" y1="640.60" x2="131.84" y2="644.00" stroke="#000" stroke-width="0.8"/>
<text x="122.80" y="655.70" font-size="10.18" fill="#1a1a1a" textLength="17.94" lengthAdjust="spacingAndGlyphs" stroke="#1a1a1a" stroke-width="0.15">200</text>
<line x1="176.49" y1="640.60" x2="176.49" y2="644.00" stroke="#000" stroke-width="0.8"/>
<text x="167.61" y="655.70" font-size="10.18" fill="#1a1a1a" textLength="17.78" lengthAdjust="spacingAndGlyphs" stroke="#1a1a1a" stroke-width="0.15">300</text>
<line x1="221.15" y1="640.60" x2="221.15" y2="644.00" stroke="#000" stroke-width="0.8"/>
<text x="212.30" y="655.70" font-size="10.18" fill="#1a1a1a" textLength="17.88" lengthAdjust="spacingAndGlyphs" stroke="#1a1a1a" stroke-width="0.15">400</text>
<line x1="265.81" y1="640.60" x2="265.81" y2="644.00" stroke="#000" stroke-width="0.8"/>
<text x="256.91" y="655.70" font-size="10.18" fill="#1a1a1a" textLength="17.79" lengthAdjust="spacingAndGlyphs" stroke="#1a1a1a" stroke-width="0.15">500</text>
<line x1="310.46" y1="640.60" x2="310.46" y2="644.00" stroke="#000" stroke-width="0.8"/>
<text x="301.41" y="655.70" font-size="10.18" fill="#1a1a1a" textLength="17.98" lengthAdjust="spacingAndGlyphs" stroke="#1a1a1a" stroke-width="0.15">600</text>
<text x="114.65" y="277.90" font-size="10.18" fill="#1a1a1a" textLength="128.19" lengthAdjust="spacingAndGlyphs" stroke="#1a1a1a" stroke-width="0.15">Resource Grid - Magnitude</text>
<text x="42.10" y="288.90" font-size="10.18" fill="#1a1a1a" textLength="273.81" lengthAdjust="spacingAndGlyphs" stroke="#1a1a1a" stroke-width="0.15">Channel: 20.0 MHz (51 RBs), Allocated: RB 0-50 (51 RBs)</text>
<text x="60.41" y="669.80" font-size="10.18" fill="#1a1a1a" textLength="237.26" lengthAdjust="spacingAndGlyphs" stroke="#1a1a1a" stroke-width="0.15">Subcarrier Index (Full Channel: 51 RBs = 612 SC)</text>
<text transform="translate(15.90,468.00) rotate(-90)" x="-48.70" y="0.00" font-size="10.18" fill="#1a1a1a" textLength="97.01" lengthAdjust="spacingAndGlyphs" stroke="#1a1a1a" stroke-width="0.15">OFDM Symbol Index</text>
<line x1="415.40" y1="578.90" x2="688.75" y2="578.90" stroke="#ffffff" stroke-width="1.8" stroke-dasharray="5.2 2.25" stroke-opacity="0.85"/>
<line x1="415.40" y1="504.73" x2="688.75" y2="504.73" stroke="#ffffff" stroke-width="1.8" stroke-dasharray="5.2 2.25" stroke-opacity="0.85"/>
<line x1="415.40" y1="430.57" x2="688.75" y2="430.57" stroke="#ffffff" stroke-width="1.8" stroke-dasharray="5.2 2.25" stroke-opacity="0.85"/>
<line x1="415.40" y1="356.40" x2="688.75" y2="356.40" stroke="#ffffff" stroke-width="1.8" stroke-dasharray="5.2 2.25" stroke-opacity="0.85"/>
<rect x="415.70" y="591.96" width="128.34" height="48.54" fill="#262626" stroke="#f5a300" stroke-width="2"/>
<line x1="469.00" y1="592.96" x2="469.00" y2="639.70" stroke="#404040" stroke-width="0.8"/>
<line x1="522.60" y1="592.96" x2="522.60" y2="639.70" stroke="#404040" stroke-width="0.8"/>
<rect x="415.40" y="294.60" width="273.35" height="346.10" fill="none" stroke="#000" stroke-width="0.8"/>
<line x1="412.00" y1="628.34" x2="415.40" y2="628.34" stroke="#000" stroke-width="0.8"/>
<text x="402.47" y="632.04" font-size="10.18" fill="#1a1a1a" textLength="5.63" lengthAdjust="spacingAndGlyphs" stroke="#1a1a1a" stroke-width="0.15">0</text>
<line x1="412.00" y1="578.90" x2="415.40" y2="578.90" stroke="#000" stroke-width="0.8"/>
<text x="402.77" y="582.60" font-size="10.18" fill="#1a1a1a" textLength="5.42" lengthAdjust="spacingAndGlyphs" stroke="#1a1a1a" stroke-width="0.15">2</text>
<line x1="412.00" y1="529.45" x2="415.40" y2="529.45" stroke="#000" stroke-width="0.8"/>
<text x="402.37" y="533.15" font-size="10.18" fill="#1a1a1a" textLength="5.63" lengthAdjust="spacingAndGlyphs" stroke="#1a1a1a" stroke-width="0.15">4</text>
<line x1="412.00" y1="480.01" x2="415.40" y2="480.01" stroke="#000" stroke-width="0.8"/>
<text x="402.34" y="483.71" font-size="10.18" fill="#1a1a1a" textLength="5.82" lengthAdjust="spacingAndGlyphs" stroke="#1a1a1a" stroke-width="0.15">6</text>
<line x1="412.00" y1="430.57" x2="415.40" y2="430.57" stroke="#000" stroke-width="0.8"/>
<text x="402.46" y="434.27" font-size="10.18" fill="#1a1a1a" textLength="5.69" lengthAdjust="spacingAndGlyphs" stroke="#1a1a1a" stroke-width="0.15">8</text>
<line x1="412.00" y1="381.13" x2="415.40" y2="381.13" stroke="#000" stroke-width="0.8"/>
<text x="396.37" y="384.83" font-size="10.18" fill="#1a1a1a" textLength="11.74" lengthAdjust="spacingAndGlyphs" stroke="#1a1a1a" stroke-width="0.15">10</text>
<line x1="412.00" y1="331.68" x2="415.40" y2="331.68" stroke="#000" stroke-width="0.8"/>
<text x="396.71" y="335.38" font-size="10.18" fill="#1a1a1a" textLength="11.51" lengthAdjust="spacingAndGlyphs" stroke="#1a1a1a" stroke-width="0.15">12</text>
<line x1="415.62" y1="640.70" x2="415.62" y2="644.10" stroke="#000" stroke-width="0.8"/>
<text x="412.81" y="655.70" font-size="10.18" fill="#1a1a1a" textLength="5.63" lengthAdjust="spacingAndGlyphs" stroke="#1a1a1a" stroke-width="0.15">0</text>
<line x1="460.29" y1="640.70" x2="460.29" y2="644.10" stroke="#000" stroke-width="0.8"/>
<text x="451.16" y="655.70" font-size="10.18" fill="#1a1a1a" textLength="17.87" lengthAdjust="spacingAndGlyphs" stroke="#1a1a1a" stroke-width="0.15">100</text>
<line x1="504.95" y1="640.70" x2="504.95" y2="644.10" stroke="#000" stroke-width="0.8"/>
<text x="495.92" y="655.70" font-size="10.18" fill="#1a1a1a" textLength="17.94" lengthAdjust="spacingAndGlyphs" stroke="#1a1a1a" stroke-width="0.15">200</text>
<line x1="549.62" y1="640.70" x2="549.62" y2="644.10" stroke="#000" stroke-width="0.8"/>
<text x="540.74" y="655.70" font-size="10.18" fill="#1a1a1a" textLength="17.78" lengthAdjust="spacingAndGlyphs" stroke="#1a1a1a" stroke-width="0.15">300</text>
<line x1="594.28" y1="640.70" x2="594.28" y2="644.10" stroke="#000" stroke-width="0.8"/>
<text x="585.43" y="655.70" font-size="10.18" fill="#1a1a1a" textLength="17.88" lengthAdjust="spacingAndGlyphs" stroke="#1a1a1a" stroke-width="0.15">400</text>
<line x1="638.95" y1="640.70" x2="638.95" y2="644.10" stroke="#000" stroke-width="0.8"/>
<text x="630.05" y="655.70" font-size="10.18" fill="#1a1a1a" textLength="17.79" lengthAdjust="spacingAndGlyphs" stroke="#1a1a1a" stroke-width="0.15">500</text>
<line x1="683.61" y1="640.70" x2="683.61" y2="644.10" stroke="#000" stroke-width="0.8"/>
<text x="674.56" y="655.70" font-size="10.18" fill="#1a1a1a" textLength="17.98" lengthAdjust="spacingAndGlyphs" stroke="#1a1a1a" stroke-width="0.15">600</text>
<text x="498.90" y="277.90" font-size="10.18" fill="#1a1a1a" textLength="105.96" lengthAdjust="spacingAndGlyphs" stroke="#1a1a1a" stroke-width="0.15">Resource Grid - Phase</text>
<text x="459.20" y="288.90" font-size="10.18" fill="#1a1a1a" textLength="185.63" lengthAdjust="spacingAndGlyphs" stroke="#1a1a1a" stroke-width="0.15">Channel: 20.0 MHz, Allocated: RB 0-50</text>
<text x="457.69" y="669.80" font-size="10.18" fill="#1a1a1a" textLength="188.94" lengthAdjust="spacingAndGlyphs" stroke="#1a1a1a" stroke-width="0.15">Subcarrier Index (Full Channel: 51 RBs)</text>
<text transform="translate(389.40,468.00) rotate(-90)" x="-48.70" y="0.00" font-size="10.18" fill="#1a1a1a" textLength="97.01" lengthAdjust="spacingAndGlyphs" stroke="#1a1a1a" stroke-width="0.15">OFDM Symbol Index</text>
<defs><linearGradient id="vir" x1="0" y1="0" x2="0" y2="1"><stop offset="0.0000" stop-color="#fde725"/><stop offset="0.0625" stop-color="#d8e219"/><stop offset="0.1250" stop-color="#addc30"/><stop offset="0.1875" stop-color="#84d44b"/><stop offset="0.2500" stop-color="#5ec962"/><stop offset="0.3125" stop-color="#3fbc73"/><stop offset="0.3750" stop-color="#28ae80"/><stop offset="0.4375" stop-color="#1fa088"/><stop offset="0.5000" stop-color="#21918c"/><stop offset="0.5625" stop-color="#26828e"/><stop offset="0.6250" stop-color="#2c728e"/><stop offset="0.6875" stop-color="#33638d"/><stop offset="0.7500" stop-color="#3b528b"/><stop offset="0.8125" stop-color="#424086"/><stop offset="0.8750" stop-color="#472d7b"/><stop offset="0.9375" stop-color="#48186a"/><stop offset="1.0000" stop-color="#440154"/></linearGradient>
<linearGradient id="hsvg" x1="0" y1="0" x2="0" y2="1"><stop offset="0.0000" stop-color="#ff0018"/><stop offset="0.0417" stop-color="#ff0053"/><stop offset="0.0833" stop-color="#ff0094"/><stop offset="0.1250" stop-color="#ff00cf"/><stop offset="0.1667" stop-color="#ee00ff"/><stop offset="0.2083" stop-color="#ad00ff"/><stop offset="0.2500" stop-color="#7200ff"/><stop offset="0.2917" stop-color="#3100ff"/><stop offset="0.3333" stop-color="#0010ff"/><stop offset="0.3750" stop-color="#004bff"/><stop offset="0.4167" stop-color="#008cff"/><stop offset="0.4583" stop-color="#00cdff"/><stop offset="0.5000" stop-color="#00fff6"/><stop offset="0.5417" stop-color="#00ffb5"/><stop offset="0.5833" stop-color="#00ff74"/><stop offset="0.6250" stop-color="#00ff39"/><stop offset="0.6667" stop-color="#08ff00"/><stop offset="0.7083" stop-color="#49ff00"/><stop offset="0.7500" stop-color="#84ff00"/><stop offset="0.7917" stop-color="#c5ff00"/><stop offset="0.8333" stop-color="#fcf500"/><stop offset="0.8750" stop-color="#ffbd00"/><stop offset="0.9167" stop-color="#ff7c00"/><stop offset="0.9583" stop-color="#ff3b00"/><stop offset="1.0000" stop-color="#ff0000"/></linearGradient></defs>
<rect x="332.5" y="329.5" width="14.10" height="276.40" fill="url(#vir)" stroke="#000" stroke-width="0.8"/>
<line x1="346.60" y1="605.90" x2="350.00" y2="605.90" stroke="#000" stroke-width="0.8"/>
<text x="353.78" y="609.80" font-size="10.18" fill="#1a1a1a" textLength="14.83" lengthAdjust="spacingAndGlyphs" stroke="#1a1a1a" stroke-width="0.15">0.0</text>
<line x1="346.60" y1="564.71" x2="350.00" y2="564.71" stroke="#000" stroke-width="0.8"/>
<text x="353.79" y="568.61" font-size="10.18" fill="#1a1a1a" textLength="14.61" lengthAdjust="spacingAndGlyphs" stroke="#1a1a1a" stroke-width="0.15">0.2</text>
<line x1="346.60" y1="523.52" x2="350.00" y2="523.52" stroke="#000" stroke-width="0.8"/>
<text x="353.78" y="527.42" font-size="10.18" fill="#1a1a1a" textLength="14.82" lengthAdjust="spacingAndGlyphs" stroke="#1a1a1a" stroke-width="0.15">0.4</text>
<line x1="346.60" y1="482.32" x2="350.00" y2="482.32" stroke="#000" stroke-width="0.8"/>
<text x="353.78" y="486.22" font-size="10.18" fill="#1a1a1a" textLength="14.92" lengthAdjust="spacingAndGlyphs" stroke="#1a1a1a" stroke-width="0.15">0.6</text>
<line x1="346.60" y1="441.13" x2="350.00" y2="441.13" stroke="#000" stroke-width="0.8"/>
<text x="353.78" y="445.03" font-size="10.18" fill="#1a1a1a" textLength="14.86" lengthAdjust="spacingAndGlyphs" stroke="#1a1a1a" stroke-width="0.15">0.8</text>
<line x1="346.60" y1="399.94" x2="350.00" y2="399.94" stroke="#000" stroke-width="0.8"/>
<text x="353.39" y="403.84" font-size="10.18" fill="#1a1a1a" textLength="14.80" lengthAdjust="spacingAndGlyphs" stroke="#1a1a1a" stroke-width="0.15">1.0</text>
<line x1="346.60" y1="358.75" x2="350.00" y2="358.75" stroke="#000" stroke-width="0.8"/>
<text x="353.40" y="362.65" font-size="10.18" fill="#1a1a1a" textLength="14.58" lengthAdjust="spacingAndGlyphs" stroke="#1a1a1a" stroke-width="0.15">1.2</text>
<text transform="translate(379.90,468.75) rotate(-90)" x="-25.75" y="0.00" font-size="10.18" fill="#1a1a1a" textLength="51.08" lengthAdjust="spacingAndGlyphs" stroke="#1a1a1a" stroke-width="0.15">Magnitude</text>
<rect x="706.0" y="329.4" width="13.50" height="277.00" fill="url(#hsvg)" stroke="#000" stroke-width="0.8"/>
<line x1="719.50" y1="600.14" x2="722.90" y2="600.14" stroke="#000" stroke-width="0.8"/>
<text x="726.42" y="603.94" font-size="10.18" fill="#1a1a1a" textLength="13.47" lengthAdjust="spacingAndGlyphs" stroke="#1a1a1a" stroke-width="0.15">−3</text>
<line x1="719.50" y1="556.06" x2="722.90" y2="556.06" stroke="#000" stroke-width="0.8"/>
<text x="726.42" y="559.86" font-size="10.18" fill="#1a1a1a" textLength="13.34" lengthAdjust="spacingAndGlyphs" stroke="#1a1a1a" stroke-width="0.15">−2</text>
<line x1="719.50" y1="511.98" x2="722.90" y2="511.98" stroke="#000" stroke-width="0.8"/>
<text x="726.42" y="515.78" font-size="10.18" fill="#1a1a1a" textLength="13.40" lengthAdjust="spacingAndGlyphs" stroke="#1a1a1a" stroke-width="0.15">−1</text>
<line x1="719.50" y1="467.90" x2="722.90" y2="467.90" stroke="#000" stroke-width="0.8"/>
<text x="726.60" y="471.70" font-size="10.18" fill="#1a1a1a" textLength="5.63" lengthAdjust="spacingAndGlyphs" stroke="#1a1a1a" stroke-width="0.15">0</text>
<line x1="719.50" y1="423.82" x2="722.90" y2="423.82" stroke="#000" stroke-width="0.8"/>
<text x="726.26" y="427.62" font-size="10.18" fill="#1a1a1a" textLength="5.38" lengthAdjust="spacingAndGlyphs" stroke="#1a1a1a" stroke-width="0.15">1</text>
<line x1="719.50" y1="379.74" x2="722.90" y2="379.74" stroke="#000" stroke-width="0.8"/>
<text x="726.51" y="383.54" font-size="10.18" fill="#1a1a1a" textLength="5.42" lengthAdjust="spacingAndGlyphs" stroke="#1a1a1a" stroke-width="0.15">2</text>
<line x1="719.50" y1="335.66" x2="722.90" y2="335.66" stroke="#000" stroke-width="0.8"/>
<text x="726.63" y="339.46" font-size="10.18" fill="#1a1a1a" textLength="5.41" lengthAdjust="spacingAndGlyphs" stroke="#1a1a1a" stroke-width="0.15">3</text>
<text transform="translate(751.60,467.90) rotate(-90)" x="-27.56" y="0.00" font-size="10.18" fill="#1a1a1a" textLength="54.91" lengthAdjust="spacingAndGlyphs" stroke="#1a1a1a" stroke-width="0.15">Phase (rad)</text>
<path d="M20 692.2L12.8 698.6L14 699.6L20 694.4L26 699.6L27.2 698.6L24.6 696.3V692.8H23V694.9Z" fill="#000"/>
<path d="M15 699.4V703.2H18.6V700H21.4V703.2H25V699.4L20 695Z" fill="#000"/>
<path d="M42.4 691.4L37.2 696.5L42.4 701.6M37.5 696.5H47.8" stroke="#727272" stroke-width="2.8" fill="none" stroke-linejoin="miter"/>
<path d="M60.5 691.4L65.7 696.5L60.5 701.6M65.4 696.5H55.1" stroke="#727272" stroke-width="2.8" fill="none" stroke-linejoin="miter"/>
<line x1="75.60" y1="688.00" x2="75.60" y2="704.50" stroke="#a8a8a8" stroke-width="0.8"/>
<line x1="141.50" y1="688.00" x2="141.50" y2="704.50" stroke="#a8a8a8" stroke-width="0.8"/>
<path d="M88 689V704.5M80.5 696.8H95.5" stroke="#000" stroke-width="2.2"/>
<path d="M88 688.6L84.6 692H91.4Z M88 705L84.6 701.6H91.4Z M80.2 696.8L83.6 693.4V700.2Z M95.9 696.8L92.5 693.4V700.2Z" fill="#000"/>
<circle cx="106" cy="695.6" r="4.6" fill="none" stroke="#000" stroke-width="2.1"/>
<path d="M109.2 698.8L114 703.6" stroke="#000" stroke-width="2.4"/>
<path d="M121 693H135M121 697H135M121 701.5H135" stroke="#000" stroke-width="1.3"/>
<rect x="124.50" y="691.00" width="3.00" height="4.00" fill="#000"/>
<rect x="129.00" y="695.00" width="3.00" height="4.00" fill="#000"/>
<rect x="123.50" y="699.50" width="3.00" height="4.00" fill="#000"/>
<path d="M148.8 691H159L161.2 693.2V703.2H148.8Z" fill="none" stroke="#000" stroke-width="1.6"/>
<rect x="151.50" y="691.00" width="6.00" height="4.30" fill="#000"/>
<rect x="152.60" y="691.80" width="3.60" height="2.60" fill="#d9d9d9"/>
<rect x="151.20" y="698.50" width="7.60" height="4.50" fill="#000"/>
<rect x="152.40" y="699.60" width="5.20" height="2.80" fill="#fff"/>
</svg></body></html>
